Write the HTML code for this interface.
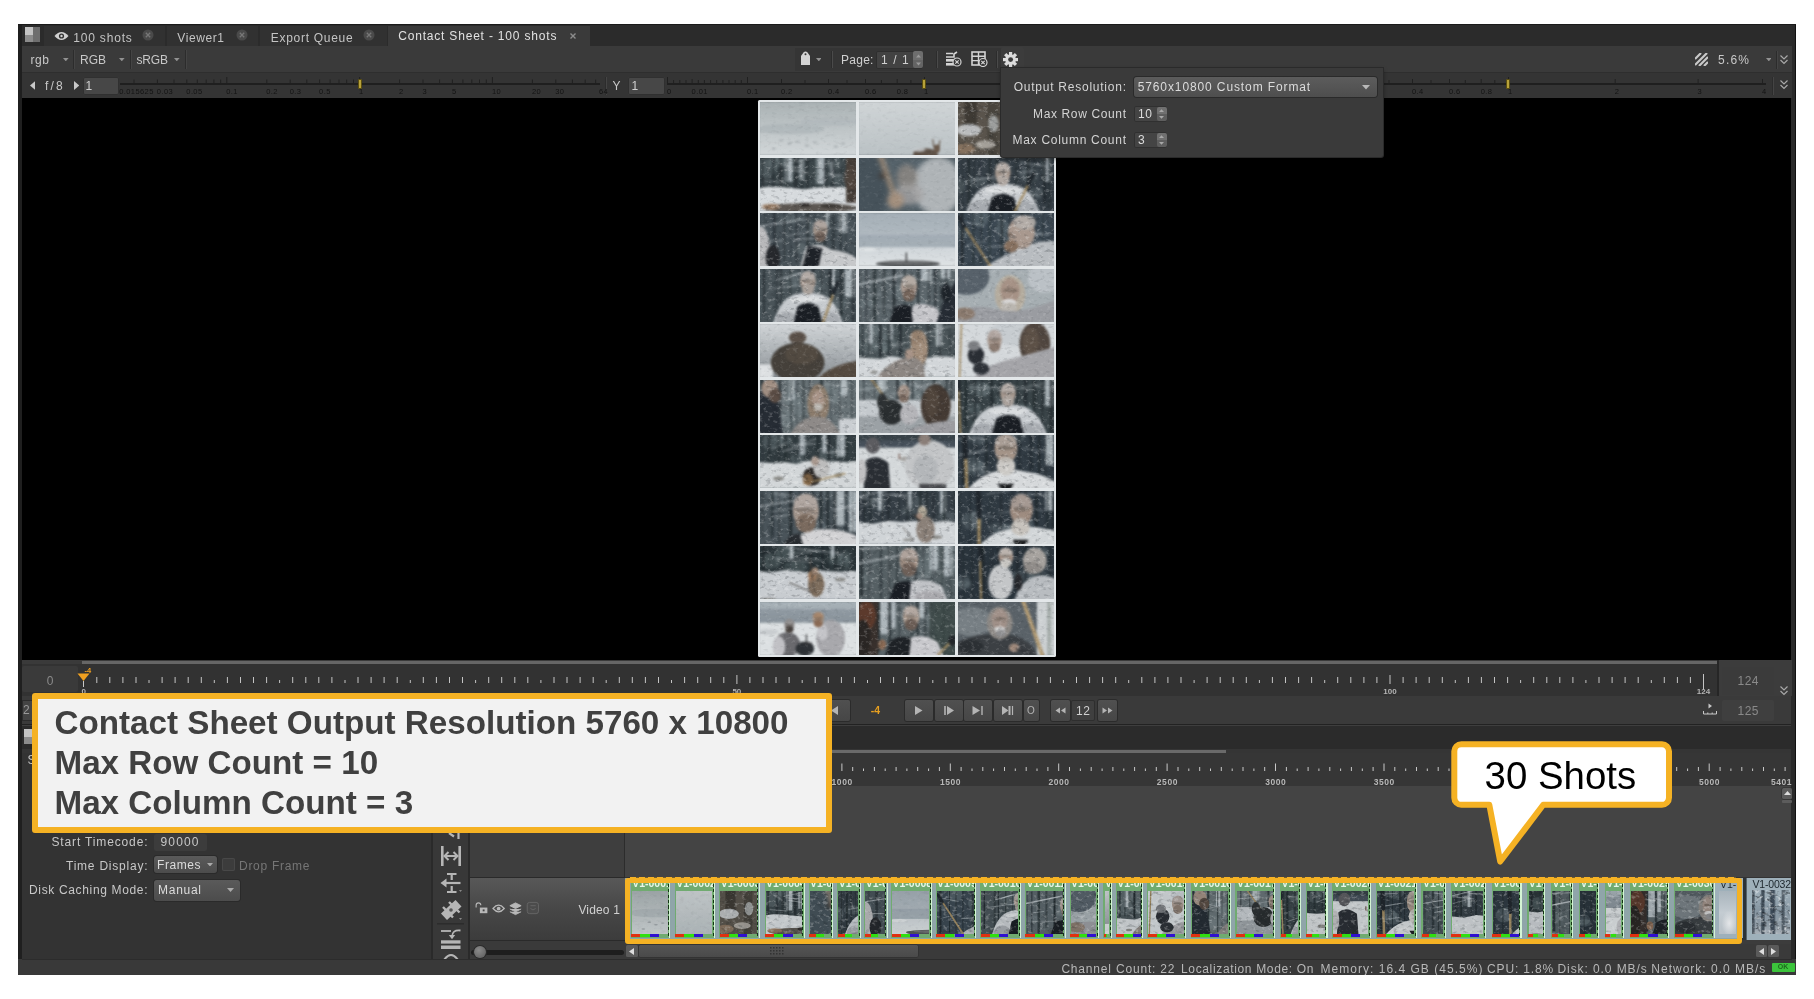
<!DOCTYPE html>
<html><head><meta charset="utf-8"><title>Contact Sheet</title>
<style>
html,body{margin:0;padding:0;background:#fff;}
body{width:1814px;height:999px;position:relative;overflow:hidden;font-family:"Liberation Sans",sans-serif;will-change:transform;-webkit-font-smoothing:antialiased;}
div,svg{position:absolute;box-sizing:border-box;}
</style></head><body>
<div style="left:18px;top:24px;width:1778px;height:951px;background:#3a3a3a;"></div>
<div style="left:18px;top:24px;width:4px;height:951px;background:#1f1f1f;"></div>
<div style="left:1791px;top:24px;width:5px;height:951px;background:#2a2a2a;"></div>
<div style="left:1795px;top:24px;width:1px;height:951px;background:#111;"></div>
<div style="left:22px;top:24px;width:1770px;height:22px;background:#2b2b2b;"></div>
<div style="left:18px;top:24px;width:1778px;height:1px;background:#1a1a1a;"></div>
<div style="left:25px;top:27px;width:8px;height:8px;background:#c4c4c4;"></div>
<div style="left:25px;top:35px;width:8px;height:7px;background:#8c8c8c;"></div>
<div style="left:33px;top:27px;width:7px;height:15px;background:#6e6e6e;"></div>
<div style="left:44px;top:26px;width:121px;height:20px;background:#313131;"></div>
<div style="left:167px;top:26px;width:91px;height:20px;background:#313131;"></div>
<div style="left:260px;top:26px;width:127px;height:20px;background:#313131;"></div>
<div style="left:388px;top:26px;width:201.5px;height:20px;background:#3a3a3a;"></div>
<svg style="left:54px;top:31px" width="15" height="10" viewBox="0 0 15 10"><path d="M0.5 5 Q7.5 -3 14.5 5 Q7.5 13 0.5 5Z" fill="#d0d0d0"/><circle cx="7.5" cy="5" r="2.6" fill="#313131"/><circle cx="7.5" cy="5" r="1.2" fill="#d0d0d0"/></svg>
<div style="left:73.20px;top:30.50px;font-size:12px;line-height:14px;color:#c4c4c4;white-space:pre;letter-spacing:0.820px;">100 shots</div>
<div style="left:177.30px;top:30.50px;font-size:12px;line-height:14px;color:#c4c4c4;white-space:pre;letter-spacing:0.593px;">Viewer1</div>
<div style="left:270.70px;top:30.50px;font-size:12px;line-height:14px;color:#c4c4c4;white-space:pre;letter-spacing:0.723px;">Export Queue</div>
<div style="left:398.20px;top:29.00px;font-size:12px;line-height:14px;color:#e2e2e2;white-space:pre;letter-spacing:0.810px;">Contact Sheet - 100 shots</div>
<svg style="left:141.6px;top:29px" width="12" height="12" viewBox="0 0 12 12"><circle cx="6" cy="6" r="5.5" fill="#4a4a4a"/><path d="M3.8 3.8 L8.2 8.2 M8.2 3.8 L3.8 8.2" stroke="#777" stroke-width="1.3"/></svg>
<svg style="left:236px;top:29px" width="12" height="12" viewBox="0 0 12 12"><circle cx="6" cy="6" r="5.5" fill="#4a4a4a"/><path d="M3.8 3.8 L8.2 8.2 M8.2 3.8 L3.8 8.2" stroke="#777" stroke-width="1.3"/></svg>
<svg style="left:363px;top:29px" width="12" height="12" viewBox="0 0 12 12"><circle cx="6" cy="6" r="5.5" fill="#4a4a4a"/><path d="M3.8 3.8 L8.2 8.2 M8.2 3.8 L3.8 8.2" stroke="#777" stroke-width="1.3"/></svg>
<svg style="left:568px;top:31px" width="10" height="10" viewBox="0 0 10 10"><path d="M2.5 2.5 L7.5 7.5 M7.5 2.5 L2.5 7.5" stroke="#8c8c8c" stroke-width="1.4"/></svg>
<div style="left:22px;top:46px;width:1770px;height:27px;background:#3a3a3a;"></div>
<div style="left:22px;top:72px;width:1770px;height:1px;background:#2e2e2e;"></div>
<div style="left:30.50px;top:52.50px;font-size:12px;line-height:14px;color:#c8c8c8;white-space:pre;letter-spacing:0.578px;">rgb</div>
<div style="left:80.00px;top:52.50px;font-size:12px;line-height:14px;color:#c8c8c8;white-space:pre;letter-spacing:-0.002px;">RGB</div>
<div style="left:136.50px;top:52.50px;font-size:12px;line-height:14px;color:#c8c8c8;white-space:pre;letter-spacing:-0.168px;">sRGB</div>
<svg style="left:63.2px;top:58px" width="5.6" height="3.4" viewBox="0 0 7 4"><path d="M0 0 H7 L3.5 4Z" fill="#929292"/></svg>
<svg style="left:119.2px;top:58px" width="5.6" height="3.4" viewBox="0 0 7 4"><path d="M0 0 H7 L3.5 4Z" fill="#929292"/></svg>
<svg style="left:174.2px;top:58px" width="5.6" height="3.4" viewBox="0 0 7 4"><path d="M0 0 H7 L3.5 4Z" fill="#929292"/></svg>
<svg style="left:1765.9px;top:58px" width="5.6" height="3.4" viewBox="0 0 7 4"><path d="M0 0 H7 L3.5 4Z" fill="#929292"/></svg>
<div style="left:73px;top:50px;width:1px;height:19px;background:#2c2c2c;"></div>
<div style="left:74px;top:50px;width:1px;height:19px;background:#444;"></div>
<div style="left:129.5px;top:50px;width:1px;height:19px;background:#2c2c2c;"></div>
<div style="left:130.5px;top:50px;width:1px;height:19px;background:#444;"></div>
<div style="left:184.5px;top:50px;width:1px;height:19px;background:#2c2c2c;"></div>
<div style="left:185.5px;top:50px;width:1px;height:19px;background:#444;"></div>
<div style="left:795px;top:48px;width:229px;height:23px;background:#353535;"></div>
<svg style="left:800px;top:51px" width="11" height="15" viewBox="0 0 11 15"><path d="M1 5 L3.5 1.5 Q5.5 -0.3 7.5 1.5 L10 5 V14 H1Z" fill="#d4d4d4"/><circle cx="5.5" cy="3.2" r="1" fill="#353535"/></svg>
<svg style="left:815.9px;top:58px" width="5.6" height="3.4" viewBox="0 0 7 4"><path d="M0 0 H7 L3.5 4Z" fill="#929292"/></svg>
<div style="left:830.5px;top:51px;width:1px;height:17px;background:#2c2c2c;"></div>
<div style="left:831.5px;top:51px;width:1px;height:17px;background:#4a4a4a;"></div>
<div style="left:935.5px;top:51px;width:1px;height:17px;background:#2c2c2c;"></div>
<div style="left:936.5px;top:51px;width:1px;height:17px;background:#4a4a4a;"></div>
<div style="left:995.5px;top:51px;width:1px;height:17px;background:#2c2c2c;"></div>
<div style="left:996.5px;top:51px;width:1px;height:17px;background:#4a4a4a;"></div>
<div style="left:841.00px;top:52.50px;font-size:12px;line-height:14px;color:#d0d0d0;white-space:pre;letter-spacing:0.260px;">Page:</div>
<div style="left:876px;top:50.5px;width:47px;height:18px;background:#424242;border-radius:2px;box-shadow:inset 0 0 0 1px #2e2e2e;"></div>
<div style="left:881.00px;top:52.50px;font-size:12px;line-height:14px;color:#d0d0d0;white-space:pre;letter-spacing:1.063px;">1 / 1</div>
<div style="left:912.5px;top:51px;width:10.5px;height:8.5px;background:#6e6e6e;border-radius:2px 2px 0 0;"></div>
<div style="left:912.5px;top:59.5px;width:10.5px;height:8.5px;background:#646464;border-radius:0 0 2px 2px;"></div>
<svg style="left:915.5px;top:54px" width="5" height="12" viewBox="0 0 5 12"><path d="M0 3.5 L2.5 0.5 L5 3.5Z M0 8.5 L2.5 11.5 L5 8.5Z" fill="#999"/></svg>
<svg style="left:945px;top:51px" width="17" height="16" viewBox="0 0 17 16"><path d="M1 2.5 H8 M1 6 H9 V3 L12 1" stroke="#d4d4d4" stroke-width="1.6" fill="none"/><rect x="1" y="8" width="8" height="2.6" fill="#d4d4d4"/><rect x="1" y="12" width="8" height="2.6" fill="#d4d4d4"/><circle cx="12" cy="11" r="4" fill="#353535" stroke="#d4d4d4" stroke-width="1.2"/><path d="M10.3 9.3 L13.7 12.7 M13.7 9.3 L10.3 12.7" stroke="#d4d4d4" stroke-width="1.2"/></svg>
<svg style="left:970.5px;top:51px" width="17" height="16" viewBox="0 0 17 16"><rect x="1" y="1" width="13" height="13" fill="none" stroke="#d4d4d4" stroke-width="1.6"/><path d="M1 5.3 H14 M1 9.6 H14 M7.5 1 V14" stroke="#d4d4d4" stroke-width="1.4"/><circle cx="12" cy="11.5" r="4" fill="#353535" stroke="#d4d4d4" stroke-width="1.2"/><path d="M10.3 9.8 L13.7 13.2 M13.7 9.8 L10.3 13.2" stroke="#d4d4d4" stroke-width="1.2"/></svg>
<div style="left:1001px;top:47px;width:23px;height:24px;background:#3c3c3c;border-radius:2px;"></div>
<svg style="left:1003.2px;top:51.8px" width="15.2" height="15.2" viewBox="-8 -8 16 16"><g fill="#dcdcdc"><rect x="-1.7" y="-8" width="3.4" height="4" transform="rotate(0)"/><rect x="-1.7" y="-8" width="3.4" height="4" transform="rotate(45)"/><rect x="-1.7" y="-8" width="3.4" height="4" transform="rotate(90)"/><rect x="-1.7" y="-8" width="3.4" height="4" transform="rotate(135)"/><rect x="-1.7" y="-8" width="3.4" height="4" transform="rotate(180)"/><rect x="-1.7" y="-8" width="3.4" height="4" transform="rotate(225)"/><rect x="-1.7" y="-8" width="3.4" height="4" transform="rotate(270)"/><rect x="-1.7" y="-8" width="3.4" height="4" transform="rotate(315)"/></g><circle r="5.6" fill="#dcdcdc"/><circle r="2.6" fill="#3c3c3c"/></svg>
<svg style="left:1695px;top:53px" width="13" height="13" viewBox="0 0 13 13"><path d="M0 6 L6 0 M0 12 L12 0 M4 13 L13 4 M9 13 L13 9" stroke="#c8c8c8" stroke-width="2.2"/></svg>
<div style="left:1718.00px;top:53.00px;font-size:12px;line-height:14px;color:#c8c8c8;white-space:pre;letter-spacing:1.216px;">5.6%</div>
<div style="left:1775.5px;top:51px;width:1px;height:18px;background:#2c2c2c;"></div>
<div style="left:1776.5px;top:51px;width:1px;height:18px;background:#444;"></div>
<svg style="left:1780px;top:55px" width="8" height="10" viewBox="0 0 8 10"><path d="M0.5 0.5 L4 4 L7.5 0.5 M0.5 5 L4 8.5 L7.5 5" stroke="#a8a8a8" stroke-width="1.2" fill="none"/></svg>
<div style="left:22px;top:73px;width:1770px;height:25px;background:#343434;"></div>
<svg style="left:29.5px;top:80.5px" width="5.4" height="9" viewBox="0 0 6 10"><path d="M6 0 V10 L0 5Z" fill="#c8c8c8"/></svg>
<svg style="left:74px;top:80.5px" width="5.4" height="9" viewBox="0 0 6 10"><path d="M0 0 V10 L6 5Z" fill="#c8c8c8"/></svg>
<div style="left:45.00px;top:78.50px;font-size:12px;line-height:14px;color:#c8c8c8;white-space:pre;letter-spacing:2.129px;">f/8</div>
<div style="left:83px;top:77px;width:35.5px;height:17.5px;background:#474747;border-radius:2px;box-shadow:inset 0 0 0 1px #303030;"></div>
<div style="left:85.50px;top:79.00px;font-size:12px;line-height:14px;color:#d0d0d0;white-space:pre;">1</div>
<div style="left:604.5px;top:77px;width:1px;height:18px;background:#2c2c2c;"></div>
<div style="left:605.5px;top:77px;width:1px;height:18px;background:#444;"></div>
<div style="left:612.50px;top:79.00px;font-size:12px;line-height:14px;color:#c8c8c8;white-space:pre;">Y</div>
<div style="left:628px;top:77px;width:36.5px;height:17.5px;background:#474747;border-radius:2px;box-shadow:inset 0 0 0 1px #303030;"></div>
<div style="left:631.50px;top:79.00px;font-size:12px;line-height:14px;color:#d0d0d0;white-space:pre;">1</div>
<div style="left:1771.5px;top:77px;width:1px;height:18px;background:#2c2c2c;"></div>
<div style="left:1772.5px;top:77px;width:1px;height:18px;background:#444;"></div>
<svg style="left:1780px;top:79.5px" width="8" height="10" viewBox="0 0 8 10"><path d="M0.5 0.5 L4 4 L7.5 0.5 M0.5 5 L4 8.5 L7.5 5" stroke="#a8a8a8" stroke-width="1.2" fill="none"/></svg>
<div style="left:120px;top:82.5px;width:480px;height:2px;background:#1f1f1f;"></div>
<svg style="left:120px;top:76.5px" width="482" height="8" viewBox="0 0 482 8"><path d="M14.0 2.5v3.5M37.4 2.5v3.5M54.0 2.5v3.5M66.8 2.5v3.5M77.3 2.5v3.5M86.2 2.5v3.5M93.9 2.5v3.5M100.7 2.5v3.5M106.8 0.0v6.0M146.8 2.5v3.5M170.2 2.5v3.5M186.8 2.5v3.5M199.6 2.5v3.5M210.1 2.5v3.5M219.0 2.5v3.5M226.7 2.5v3.5M233.5 2.5v3.5M239.6 0.0v6.0M279.6 2.5v3.5M303.0 2.5v3.5M319.6 2.5v3.5M332.4 2.5v3.5M342.9 2.5v3.5M351.8 2.5v3.5M359.5 2.5v3.5M366.3 2.5v3.5M372.4 0.0v6.0M412.4 2.5v3.5M435.8 2.5v3.5M452.4 2.5v3.5M465.2 2.5v3.5M475.7 2.5v3.5" stroke="#202020" stroke-width="1" fill="none"/></svg>
<div style="left:119.24px;top:87.00px;font-size:7.5px;line-height:9px;color:#131313;white-space:pre;letter-spacing:0.4px;">0.015625</div>
<div style="left:156.86px;top:87.00px;font-size:7.5px;line-height:9px;color:#131313;white-space:pre;letter-spacing:0.4px;">0.03</div>
<div style="left:186.32px;top:87.00px;font-size:7.5px;line-height:9px;color:#131313;white-space:pre;letter-spacing:0.4px;">0.05</div>
<div style="left:226.30px;top:87.00px;font-size:7.5px;line-height:9px;color:#131313;white-space:pre;letter-spacing:0.4px;">0.1</div>
<div style="left:266.28px;top:87.00px;font-size:7.5px;line-height:9px;color:#131313;white-space:pre;letter-spacing:0.4px;">0.2</div>
<div style="left:289.66px;top:87.00px;font-size:7.5px;line-height:9px;color:#131313;white-space:pre;letter-spacing:0.4px;">0.3</div>
<div style="left:319.12px;top:87.00px;font-size:7.5px;line-height:9px;color:#131313;white-space:pre;letter-spacing:0.4px;">0.5</div>
<div style="left:359.10px;top:87.00px;font-size:7.5px;line-height:9px;color:#131313;white-space:pre;letter-spacing:0.4px;">1</div>
<div style="left:399.08px;top:87.00px;font-size:7.5px;line-height:9px;color:#131313;white-space:pre;letter-spacing:0.4px;">2</div>
<div style="left:422.46px;top:87.00px;font-size:7.5px;line-height:9px;color:#131313;white-space:pre;letter-spacing:0.4px;">3</div>
<div style="left:451.92px;top:87.00px;font-size:7.5px;line-height:9px;color:#131313;white-space:pre;letter-spacing:0.4px;">5</div>
<div style="left:491.90px;top:87.00px;font-size:7.5px;line-height:9px;color:#131313;white-space:pre;letter-spacing:0.4px;">10</div>
<div style="left:531.88px;top:87.00px;font-size:7.5px;line-height:9px;color:#131313;white-space:pre;letter-spacing:0.4px;">20</div>
<div style="left:555.26px;top:87.00px;font-size:7.5px;line-height:9px;color:#131313;white-space:pre;letter-spacing:0.4px;">30</div>
<div style="left:598.96px;top:87.00px;font-size:7.5px;line-height:9px;color:#131313;white-space:pre;letter-spacing:0.4px;">64</div>
<div style="left:357.8px;top:79px;width:4px;height:9.5px;background:#b8a23a;border:0.7px solid #5a4e10;box-sizing:border-box;border-radius:1px;"></div>
<div style="left:667px;top:82.5px;width:334px;height:2px;background:#1f1f1f;"></div>
<svg style="left:667px;top:76.5px" width="334" height="8" viewBox="0 0 334 8"><path d="M0.5 0.0v6.0M6.6 3.0v3.0M12.8 3.0v3.0M19.0 3.0v3.0M25.1 2.0v4.0M31.3 3.0v3.0M37.4 3.0v3.0M43.6 3.0v3.0M49.7 3.0v3.0M55.9 3.0v3.0M62.0 3.0v3.0M68.2 3.0v3.0M74.3 3.0v3.0M80.5 0.0v6.0M114.5 2.0v4.0M138.0 3.0v3.0M161.5 2.0v4.0M180.0 3.0v3.0M198.5 2.0v4.0M214.4 3.0v3.0M230.2 2.0v4.0M243.9 3.0v3.0M257.5 0.0v6.0" stroke="#202020" stroke-width="1" fill="none"/></svg>
<div style="left:667.00px;top:87.00px;font-size:7.5px;line-height:9px;color:#131313;white-space:pre;letter-spacing:0.4px;">0</div>
<div style="left:691.60px;top:87.00px;font-size:7.5px;line-height:9px;color:#131313;white-space:pre;letter-spacing:0.4px;">0.01</div>
<div style="left:747.00px;top:87.00px;font-size:7.5px;line-height:9px;color:#131313;white-space:pre;letter-spacing:0.4px;">0.1</div>
<div style="left:781.00px;top:87.00px;font-size:7.5px;line-height:9px;color:#131313;white-space:pre;letter-spacing:0.4px;">0.2</div>
<div style="left:828.00px;top:87.00px;font-size:7.5px;line-height:9px;color:#131313;white-space:pre;letter-spacing:0.4px;">0.4</div>
<div style="left:865.00px;top:87.00px;font-size:7.5px;line-height:9px;color:#131313;white-space:pre;letter-spacing:0.4px;">0.6</div>
<div style="left:896.70px;top:87.00px;font-size:7.5px;line-height:9px;color:#131313;white-space:pre;letter-spacing:0.4px;">0.8</div>
<div style="left:924.00px;top:87.00px;font-size:7.5px;line-height:9px;color:#131313;white-space:pre;letter-spacing:0.4px;">1</div>
<div style="left:922px;top:79px;width:4px;height:9.5px;background:#b8a23a;border:0.7px solid #5a4e10;box-sizing:border-box;border-radius:1px;"></div>
<div style="left:1383px;top:82.5px;width:383px;height:2px;background:#1f1f1f;"></div>
<svg style="left:1383px;top:76.5px" width="383" height="8" viewBox="0 0 383 8"><path d="M6.0 3.0v3.0M29.5 2.0v4.0M48.0 3.0v3.0M66.5 2.0v4.0M82.3 3.0v3.0M98.2 2.0v4.0M111.8 3.0v3.0M125.5 0.0v6.0M232.2 2.0v4.0M315.1 2.0v4.0M379.5 2.0v4.0" stroke="#202020" stroke-width="1" fill="none"/></svg>
<div style="left:1412.00px;top:87.00px;font-size:7.5px;line-height:9px;color:#131313;white-space:pre;letter-spacing:0.4px;">0.4</div>
<div style="left:1449.00px;top:87.00px;font-size:7.5px;line-height:9px;color:#131313;white-space:pre;letter-spacing:0.4px;">0.6</div>
<div style="left:1480.70px;top:87.00px;font-size:7.5px;line-height:9px;color:#131313;white-space:pre;letter-spacing:0.4px;">0.8</div>
<div style="left:1508.00px;top:87.00px;font-size:7.5px;line-height:9px;color:#131313;white-space:pre;letter-spacing:0.4px;">1</div>
<div style="left:1614.70px;top:87.00px;font-size:7.5px;line-height:9px;color:#131313;white-space:pre;letter-spacing:0.4px;">2</div>
<div style="left:1697.60px;top:87.00px;font-size:7.5px;line-height:9px;color:#131313;white-space:pre;letter-spacing:0.4px;">3</div>
<div style="left:1762.00px;top:87.00px;font-size:7.5px;line-height:9px;color:#131313;white-space:pre;letter-spacing:0.4px;">4</div>
<div style="left:1506px;top:79px;width:4px;height:9.5px;background:#b8a23a;border:0.7px solid #5a4e10;box-sizing:border-box;border-radius:1px;"></div>
<div style="left:22px;top:98px;width:1769px;height:562px;background:#000;"></div>
<svg width="0" height="0" style="left:0;top:0"><defs><filter id="nz" x="0" y="0" width="100%" height="100%" color-interpolation-filters="sRGB"><feTurbulence type="fractalNoise" baseFrequency="0.22 0.3" numOctaves="3" seed="7"/><feColorMatrix values="0 0 0 0 1  0 0 0 0 1  0 0 0 0 1  4.5 0 0 0 -2.45"/></filter><filter id="nd" x="0" y="0" width="100%" height="100%" color-interpolation-filters="sRGB"><feTurbulence type="fractalNoise" baseFrequency="0.18 0.28" numOctaves="3" seed="23"/><feColorMatrix values="0 0 0 0 0.08  0 0 0 0 0.1  0 0 0 0 0.12  0 4.5 0 0 -2.5"/></filter><filter id="bl" x="-5%" y="-5%" width="110%" height="110%" color-interpolation-filters="sRGB"><feGaussianBlur stdDeviation="0.9"/></filter><filter id="bl3" x="-5%" y="-5%" width="110%" height="110%" color-interpolation-filters="sRGB"><feGaussianBlur stdDeviation="2.6"/></filter></defs></svg>
<svg width="0" height="0" style="left:0;top:0"><defs><g id="t0"><defs><linearGradient id="g1" x1="0" y1="0" x2="0" y2="1"><stop offset="0" stop-color="#a9b1b3"/><stop offset="1" stop-color="#d2d7d9"/></linearGradient></defs><rect x="0" y="0" width="96.4" height="52.8" fill="url(#g1)"/><ellipse cx="30" cy="27" rx="34" ry="5" fill="#a6aeb2" opacity="0.55"/><ellipse cx="70" cy="20" rx="30" ry="4" fill="#aab2b6" opacity="0.4"/><ellipse cx="22" cy="38" rx="2.2" ry="0.8" fill="#8e969a" opacity="0.7"/><ellipse cx="30" cy="41" rx="2.2" ry="0.8" fill="#8e969a" opacity="0.7"/><ellipse cx="38" cy="39" rx="2.2" ry="0.8" fill="#8e969a" opacity="0.7"/><ellipse cx="47" cy="43" rx="2.2" ry="0.8" fill="#8e969a" opacity="0.7"/><ellipse cx="55" cy="40" rx="2.2" ry="0.8" fill="#8e969a" opacity="0.7"/><ellipse cx="75" cy="44" rx="2.2" ry="0.8" fill="#8e969a" opacity="0.7"/><ellipse cx="82" cy="41" rx="2.2" ry="0.8" fill="#8e969a" opacity="0.7"/><ellipse cx="15" cy="46" rx="2.2" ry="0.8" fill="#8e969a" opacity="0.7"/></g><g id="t1"><defs><linearGradient id="g2" x1="0" y1="0" x2="0" y2="1"><stop offset="0" stop-color="#d0d5d7"/><stop offset="1" stop-color="#bac1c4"/></linearGradient></defs><rect x="0" y="0" width="96.4" height="52.8" fill="url(#g2)"/><ellipse cx="66" cy="51" rx="12" ry="5.5" fill="#5e5248"/><ellipse cx="77" cy="46" rx="3" ry="4" fill="#6a5a4c"/><path d="M74 44L73 37" stroke="#5a4a3c" stroke-width="1" stroke-linecap="round"/><path d="M79 44L80 38" stroke="#5a4a3c" stroke-width="1" stroke-linecap="round"/><ellipse cx="60" cy="47" rx="6" ry="2" fill="#c8ccce" opacity="0.8"/></g><g id="t2"><rect x="0" y="0" width="96.4" height="52.8" fill="#5a544c"/><rect x="8" y="0" width="12" height="30" fill="#3e3a34"/><rect x="30" y="0" width="10" height="52.8" fill="#46423c" opacity="0.9"/><ellipse cx="12" cy="28" rx="12" ry="6" fill="#c6cacc" opacity="0.9"/><ellipse cx="28" cy="42" rx="10" ry="4" fill="#b8b4ae" opacity="0.8"/><ellipse cx="8" cy="46" rx="10" ry="5" fill="#8a7460" opacity="0.9"/><ellipse cx="36" cy="22" rx="5" ry="8" fill="#c0c4c6" opacity="0.7"/></g><g id="t3"><rect x="0" y="0" width="96.4" height="34" fill="#3c464a"/><ellipse cx="22.8" cy="2.8" rx="7.8" ry="4.9" fill="#8a969c" opacity="0.28"/><ellipse cx="6.4" cy="10.9" rx="11.4" ry="8.8" fill="#8a969c" opacity="0.28"/><ellipse cx="73.8" cy="6.0" rx="8.8" ry="5.7" fill="#8a969c" opacity="0.28"/><ellipse cx="16.6" cy="2.9" rx="6.5" ry="9.6" fill="#8a969c" opacity="0.28"/><ellipse cx="79.9" cy="21.9" rx="10.6" ry="5.2" fill="#8a969c" opacity="0.28"/><rect x="26" y="0" width="7" height="24" fill="#c2cacf" opacity="0.8"/><rect x="40" y="2" width="4" height="20" fill="#c2cacf" opacity="0.8"/><rect x="56" y="0" width="8" height="26" fill="#c2cacf" opacity="0.8"/><rect x="70" y="4" width="3" height="16" fill="#c2cacf" opacity="0.8"/><rect x="3.2" y="0" width="1.6" height="29.3" fill="#1e262a" opacity="0.72"/><rect x="12.9" y="0" width="3" height="30.2" fill="#1e262a" opacity="0.56"/><rect x="19.9" y="0" width="3" height="33.2" fill="#1e262a" opacity="0.45"/><rect x="26.9" y="0" width="1.6" height="33.2" fill="#1e262a" opacity="0.68"/><rect x="34.8" y="0" width="3" height="30.4" fill="#1e262a" opacity="0.65"/><rect x="41.5" y="0" width="1.6" height="33.0" fill="#1e262a" opacity="0.47"/><rect x="46.8" y="0" width="1.6" height="31.5" fill="#1e262a" opacity="0.74"/><rect x="56.7" y="0" width="1.2" height="34.0" fill="#1e262a" opacity="0.54"/><rect x="64.6" y="0" width="1.2" height="32.1" fill="#1e262a" opacity="0.65"/><rect x="70.9" y="0" width="2.4" height="32.7" fill="#1e262a" opacity="0.59"/><rect x="79.8" y="0" width="1.6" height="29.4" fill="#1e262a" opacity="0.48"/><rect x="86.4" y="0" width="3" height="32.0" fill="#1e262a" opacity="0.56"/><rect x="93.7" y="0" width="1.2" height="30.4" fill="#1e262a" opacity="0.46"/><path d="M6.4 23.0L24.9 24.5" stroke="#d4dade" stroke-width="0.8" stroke-linecap="round" opacity="0.55"/><path d="M24.9 9.0L40.4 10.1" stroke="#d4dade" stroke-width="1.1" stroke-linecap="round" opacity="0.55"/><path d="M67.1 16.8L80.8 17.5" stroke="#d4dade" stroke-width="1.1" stroke-linecap="round" opacity="0.55"/><path d="M22.5 7.5L48.3 1.7" stroke="#d4dade" stroke-width="0.9" stroke-linecap="round" opacity="0.55"/><path d="M28.0 11.9L48.4 15.2" stroke="#d4dade" stroke-width="1.2" stroke-linecap="round" opacity="0.55"/><path d="M0 30L9.9 28.6L21.1 28.8L29.6 29.6L44.9 31.1L59.1 29.0L71.3 29.2L80.7 28.6L90.4 31.5L96.4 31.1L96.4 52.8L0 52.8Z" fill="#d6dadd"/><rect x="85" y="0" width="12" height="44" fill="#463e38"/><ellipse cx="90" cy="20" rx="7" ry="12" fill="#50463f" opacity="0.8"/><ellipse cx="50" cy="49" rx="46" ry="4.5" fill="#55504a" opacity="0.95"/><ellipse cx="12" cy="48" rx="9" ry="3" fill="#9a7a60" opacity="0.8"/><ellipse cx="45" cy="46" rx="6" ry="2" fill="#2e2a28" opacity="0.9"/><ellipse cx="70" cy="47" rx="10" ry="2.5" fill="#3a3632" opacity="0.9"/></g><g id="t4"><rect x="0" y="0" width="96.4" height="52.8" fill="#55626a"/><ellipse cx="8" cy="30" rx="22" ry="34" fill="#46525a"/><ellipse cx="78" cy="28" rx="24" ry="28" fill="#b4b8bc" opacity="0.95"/><ellipse cx="48" cy="20" rx="10" ry="13" fill="#8a8682" opacity="0.9"/><ellipse cx="50" cy="36" rx="14" ry="10" fill="#a4a2a2" opacity="0.8"/><path d="M22 -2L38 44" stroke="#a08c78" stroke-width="4.5" stroke-linecap="round"/><ellipse cx="24" cy="18" rx="3" ry="3" fill="#3a3430"/><ellipse cx="37" cy="42" rx="8" ry="8" fill="#a4907e"/></g><g id="t5"><rect x="0" y="0" width="96.4" height="52.8" fill="#363f46"/><ellipse cx="76.5" cy="34.7" rx="8.4" ry="5.6" fill="#8a969c" opacity="0.28"/><ellipse cx="0.0" cy="28.0" rx="8.3" ry="8.6" fill="#8a969c" opacity="0.28"/><ellipse cx="36.0" cy="32.5" rx="6.9" ry="8.8" fill="#8a969c" opacity="0.28"/><ellipse cx="70.4" cy="17.5" rx="8.8" ry="8.1" fill="#8a969c" opacity="0.28"/><ellipse cx="18.6" cy="23.4" rx="10.6" ry="5.6" fill="#8a969c" opacity="0.28"/><rect x="84" y="0" width="7" height="24" fill="#c2cacf" opacity="0.8"/><rect x="5.2" y="0" width="0.8" height="51.6" fill="#1e262a" opacity="0.6"/><rect x="10.9" y="0" width="2.4" height="51.3" fill="#1e262a" opacity="0.65"/><rect x="16.5" y="0" width="1.2" height="50.4" fill="#1e262a" opacity="0.81"/><rect x="22.2" y="0" width="0.8" height="49.5" fill="#1e262a" opacity="0.54"/><rect x="31.8" y="0" width="1.6" height="48.7" fill="#1e262a" opacity="0.82"/><rect x="38.1" y="0" width="3" height="50.0" fill="#1e262a" opacity="0.76"/><rect x="48.8" y="0" width="0.8" height="49.9" fill="#1e262a" opacity="0.56"/><rect x="56.8" y="0" width="1.6" height="49.5" fill="#1e262a" opacity="0.49"/><rect x="68.0" y="0" width="3" height="46.5" fill="#1e262a" opacity="0.72"/><rect x="74.8" y="0" width="1.2" height="47.9" fill="#1e262a" opacity="0.55"/><rect x="84.0" y="0" width="3" height="45.0" fill="#1e262a" opacity="0.8"/><rect x="89.1" y="0" width="1.6" height="49.3" fill="#1e262a" opacity="0.75"/><path d="M28.9 20.4L47.5 21.9" stroke="#d4dade" stroke-width="0.9" stroke-linecap="round" opacity="0.55"/><path d="M14.3 22.8L49.3 16.1" stroke="#d4dade" stroke-width="0.9" stroke-linecap="round" opacity="0.55"/><path d="M62.1 5.1L88.0 9.3" stroke="#d4dade" stroke-width="0.9" stroke-linecap="round" opacity="0.55"/><path d="M60.5 15.3L74.2 13.3" stroke="#d4dade" stroke-width="0.8" stroke-linecap="round" opacity="0.55"/><path d="M63.0 34.9L79.4 36.4" stroke="#d4dade" stroke-width="0.9" stroke-linecap="round" opacity="0.55"/><path d="M9 54.8Q16.2 31 32.4 27Q45 24 57.6 27Q73.8 31 81 54.8Z" fill="#c6cace"/><ellipse cx="22.68" cy="50.8" rx="10.799999999999999" ry="9" fill="#8c9096" opacity="0.55"/><ellipse cx="67.32" cy="50.8" rx="10.799999999999999" ry="9" fill="#8c9096" opacity="0.55"/><ellipse cx="45" cy="32" rx="18.0" ry="3" fill="#e2e5e7" opacity="0.7"/><path d="M29.880000000000003 54.8L34.2 39Q45 32 55.8 39L60.12 54.8Z" fill="#1a1e24"/><ellipse cx="45" cy="15" rx="7.5" ry="10" fill="#a89a90"/><ellipse cx="45" cy="10.5" rx="7.125" ry="5.5" fill="#b8b2ae" opacity="0.8"/><ellipse cx="45" cy="14.5" rx="5.625" ry="1.4000000000000001" fill="#4a4038" opacity="0.45"/><ellipse cx="45" cy="22.2" rx="6.0" ry="5.5" fill="#b0a8a2"/><path d="M70 26L56 54" stroke="#a08a62" stroke-width="2.2" stroke-linecap="round"/><path d="M70 26L74.9 16.2" stroke="#22282e" stroke-width="3.74" stroke-linecap="round"/></g><g id="t6"><rect x="0" y="0" width="96.4" height="52.8" fill="#485258"/><ellipse cx="31.2" cy="6.4" rx="9.6" ry="4.4" fill="#8a969c" opacity="0.28"/><ellipse cx="51.7" cy="15.4" rx="5.4" ry="7.0" fill="#8a969c" opacity="0.28"/><ellipse cx="3.6" cy="18.3" rx="5.5" ry="4.5" fill="#8a969c" opacity="0.28"/><ellipse cx="40.9" cy="34.9" rx="5.9" ry="5.3" fill="#8a969c" opacity="0.28"/><ellipse cx="60.5" cy="40.0" rx="9.0" ry="6.4" fill="#8a969c" opacity="0.28"/><rect x="78" y="0" width="8" height="20" fill="#c2cacf" opacity="0.8"/><rect x="64" y="0" width="4" height="14" fill="#c2cacf" opacity="0.8"/><rect x="5.9" y="0" width="0.8" height="49.3" fill="#1e262a" opacity="0.51"/><rect x="13.8" y="0" width="3" height="45.8" fill="#1e262a" opacity="0.59"/><rect x="24.6" y="0" width="1.2" height="45.7" fill="#1e262a" opacity="0.71"/><rect x="30.9" y="0" width="0.8" height="49.2" fill="#1e262a" opacity="0.48"/><rect x="36.3" y="0" width="1.2" height="48.8" fill="#1e262a" opacity="0.69"/><rect x="46.7" y="0" width="2.4" height="49.5" fill="#1e262a" opacity="0.65"/><rect x="53.8" y="0" width="1.2" height="50.4" fill="#1e262a" opacity="0.56"/><rect x="62.8" y="0" width="3" height="48.8" fill="#1e262a" opacity="0.6"/><rect x="71.0" y="0" width="3" height="52.6" fill="#1e262a" opacity="0.5"/><rect x="78.9" y="0" width="1.6" height="46.1" fill="#1e262a" opacity="0.67"/><rect x="84.2" y="0" width="0.8" height="50.9" fill="#1e262a" opacity="0.71"/><rect x="95.3" y="0" width="1.6" height="47.6" fill="#1e262a" opacity="0.61"/><path d="M61.5 4.4L75.6 0.2" stroke="#d4dade" stroke-width="1.0" stroke-linecap="round" opacity="0.55"/><path d="M5.0 27.6L24.1 27.7" stroke="#d4dade" stroke-width="1.0" stroke-linecap="round" opacity="0.55"/><path d="M34.4 27.1L66.8 23.9" stroke="#d4dade" stroke-width="1.2" stroke-linecap="round" opacity="0.55"/><path d="M27.4 23.4L50.8 18.4" stroke="#d4dade" stroke-width="0.8" stroke-linecap="round" opacity="0.55"/><path d="M56.9 15.9L90.0 14.9" stroke="#d4dade" stroke-width="0.7" stroke-linecap="round" opacity="0.55"/><ellipse cx="2" cy="36" rx="9" ry="22" fill="#b8b8ba"/><ellipse cx="14" cy="44" rx="7" ry="12" fill="#26282c"/><path d="M40 54.8L46 34Q60 28 70 36Q90 38 98.4 48L98.4 54.8Z" fill="#c6c8ca"/><path d="M42 54.8L48 33L62 35L58 54.8Z" fill="#1e2228"/><ellipse cx="60" cy="17" rx="7" ry="9.5" fill="#a89a90"/><ellipse cx="60" cy="12.725" rx="6.6499999999999995" ry="5.2250000000000005" fill="#b0a8a2" opacity="0.8"/><ellipse cx="60" cy="16.525" rx="5.25" ry="1.33" fill="#4a4038" opacity="0.45"/><ellipse cx="60" cy="23.84" rx="5.6000000000000005" ry="5.2250000000000005" fill="#6e6058"/><path d="M0 14L50 6" stroke="#d0d6da" stroke-width="1.2" stroke-linecap="round" opacity="0.6"/></g><g id="t7"><defs><linearGradient id="g8" x1="0" y1="0" x2="0" y2="1"><stop offset="0" stop-color="#a4aeb6"/><stop offset="1" stop-color="#b6bfc5"/></linearGradient></defs><rect x="0" y="0" width="96.4" height="36" fill="url(#g8)"/><rect x="0" y="22" width="96.4" height="12" fill="#98a3ab" opacity="0.55"/><defs><linearGradient id="g8b" x1="0" y1="0" x2="0" y2="1"><stop offset="0" stop-color="#cfd5d9"/><stop offset="1" stop-color="#dfe3e5"/></linearGradient></defs><rect x="0" y="34" width="96.4" height="18.799999999999997" fill="url(#g8b)"/><ellipse cx="49" cy="50" rx="31" ry="3.2" fill="#55585a"/><ellipse cx="49" cy="49" rx="22" ry="1.6" fill="#7a7c7e" opacity="0.7"/><rect x="46.8" y="39" width="1.3" height="9" fill="#3a3a3c"/><ellipse cx="10" cy="36" rx="9" ry="2" fill="#e4e7e9" opacity="0.8"/></g><g id="t8"><rect x="0" y="0" width="96.4" height="52.8" fill="#3c4852"/><ellipse cx="44.6" cy="15.8" rx="6.0" ry="9.2" fill="#8a969c" opacity="0.28"/><ellipse cx="0.6" cy="21.2" rx="11.3" ry="4.5" fill="#8a969c" opacity="0.28"/><ellipse cx="53.4" cy="26.0" rx="5.3" ry="6.3" fill="#8a969c" opacity="0.28"/><ellipse cx="67.8" cy="19.1" rx="10.1" ry="4.9" fill="#8a969c" opacity="0.28"/><ellipse cx="22.9" cy="4.7" rx="8.5" ry="9.5" fill="#8a969c" opacity="0.28"/><rect x="4.4" y="0" width="2.4" height="51.1" fill="#1e262a" opacity="0.85"/><rect x="15.8" y="0" width="1.2" height="50.2" fill="#1e262a" opacity="0.78"/><rect x="23.7" y="0" width="0.8" height="51.0" fill="#1e262a" opacity="0.86"/><rect x="31.5" y="0" width="1.6" height="51.3" fill="#1e262a" opacity="0.54"/><rect x="42.7" y="0" width="2.4" height="45.3" fill="#1e262a" opacity="0.62"/><rect x="51.2" y="0" width="0.8" height="46.8" fill="#1e262a" opacity="0.78"/><rect x="62.1" y="0" width="3" height="44.9" fill="#1e262a" opacity="0.79"/><rect x="68.5" y="0" width="1.2" height="47.5" fill="#1e262a" opacity="0.85"/><rect x="74.4" y="0" width="0.8" height="48.8" fill="#1e262a" opacity="0.71"/><rect x="83.2" y="0" width="1.2" height="48.2" fill="#1e262a" opacity="0.63"/><rect x="92.7" y="0" width="0.8" height="50.4" fill="#1e262a" opacity="0.52"/><path d="M55.5 3.4L73.7 5.0" stroke="#d4dade" stroke-width="1.1" stroke-linecap="round" opacity="0.55"/><path d="M57.5 27.8L82.7 20.2" stroke="#d4dade" stroke-width="1.1" stroke-linecap="round" opacity="0.55"/><path d="M31.0 33.7L46.8 32.7" stroke="#d4dade" stroke-width="1.0" stroke-linecap="round" opacity="0.55"/><path d="M65.2 20.3L90.2 21.9" stroke="#d4dade" stroke-width="1.1" stroke-linecap="round" opacity="0.55"/><path d="M8.5 32.8L28.9 27.8" stroke="#d4dade" stroke-width="0.7" stroke-linecap="round" opacity="0.55"/><path d="M73.0 28.1L93.7 28.6" stroke="#d4dade" stroke-width="0.6" stroke-linecap="round" opacity="0.55"/><path d="M8.6 9.8L26.8 13.2" stroke="#d4dade" stroke-width="0.8" stroke-linecap="round" opacity="0.55"/><path d="M26 54.8Q40 44 56 38Q70 28 98.4 28L98.4 54.8Z" fill="#b8bcc0"/><ellipse cx="63" cy="20" rx="13" ry="15.5" fill="#a8988e"/><ellipse cx="66" cy="10" rx="11" ry="7" fill="#b4aeaa" opacity="0.9"/><ellipse cx="53" cy="33" rx="7" ry="6" fill="#86705f"/><ellipse cx="52" cy="22" rx="2.5" ry="1.5" fill="#3a3028" opacity="0.6"/><path d="M8 14L34 54" stroke="#a08a62" stroke-width="2" stroke-linecap="round"/><path d="M8 14L2.0 4.8" stroke="#22282e" stroke-width="3.4" stroke-linecap="round"/></g><g id="t9"><rect x="0" y="0" width="96.4" height="52.8" fill="#4a5459"/><ellipse cx="55.1" cy="18.1" rx="9.0" ry="5.2" fill="#8a969c" opacity="0.28"/><ellipse cx="78.4" cy="34.8" rx="9.6" ry="5.0" fill="#8a969c" opacity="0.28"/><ellipse cx="50.2" cy="13.8" rx="6.7" ry="9.7" fill="#8a969c" opacity="0.28"/><ellipse cx="96.1" cy="1.9" rx="11.0" ry="7.6" fill="#8a969c" opacity="0.28"/><ellipse cx="36.8" cy="12.0" rx="9.7" ry="6.7" fill="#8a969c" opacity="0.28"/><rect x="84" y="0" width="10" height="28" fill="#c2cacf" opacity="0.8"/><rect x="70" y="0" width="4" height="18" fill="#c2cacf" opacity="0.8"/><rect x="4.7" y="0" width="1.6" height="45.9" fill="#1e262a" opacity="0.8"/><rect x="16.6" y="0" width="2.4" height="49.7" fill="#1e262a" opacity="0.47"/><rect x="21.6" y="0" width="1.2" height="46.4" fill="#1e262a" opacity="0.86"/><rect x="30.4" y="0" width="1.2" height="47.4" fill="#1e262a" opacity="0.7"/><rect x="38.5" y="0" width="0.8" height="50.1" fill="#1e262a" opacity="0.6"/><rect x="47.0" y="0" width="1.2" height="52.6" fill="#1e262a" opacity="0.56"/><rect x="52.2" y="0" width="1.6" height="51.4" fill="#1e262a" opacity="0.75"/><rect x="60.9" y="0" width="0.8" height="46.1" fill="#1e262a" opacity="0.71"/><rect x="68.5" y="0" width="3" height="46.1" fill="#1e262a" opacity="0.88"/><rect x="79.0" y="0" width="2.4" height="46.2" fill="#1e262a" opacity="0.81"/><rect x="90.6" y="0" width="2.4" height="52.6" fill="#1e262a" opacity="0.65"/><path d="M11.1 20.2L43.0 16.0" stroke="#d4dade" stroke-width="0.8" stroke-linecap="round" opacity="0.55"/><path d="M50.9 35.0L66.9 29.4" stroke="#d4dade" stroke-width="1.1" stroke-linecap="round" opacity="0.55"/><path d="M25.3 9.8L49.8 2.4" stroke="#d4dade" stroke-width="1.1" stroke-linecap="round" opacity="0.55"/><path d="M18.7 11.2L40.0 5.4" stroke="#d4dade" stroke-width="1.2" stroke-linecap="round" opacity="0.55"/><path d="M38.2 33.2L67.2 39.1" stroke="#d4dade" stroke-width="0.8" stroke-linecap="round" opacity="0.55"/><path d="M14 54.8Q20.799999999999997 29 36.1 25Q48 22 59.9 25Q75.2 29 82 54.8Z" fill="#c6cace"/><ellipse cx="26.92" cy="50.8" rx="10.2" ry="9" fill="#8c9096" opacity="0.55"/><ellipse cx="69.08" cy="50.8" rx="10.2" ry="9" fill="#8c9096" opacity="0.55"/><ellipse cx="48" cy="30" rx="17.0" ry="3" fill="#e2e5e7" opacity="0.7"/><path d="M33.72 54.8L37.8 37Q48 30 58.2 37L62.28 54.8Z" fill="#1a1e24"/><ellipse cx="48" cy="13" rx="7.5" ry="10" fill="#a89a90"/><ellipse cx="48" cy="8.5" rx="7.125" ry="5.5" fill="#b4aeaa" opacity="0.8"/><ellipse cx="48" cy="12.5" rx="5.625" ry="1.4000000000000001" fill="#4a4038" opacity="0.45"/><ellipse cx="48" cy="20.2" rx="6.0" ry="5.5" fill="#a8a09a"/><path d="M73 24L62 54" stroke="#a08a62" stroke-width="2.2" stroke-linecap="round"/><path d="M73 24L76.8 13.7" stroke="#22282e" stroke-width="3.74" stroke-linecap="round"/></g><g id="t10"><rect x="0" y="0" width="96.4" height="52.8" fill="#5c666b"/><ellipse cx="43.6" cy="23.6" rx="11.5" ry="6.8" fill="#8a969c" opacity="0.28"/><ellipse cx="49.0" cy="24.8" rx="6.3" ry="7.1" fill="#8a969c" opacity="0.28"/><ellipse cx="60.7" cy="33.5" rx="5.7" ry="5.8" fill="#8a969c" opacity="0.28"/><ellipse cx="8.7" cy="34.2" rx="9.9" ry="4.3" fill="#8a969c" opacity="0.28"/><ellipse cx="94.7" cy="40.8" rx="9.6" ry="7.7" fill="#8a969c" opacity="0.28"/><rect x="62" y="0" width="10" height="12" fill="#c2cacf" opacity="0.8"/><rect x="80" y="0" width="10" height="10" fill="#c2cacf" opacity="0.8"/><rect x="2.6" y="0" width="0.8" height="51.5" fill="#1e262a" opacity="0.48"/><rect x="7.9" y="0" width="1.2" height="49.6" fill="#1e262a" opacity="0.8"/><rect x="15.2" y="0" width="3" height="51.6" fill="#1e262a" opacity="0.68"/><rect x="24.6" y="0" width="2.4" height="44.9" fill="#1e262a" opacity="0.49"/><rect x="34.2" y="0" width="2.4" height="52.8" fill="#1e262a" opacity="0.9"/><rect x="45.1" y="0" width="1.6" height="47.4" fill="#1e262a" opacity="0.55"/><rect x="52.1" y="0" width="0.8" height="49.3" fill="#1e262a" opacity="0.5"/><rect x="57.9" y="0" width="1.6" height="47.9" fill="#1e262a" opacity="0.88"/><rect x="68.8" y="0" width="0.8" height="46.6" fill="#1e262a" opacity="0.87"/><rect x="74.2" y="0" width="2.4" height="52.6" fill="#1e262a" opacity="0.63"/><rect x="79.7" y="0" width="1.2" height="51.0" fill="#1e262a" opacity="0.57"/><rect x="85.3" y="0" width="1.6" height="45.0" fill="#1e262a" opacity="0.63"/><path d="M10.4 26.7L22.6 25.2" stroke="#d4dade" stroke-width="0.9" stroke-linecap="round" opacity="0.55"/><path d="M52.6 8.6L76.3 14.4" stroke="#d4dade" stroke-width="1.1" stroke-linecap="round" opacity="0.55"/><path d="M32.3 15.4L53.4 21.3" stroke="#d4dade" stroke-width="0.6" stroke-linecap="round" opacity="0.55"/><path d="M66.7 36.1L92.3 42.1" stroke="#d4dade" stroke-width="0.6" stroke-linecap="round" opacity="0.55"/><path d="M14.4 36.8L40.3 36.9" stroke="#d4dade" stroke-width="0.6" stroke-linecap="round" opacity="0.55"/><path d="M0 16L44 7" stroke="#d6dce0" stroke-width="1.6" stroke-linecap="round" opacity="0.7"/><path d="M50 54.8L54 36Q66 32 78 40L82 54.8Z" fill="#c4c4c8"/><path d="M30 54.8L36 38Q44 34 52 37L54 54.8Z" fill="#1a1e24"/><ellipse cx="50" cy="18" rx="8" ry="11" fill="#ae9e94"/><ellipse cx="50" cy="13.05" rx="7.6" ry="6.050000000000001" fill="#b4aca6" opacity="0.8"/><ellipse cx="50" cy="17.45" rx="6.0" ry="1.54" fill="#4a4038" opacity="0.45"/><ellipse cx="50" cy="25.92" rx="6.4" ry="6.050000000000001" fill="#74645a"/><path d="M76 54.8L84 30L98.4 8L98.4 54.8Z" fill="#262c34"/><ellipse cx="86" cy="24" rx="5" ry="9" fill="#1e242a"/></g><g id="t11"><rect x="0" y="0" width="96.4" height="52.8" fill="#a6aeb2"/><ellipse cx="10" cy="8" rx="22" ry="18" fill="#57616a"/><ellipse cx="85" cy="10" rx="16" ry="14" fill="#c0c6ca" opacity="0.8"/><ellipse cx="52" cy="25.75" rx="14.725" ry="18.75" fill="#b4ac9e"/><ellipse cx="52" cy="22" rx="9.5" ry="12.5" fill="#a69286"/><ellipse cx="52" cy="21.375" rx="7.125" ry="1.7500000000000002" fill="#4a4038" opacity="0.45"/><ellipse cx="51" cy="33" rx="7" ry="3.2" fill="#dcdcdc"/><ellipse cx="51" cy="38" rx="8" ry="5" fill="#bab6b0"/><path d="M0 54.8L0 42Q20 34 40 40Q60 46 98.4 30L98.4 54.8Z" fill="#9a9ca1"/><ellipse cx="8" cy="44" rx="10" ry="6" fill="#8a7a6e"/></g><g id="t12"><defs><linearGradient id="g13" x1="0" y1="0" x2="0" y2="1"><stop offset="0" stop-color="#d2d6d9"/><stop offset="1" stop-color="#8a9094"/></linearGradient></defs><rect x="0" y="0" width="96.4" height="52.8" fill="url(#g13)"/><rect x="0" y="40" width="14" height="14" fill="#dde0e2"/><ellipse cx="38" cy="14" rx="8.5" ry="6" fill="#5a5048"/><ellipse cx="38" cy="38" rx="26" ry="19" fill="#45403a"/><ellipse cx="42" cy="30" rx="16" ry="10" fill="#554c44" opacity="0.8"/><path d="M56 54.8Q70 40 98.4 36L98.4 54.8Z" fill="#544a40"/></g><g id="t13"><rect x="0" y="0" width="96.4" height="36" fill="#4a5458"/><ellipse cx="10.3" cy="20.2" rx="9.6" ry="9.6" fill="#8a969c" opacity="0.28"/><ellipse cx="26.1" cy="7.4" rx="10.1" ry="8.0" fill="#8a969c" opacity="0.28"/><ellipse cx="29.2" cy="19.7" rx="7.8" ry="8.7" fill="#8a969c" opacity="0.28"/><ellipse cx="11.4" cy="6.4" rx="11.3" ry="6.1" fill="#8a969c" opacity="0.28"/><ellipse cx="25.1" cy="23.2" rx="9.4" ry="4.9" fill="#8a969c" opacity="0.28"/><rect x="10" y="0" width="5" height="20" fill="#c2cacf" opacity="0.8"/><rect x="30" y="0" width="4" height="16" fill="#c2cacf" opacity="0.8"/><rect x="76" y="0" width="6" height="22" fill="#c2cacf" opacity="0.8"/><rect x="4.2" y="0" width="1.6" height="31.5" fill="#1e262a" opacity="0.74"/><rect x="10.1" y="0" width="1.6" height="30.8" fill="#1e262a" opacity="0.57"/><rect x="21.0" y="0" width="2.4" height="32.8" fill="#1e262a" opacity="0.9"/><rect x="29.1" y="0" width="3" height="31.1" fill="#1e262a" opacity="0.74"/><rect x="40.3" y="0" width="3" height="33.8" fill="#1e262a" opacity="0.74"/><rect x="46.6" y="0" width="0.8" height="34.6" fill="#1e262a" opacity="0.67"/><rect x="56.3" y="0" width="1.6" height="33.0" fill="#1e262a" opacity="0.55"/><rect x="66.9" y="0" width="3" height="32.0" fill="#1e262a" opacity="0.5"/><rect x="78.9" y="0" width="1.6" height="32.1" fill="#1e262a" opacity="0.46"/><rect x="89.1" y="0" width="0.8" height="34.3" fill="#1e262a" opacity="0.71"/><path d="M75.1 5.9L96.0 2.2" stroke="#d4dade" stroke-width="0.9" stroke-linecap="round" opacity="0.55"/><path d="M32.2 21.2L50.1 18.7" stroke="#d4dade" stroke-width="0.9" stroke-linecap="round" opacity="0.55"/><path d="M47.5 13.3L72.5 12.2" stroke="#d4dade" stroke-width="0.8" stroke-linecap="round" opacity="0.55"/><path d="M34.0 21.1L55.4 27.0" stroke="#d4dade" stroke-width="0.6" stroke-linecap="round" opacity="0.55"/><path d="M54.7 10.5L77.6 7.5" stroke="#d4dade" stroke-width="0.9" stroke-linecap="round" opacity="0.55"/><path d="M0 33L8.9 33.7L22.1 34.6L32.2 32.1L46.1 33.6L56.5 33.7L67.7 34.0L76.7 32.0L91.9 32.5L96.4 34.1L96.4 52.8L0 52.8Z" fill="#d2d6d9"/><ellipse cx="60.9" cy="39.4" rx="6.3" ry="2.0" fill="#5a5650" opacity="0.6"/><ellipse cx="15.9" cy="47.3" rx="3.7" ry="1.5" fill="#5a5650" opacity="0.6"/><ellipse cx="60" cy="24" rx="8.5" ry="17" fill="#a08c7a"/><ellipse cx="57" cy="14" rx="6" ry="7" fill="#94806e"/><path d="M18 54.8Q26 40 44 34Q58 30 64 40L66 54.8Z" fill="#8c8682"/><ellipse cx="50" cy="30" rx="4" ry="5" fill="#a89488"/></g><g id="t14"><rect x="0" y="0" width="96.4" height="52.8" fill="#d4d8db"/><ellipse cx="60" cy="10" rx="30" ry="12" fill="#c2c8cc" opacity="0.7"/><path d="M5 -2L3 54.8" stroke="#a08a62" stroke-width="1.6" stroke-linecap="round"/><ellipse cx="19" cy="31" rx="8" ry="9" fill="#2a2e34"/><ellipse cx="17" cy="22" rx="6" ry="5" fill="#7c7e82"/><ellipse cx="37" cy="16" rx="7" ry="9.5" fill="#a8988e"/><ellipse cx="37" cy="11.725" rx="6.6499999999999995" ry="5.2250000000000005" fill="#b0a8a4" opacity="0.8"/><ellipse cx="37" cy="15.525" rx="5.25" ry="1.33" fill="#4a4038" opacity="0.45"/><ellipse cx="37" cy="22.84" rx="5.6000000000000005" ry="5.2250000000000005" fill="#8a7a70"/><ellipse cx="76" cy="20" rx="15" ry="21" fill="#50463f"/><ellipse cx="72" cy="18" rx="8" ry="14" fill="#62564c" opacity="0.7"/><path d="M14 54.8Q30 40 48 36Q70 30 98.4 22L98.4 54.8Z" fill="#a4a4a8"/><ellipse cx="24" cy="44" rx="8" ry="6" fill="#2e3238"/></g><g id="t15"><rect x="0" y="0" width="96.4" height="52.8" fill="#687276"/><ellipse cx="34.9" cy="20.3" rx="7.9" ry="6.7" fill="#8a969c" opacity="0.28"/><ellipse cx="39.5" cy="27.8" rx="6.8" ry="7.8" fill="#8a969c" opacity="0.28"/><ellipse cx="1.0" cy="12.8" rx="7.3" ry="4.9" fill="#8a969c" opacity="0.28"/><ellipse cx="71.7" cy="13.1" rx="10.5" ry="9.7" fill="#8a969c" opacity="0.28"/><ellipse cx="24.4" cy="37.7" rx="10.7" ry="8.0" fill="#8a969c" opacity="0.28"/><rect x="30" y="0" width="5" height="20" fill="#c2cacf" opacity="0.8"/><rect x="80" y="0" width="6" height="16" fill="#c2cacf" opacity="0.8"/><rect x="2.1" y="0" width="2.4" height="49.6" fill="#1e262a" opacity="0.77"/><rect x="14.0" y="0" width="1.6" height="47.7" fill="#1e262a" opacity="0.64"/><rect x="19.6" y="0" width="2.4" height="48.2" fill="#1e262a" opacity="0.74"/><rect x="31.2" y="0" width="1.6" height="49.5" fill="#1e262a" opacity="0.58"/><rect x="36.8" y="0" width="0.8" height="49.0" fill="#1e262a" opacity="0.56"/><rect x="42.9" y="0" width="1.6" height="47.4" fill="#1e262a" opacity="0.65"/><rect x="49.1" y="0" width="2.4" height="50.6" fill="#1e262a" opacity="0.46"/><rect x="60.0" y="0" width="2.4" height="45.0" fill="#1e262a" opacity="0.83"/><rect x="69.9" y="0" width="0.8" height="48.5" fill="#1e262a" opacity="0.73"/><rect x="78.3" y="0" width="0.8" height="52.5" fill="#1e262a" opacity="0.77"/><rect x="89.8" y="0" width="1.6" height="45.1" fill="#1e262a" opacity="0.47"/><path d="M46.6 18.7L73.9 22.1" stroke="#d4dade" stroke-width="1.0" stroke-linecap="round" opacity="0.55"/><path d="M64.0 4.5L83.4 6.4" stroke="#d4dade" stroke-width="0.9" stroke-linecap="round" opacity="0.55"/><path d="M18.8 15.8L31.8 19.6" stroke="#d4dade" stroke-width="1.0" stroke-linecap="round" opacity="0.55"/><path d="M3.7 31.6L24.8 36.2" stroke="#d4dade" stroke-width="1.0" stroke-linecap="round" opacity="0.55"/><path d="M18.5 22.4L36.0 17.8" stroke="#d4dade" stroke-width="0.7" stroke-linecap="round" opacity="0.55"/><rect x="78" y="38" width="20" height="16" fill="#caced2"/><ellipse cx="58" cy="24" rx="10.5" ry="19" fill="#8c7c6c"/><ellipse cx="58" cy="19" rx="6" ry="8" fill="#a89488"/><ellipse cx="58" cy="27" rx="4.5" ry="4" fill="#b8b4ae"/><path d="M30 54.8Q40 36 56 36Q72 36 80 54.8Z" fill="#8e8a88"/><path d="M0 54.8L0 12Q10 8 18 16L24 54.8Z" fill="#262c34"/><ellipse cx="11" cy="9" rx="8" ry="9" fill="#a08e82"/><ellipse cx="16" cy="16" rx="6" ry="7" fill="#5a4c44"/></g><g id="t16"><rect x="0" y="0" width="96.4" height="24" fill="#687276"/><ellipse cx="50.3" cy="15.5" rx="11.7" ry="5.7" fill="#8a969c" opacity="0.28"/><ellipse cx="73.9" cy="13.5" rx="9.6" ry="4.7" fill="#8a969c" opacity="0.28"/><ellipse cx="2.6" cy="7.4" rx="10.2" ry="5.5" fill="#8a969c" opacity="0.28"/><ellipse cx="48.4" cy="6.1" rx="10.9" ry="9.7" fill="#8a969c" opacity="0.28"/><ellipse cx="38.7" cy="19.2" rx="5.4" ry="8.9" fill="#8a969c" opacity="0.28"/><rect x="20" y="0" width="8" height="12" fill="#c2cacf" opacity="0.8"/><rect x="5.5" y="0" width="1.2" height="23.6" fill="#1e262a" opacity="0.69"/><rect x="16.1" y="0" width="1.2" height="21.6" fill="#1e262a" opacity="0.51"/><rect x="26.1" y="0" width="0.8" height="21.5" fill="#1e262a" opacity="0.49"/><rect x="37.7" y="0" width="2.4" height="22.7" fill="#1e262a" opacity="0.72"/><rect x="47.5" y="0" width="2.4" height="23.3" fill="#1e262a" opacity="0.86"/><rect x="52.6" y="0" width="1.6" height="22.5" fill="#1e262a" opacity="0.85"/><rect x="62.8" y="0" width="0.8" height="23.9" fill="#1e262a" opacity="0.62"/><rect x="73.2" y="0" width="2.4" height="21.3" fill="#1e262a" opacity="0.7"/><rect x="84.9" y="0" width="3" height="23.8" fill="#1e262a" opacity="0.48"/><rect x="90.3" y="0" width="1.6" height="21.1" fill="#1e262a" opacity="0.72"/><path d="M42.7 3.9L69.8 8.7" stroke="#d4dade" stroke-width="0.8" stroke-linecap="round" opacity="0.55"/><path d="M25.6 15.5L50.9 11.3" stroke="#d4dade" stroke-width="0.6" stroke-linecap="round" opacity="0.55"/><path d="M58.1 7.2L80.8 3.0" stroke="#d4dade" stroke-width="1.0" stroke-linecap="round" opacity="0.55"/><path d="M56.2 6.6L69.9 12.4" stroke="#d4dade" stroke-width="1.1" stroke-linecap="round" opacity="0.55"/><path d="M1.6 10.3L29.4 8.0" stroke="#d4dade" stroke-width="1.0" stroke-linecap="round" opacity="0.55"/><rect x="0" y="20" width="96.4" height="34" fill="#c4c9cd"/><rect x="0" y="36" width="96.4" height="18" fill="#8a9094" opacity="0.7"/><path d="M12 -2L40 36" stroke="#a08a62" stroke-width="1.8" stroke-linecap="round"/><ellipse cx="33" cy="32" rx="12" ry="12" fill="#2a2e30"/><ellipse cx="24" cy="22" rx="5" ry="8" fill="#2e3234"/><ellipse cx="45" cy="13" rx="6" ry="7.5" fill="#a8988e"/><ellipse cx="45" cy="12.625" rx="4.5" ry="1.05" fill="#4a4038" opacity="0.45"/><ellipse cx="45" cy="18.4" rx="4.800000000000001" ry="4.125" fill="#7a6a60"/><ellipse cx="50" cy="34" rx="9" ry="10" fill="#b4b4b8"/><ellipse cx="76" cy="26" rx="14.5" ry="21" fill="#443a33"/><ellipse cx="72" cy="22" rx="7" ry="14" fill="#564a40" opacity="0.7"/><path d="M44 54.8Q60 40 98.4 40L98.4 54.8Z" fill="#9c9ca0"/></g><g id="t17"><rect x="0" y="0" width="96.4" height="52.8" fill="#3a4448"/><ellipse cx="17.5" cy="27.9" rx="7.3" ry="5.2" fill="#8a969c" opacity="0.28"/><ellipse cx="47.2" cy="20.9" rx="8.4" ry="6.7" fill="#8a969c" opacity="0.28"/><ellipse cx="25.5" cy="10.7" rx="9.8" ry="5.9" fill="#8a969c" opacity="0.28"/><ellipse cx="65.1" cy="33.3" rx="11.1" ry="9.7" fill="#8a969c" opacity="0.28"/><ellipse cx="22.6" cy="10.0" rx="10.1" ry="7.5" fill="#8a969c" opacity="0.28"/><rect x="86" y="0" width="8" height="26" fill="#c2cacf" opacity="0.8"/><rect x="2.8" y="0" width="2.4" height="46.6" fill="#1e262a" opacity="0.58"/><rect x="7.9" y="0" width="2.4" height="46.6" fill="#1e262a" opacity="0.78"/><rect x="16.6" y="0" width="3" height="49.4" fill="#1e262a" opacity="0.57"/><rect x="23.5" y="0" width="1.6" height="49.3" fill="#1e262a" opacity="0.58"/><rect x="32.5" y="0" width="3" height="46.0" fill="#1e262a" opacity="0.76"/><rect x="41.9" y="0" width="1.2" height="46.4" fill="#1e262a" opacity="0.74"/><rect x="52.5" y="0" width="1.2" height="48.1" fill="#1e262a" opacity="0.67"/><rect x="58.3" y="0" width="1.2" height="49.5" fill="#1e262a" opacity="0.69"/><rect x="65.6" y="0" width="3" height="48.6" fill="#1e262a" opacity="0.67"/><rect x="74.0" y="0" width="2.4" height="45.5" fill="#1e262a" opacity="0.74"/><rect x="82.8" y="0" width="1.2" height="52.3" fill="#1e262a" opacity="0.8"/><rect x="90.5" y="0" width="3" height="51.4" fill="#1e262a" opacity="0.76"/><path d="M75.9 6.6L103.8 11.0" stroke="#d4dade" stroke-width="0.9" stroke-linecap="round" opacity="0.55"/><path d="M63.0 8.3L84.6 4.1" stroke="#d4dade" stroke-width="0.8" stroke-linecap="round" opacity="0.55"/><path d="M54.1 7.0L73.9 10.9" stroke="#d4dade" stroke-width="0.8" stroke-linecap="round" opacity="0.55"/><path d="M9.7 36.8L34.2 29.0" stroke="#d4dade" stroke-width="0.9" stroke-linecap="round" opacity="0.55"/><path d="M11.3 7.7L40.3 8.8" stroke="#d4dade" stroke-width="0.9" stroke-linecap="round" opacity="0.55"/><path d="M12 54.8Q19.599999999999998 30 36.7 26Q50 23 63.3 26Q80.4 30 88 54.8Z" fill="#c6cace"/><ellipse cx="26.44" cy="50.8" rx="11.4" ry="9" fill="#8c9096" opacity="0.55"/><ellipse cx="73.56" cy="50.8" rx="11.4" ry="9" fill="#8c9096" opacity="0.55"/><ellipse cx="50" cy="31" rx="19.0" ry="3" fill="#e2e5e7" opacity="0.7"/><path d="M34.04 54.8L38.6 38Q50 31 61.4 38L65.96 54.8Z" fill="#1a1e24"/><ellipse cx="50" cy="14" rx="7.5" ry="10" fill="#a89a90"/><ellipse cx="50" cy="9.5" rx="7.125" ry="5.5" fill="#b6b0ac" opacity="0.8"/><ellipse cx="50" cy="13.5" rx="5.625" ry="1.4000000000000001" fill="#4a4038" opacity="0.45"/><ellipse cx="50" cy="21.2" rx="6.0" ry="5.5" fill="#aaa29c"/><path d="M2 10L4 54" stroke="#a08a62" stroke-width="1.8" stroke-linecap="round"/><path d="M2 10L1.5 -1.0" stroke="#22282e" stroke-width="3.06" stroke-linecap="round"/></g><g id="t18"><rect x="0" y="0" width="96.4" height="30" fill="#343e42"/><ellipse cx="65.3" cy="18.8" rx="8.6" ry="7.1" fill="#8a969c" opacity="0.28"/><ellipse cx="37.9" cy="23.9" rx="7.0" ry="4.9" fill="#8a969c" opacity="0.28"/><ellipse cx="25.2" cy="6.3" rx="7.3" ry="5.6" fill="#8a969c" opacity="0.28"/><ellipse cx="10.4" cy="7.8" rx="7.2" ry="7.4" fill="#8a969c" opacity="0.28"/><ellipse cx="19.4" cy="1.7" rx="6.4" ry="7.3" fill="#8a969c" opacity="0.28"/><rect x="40" y="0" width="6" height="20" fill="#c2cacf" opacity="0.8"/><rect x="62" y="0" width="4" height="18" fill="#c2cacf" opacity="0.8"/><rect x="76" y="0" width="8" height="22" fill="#c2cacf" opacity="0.8"/><rect x="3.6" y="0" width="0.8" height="29.1" fill="#1e262a" opacity="0.64"/><rect x="9.2" y="0" width="2.4" height="28.9" fill="#1e262a" opacity="0.63"/><rect x="18.9" y="0" width="1.6" height="28.1" fill="#1e262a" opacity="0.68"/><rect x="25.0" y="0" width="2.4" height="26.5" fill="#1e262a" opacity="0.7"/><rect x="35.1" y="0" width="1.2" height="27.3" fill="#1e262a" opacity="0.51"/><rect x="44.5" y="0" width="0.8" height="28.0" fill="#1e262a" opacity="0.66"/><rect x="56.2" y="0" width="2.4" height="28.2" fill="#1e262a" opacity="0.68"/><rect x="66.9" y="0" width="2.4" height="27.2" fill="#1e262a" opacity="0.85"/><rect x="78.0" y="0" width="0.8" height="26.6" fill="#1e262a" opacity="0.46"/><rect x="85.6" y="0" width="0.8" height="28.5" fill="#1e262a" opacity="0.74"/><path d="M36.7 10.5L55.4 4.9" stroke="#d4dade" stroke-width="0.9" stroke-linecap="round" opacity="0.55"/><path d="M23.8 16.5L37.6 12.9" stroke="#d4dade" stroke-width="1.2" stroke-linecap="round" opacity="0.55"/><path d="M32.4 10.8L55.2 9.1" stroke="#d4dade" stroke-width="1.2" stroke-linecap="round" opacity="0.55"/><path d="M13.5 14.3L27.2 8.1" stroke="#d4dade" stroke-width="0.9" stroke-linecap="round" opacity="0.55"/><path d="M68.1 17.8L84.8 16.4" stroke="#d4dade" stroke-width="1.2" stroke-linecap="round" opacity="0.55"/><path d="M0 27L13.4 28.0L25.6 27.0L36.7 28.8L47.0 25.7L57.1 26.1L67.8 26.2L76.6 26.4L87.1 27.2L96.4 25.5L96.4 52.8L0 52.8Z" fill="#d2d6d8"/><ellipse cx="19.5" cy="42.8" rx="5.3" ry="2.1" fill="#5a5650" opacity="0.6"/><ellipse cx="77.4" cy="40.0" rx="3.6" ry="2.1" fill="#5a5650" opacity="0.6"/><ellipse cx="52" cy="41" rx="9" ry="9" fill="#2c2826"/><ellipse cx="61" cy="33" rx="8" ry="9.5" fill="#bcbcbc"/><ellipse cx="55" cy="26" rx="4" ry="4.5" fill="#a8988e"/><path d="M44 48L84 38" stroke="#a08a62" stroke-width="1.4" stroke-linecap="round"/><ellipse cx="48" cy="44" rx="5" ry="6" fill="#8a6a4a" opacity="0.8"/></g><g id="t19"><rect x="0" y="0" width="96.4" height="14" fill="#46505a"/><rect x="0" y="0" width="96.4" height="6" fill="#384248"/><rect x="0" y="13" width="96.4" height="40" fill="#d4d8da"/><ellipse cx="55" cy="24" rx="14" ry="3" fill="#8e8a84" opacity="0.7"/><rect x="40" y="19" width="1.2" height="5" fill="#5a3a30"/><ellipse cx="15" cy="11" rx="7" ry="8" fill="#5c5c60"/><path d="M6 54.8L8 26Q18 18 30 28L32 54.8Z" fill="#2a2e34"/><ellipse cx="4" cy="36" rx="5" ry="12" fill="#c0c0c2"/><ellipse cx="70" cy="30" rx="24" ry="24" fill="#c2c4c6"/><ellipse cx="66" cy="34" rx="12" ry="14" fill="#adb0b3" opacity="0.7"/><ellipse cx="65" cy="5" rx="6" ry="6" fill="#8a7e78"/><rect x="60" y="48" width="26" height="6" fill="#2a2c30" opacity="0.8"/></g><g id="t20"><rect x="0" y="0" width="96.4" height="52.8" fill="#323c44"/><ellipse cx="15.9" cy="29.1" rx="9.4" ry="6.9" fill="#8a969c" opacity="0.28"/><ellipse cx="20.8" cy="33.5" rx="10.7" ry="7.1" fill="#8a969c" opacity="0.28"/><ellipse cx="48.7" cy="10.0" rx="5.0" ry="6.2" fill="#8a969c" opacity="0.28"/><ellipse cx="56.4" cy="2.9" rx="10.6" ry="5.4" fill="#8a969c" opacity="0.28"/><ellipse cx="22.4" cy="1.8" rx="12.0" ry="8.4" fill="#8a969c" opacity="0.28"/><rect x="86" y="0" width="8" height="30" fill="#c2cacf" opacity="0.8"/><rect x="5.5" y="0" width="3" height="48.4" fill="#1e262a" opacity="0.88"/><rect x="14.3" y="0" width="0.8" height="50.0" fill="#1e262a" opacity="0.87"/><rect x="19.4" y="0" width="0.8" height="45.9" fill="#1e262a" opacity="0.87"/><rect x="27.6" y="0" width="3" height="50.6" fill="#1e262a" opacity="0.63"/><rect x="33.7" y="0" width="0.8" height="48.6" fill="#1e262a" opacity="0.82"/><rect x="39.2" y="0" width="1.2" height="46.5" fill="#1e262a" opacity="0.89"/><rect x="50.5" y="0" width="3" height="52.7" fill="#1e262a" opacity="0.48"/><rect x="59.4" y="0" width="3" height="51.4" fill="#1e262a" opacity="0.54"/><rect x="70.8" y="0" width="3" height="48.1" fill="#1e262a" opacity="0.61"/><rect x="79.0" y="0" width="2.4" height="47.4" fill="#1e262a" opacity="0.67"/><rect x="85.9" y="0" width="0.8" height="46.1" fill="#1e262a" opacity="0.77"/><path d="M0.2 4.5L26.0 3.8" stroke="#d4dade" stroke-width="0.9" stroke-linecap="round" opacity="0.55"/><path d="M24.6 36.3L39.2 37.6" stroke="#d4dade" stroke-width="1.0" stroke-linecap="round" opacity="0.55"/><path d="M64.3 13.6L93.8 18.6" stroke="#d4dade" stroke-width="0.7" stroke-linecap="round" opacity="0.55"/><path d="M13.0 34.3L29.0 32.3" stroke="#d4dade" stroke-width="0.7" stroke-linecap="round" opacity="0.55"/><path d="M2.8 20.2L30.0 15.5" stroke="#d4dade" stroke-width="1.2" stroke-linecap="round" opacity="0.55"/><path d="M10 54.8Q20 42 32 38Q48 32 66 36Q86 38 98.4 48L98.4 54.8Z" fill="#d6d9db"/><ellipse cx="48" cy="14" rx="11" ry="14" fill="#a49488"/><ellipse cx="48" cy="7.7" rx="10.45" ry="7.700000000000001" fill="#aaa09a" opacity="0.8"/><ellipse cx="48" cy="13.3" rx="8.25" ry="1.9600000000000002" fill="#4a4038" opacity="0.45"/><ellipse cx="48" cy="31" rx="9" ry="9" fill="#cbc9c5"/><ellipse cx="48" cy="25" rx="6" ry="2" fill="#b8b4ae"/><path d="M40 48L56 48L52 54L44 54Z" fill="#1c1e20"/><path d="M9 22L10 54" stroke="#a08a62" stroke-width="3" stroke-linecap="round"/><path d="M8 -2L9 22" stroke="#20262c" stroke-width="4.5" stroke-linecap="round"/></g><g id="t21"><rect x="0" y="0" width="96.4" height="52.8" fill="#4a545a"/><ellipse cx="92.4" cy="5.9" rx="5.2" ry="10.0" fill="#8a969c" opacity="0.28"/><ellipse cx="17.8" cy="5.1" rx="9.6" ry="6.1" fill="#8a969c" opacity="0.28"/><ellipse cx="85.8" cy="9.8" rx="11.7" ry="5.9" fill="#8a969c" opacity="0.28"/><ellipse cx="58.0" cy="39.4" rx="9.8" ry="9.5" fill="#8a969c" opacity="0.28"/><ellipse cx="68.3" cy="2.0" rx="11.2" ry="7.5" fill="#8a969c" opacity="0.28"/><rect x="74" y="0" width="10" height="34" fill="#c2cacf" opacity="0.8"/><rect x="88" y="0" width="8" height="40" fill="#c2cacf" opacity="0.8"/><rect x="3.2" y="0" width="1.2" height="46.3" fill="#1e262a" opacity="0.5"/><rect x="12.0" y="0" width="3" height="45.4" fill="#1e262a" opacity="0.6"/><rect x="19.3" y="0" width="1.2" height="52.5" fill="#1e262a" opacity="0.59"/><rect x="29.8" y="0" width="3" height="46.0" fill="#1e262a" opacity="0.82"/><rect x="39.4" y="0" width="1.2" height="48.3" fill="#1e262a" opacity="0.6"/><rect x="50.8" y="0" width="2.4" height="52.2" fill="#1e262a" opacity="0.68"/><rect x="59.4" y="0" width="2.4" height="48.0" fill="#1e262a" opacity="0.87"/><rect x="65.7" y="0" width="3" height="47.8" fill="#1e262a" opacity="0.71"/><rect x="72.7" y="0" width="3" height="49.3" fill="#1e262a" opacity="0.69"/><rect x="83.1" y="0" width="3" height="48.3" fill="#1e262a" opacity="0.49"/><rect x="91.2" y="0" width="0.8" height="48.3" fill="#1e262a" opacity="0.63"/><path d="M73.4 19.9L94.6 13.3" stroke="#d4dade" stroke-width="1.1" stroke-linecap="round" opacity="0.55"/><path d="M13.2 21.1L33.2 17.7" stroke="#d4dade" stroke-width="0.8" stroke-linecap="round" opacity="0.55"/><path d="M14.7 3.3L39.1 6.4" stroke="#d4dade" stroke-width="1.0" stroke-linecap="round" opacity="0.55"/><path d="M15.5 26.3L28.7 24.0" stroke="#d4dade" stroke-width="1.1" stroke-linecap="round" opacity="0.55"/><path d="M71.0 18.1L102.5 17.1" stroke="#d4dade" stroke-width="0.9" stroke-linecap="round" opacity="0.55"/><path d="M0 16L36 10" stroke="#d0d6da" stroke-width="1.4" stroke-linecap="round" opacity="0.6"/><path d="M30 54.8Q40 40 56 38Q80 36 98.4 46L98.4 54.8Z" fill="#d2d2d4"/><path d="M22 54.8Q30 42 40 42L44 54.8Z" fill="#2a2e32"/><ellipse cx="46" cy="20" rx="12.5" ry="16.5" fill="#a89a90"/><ellipse cx="46" cy="12.575" rx="11.875" ry="9.075000000000001" fill="#b0a8a2" opacity="0.8"/><ellipse cx="46" cy="19.175" rx="9.375" ry="2.31" fill="#4a4038" opacity="0.45"/><ellipse cx="46" cy="31.88" rx="10.0" ry="9.075000000000001" fill="#7a6a5e"/></g><g id="t22"><rect x="0" y="0" width="96.4" height="34" fill="#363f46"/><ellipse cx="89.2" cy="25.8" rx="11.2" ry="4.5" fill="#8a969c" opacity="0.28"/><ellipse cx="57.1" cy="11.5" rx="8.7" ry="4.8" fill="#8a969c" opacity="0.28"/><ellipse cx="18.5" cy="12.1" rx="6.5" ry="6.7" fill="#8a969c" opacity="0.28"/><ellipse cx="2.4" cy="2.3" rx="10.0" ry="6.5" fill="#8a969c" opacity="0.28"/><ellipse cx="49.4" cy="20.0" rx="7.5" ry="4.3" fill="#8a969c" opacity="0.28"/><rect x="20" y="0" width="5" height="20" fill="#c2cacf" opacity="0.8"/><rect x="48" y="0" width="5" height="18" fill="#c2cacf" opacity="0.8"/><rect x="80" y="0" width="6" height="22" fill="#c2cacf" opacity="0.8"/><rect x="5.1" y="0" width="3" height="30.8" fill="#1e262a" opacity="0.53"/><rect x="11.6" y="0" width="1.6" height="31.8" fill="#1e262a" opacity="0.84"/><rect x="23.4" y="0" width="1.6" height="32.3" fill="#1e262a" opacity="0.59"/><rect x="29.0" y="0" width="2.4" height="29.8" fill="#1e262a" opacity="0.67"/><rect x="39.6" y="0" width="1.2" height="29.8" fill="#1e262a" opacity="0.53"/><rect x="46.8" y="0" width="3" height="29.9" fill="#1e262a" opacity="0.5"/><rect x="52.5" y="0" width="0.8" height="31.8" fill="#1e262a" opacity="0.87"/><rect x="59.5" y="0" width="3" height="30.6" fill="#1e262a" opacity="0.62"/><rect x="66.5" y="0" width="1.6" height="33.5" fill="#1e262a" opacity="0.65"/><rect x="73.0" y="0" width="1.2" height="29.4" fill="#1e262a" opacity="0.8"/><rect x="83.0" y="0" width="2.4" height="30.1" fill="#1e262a" opacity="0.7"/><rect x="94.4" y="0" width="3" height="29.4" fill="#1e262a" opacity="0.62"/><path d="M2.6 15.8L23.7 10.0" stroke="#d4dade" stroke-width="0.7" stroke-linecap="round" opacity="0.55"/><path d="M1.0 6.8L30.0 -0.4" stroke="#d4dade" stroke-width="1.2" stroke-linecap="round" opacity="0.55"/><path d="M34.3 4.0L46.7 7.1" stroke="#d4dade" stroke-width="0.9" stroke-linecap="round" opacity="0.55"/><path d="M2.9 7.8L27.5 10.3" stroke="#d4dade" stroke-width="0.9" stroke-linecap="round" opacity="0.55"/><path d="M22.8 4.0L47.6 5.1" stroke="#d4dade" stroke-width="1.0" stroke-linecap="round" opacity="0.55"/><path d="M0 31L15.4 32.6L30.5 29.5L43.3 30.7L55.5 29.7L65.1 30.8L74.8 30.8L83.0 29.5L96.4 30.7L96.4 52.8L0 52.8Z" fill="#d0d4d7"/><ellipse cx="49.4" cy="48.1" rx="5.2" ry="1.1" fill="#5a5650" opacity="0.6"/><ellipse cx="75.5" cy="45.5" rx="6.9" ry="1.9" fill="#5a5650" opacity="0.6"/><ellipse cx="66" cy="38" rx="9" ry="13" fill="#8a8078"/><ellipse cx="63" cy="21" rx="4.5" ry="6" fill="#b0a898"/><ellipse cx="60" cy="25" rx="3" ry="3" fill="#a08a7c"/><path d="M55 24L60 30" stroke="#3a342e" stroke-width="1.2" stroke-linecap="round"/><path d="M44 36Q50 46 62 50" fill="#2e2a26" opacity="0"/><path d="M44 36L54 48" stroke="#3a3632" stroke-width="0.8" stroke-linecap="round"/></g><g id="t23"><rect x="0" y="0" width="96.4" height="52.8" fill="#303a42"/><ellipse cx="68.7" cy="35.5" rx="6.3" ry="10.0" fill="#8a969c" opacity="0.28"/><ellipse cx="18.7" cy="28.3" rx="5.6" ry="8.5" fill="#8a969c" opacity="0.28"/><ellipse cx="14.6" cy="29.8" rx="10.1" ry="8.6" fill="#8a969c" opacity="0.28"/><ellipse cx="42.5" cy="36.6" rx="11.9" ry="4.7" fill="#8a969c" opacity="0.28"/><ellipse cx="49.8" cy="40.5" rx="10.2" ry="6.7" fill="#8a969c" opacity="0.28"/><rect x="86" y="0" width="8" height="20" fill="#c2cacf" opacity="0.8"/><rect x="3.2" y="0" width="0.8" height="50.3" fill="#1e262a" opacity="0.56"/><rect x="12.5" y="0" width="1.6" height="52.5" fill="#1e262a" opacity="0.48"/><rect x="22.0" y="0" width="0.8" height="52.2" fill="#1e262a" opacity="0.59"/><rect x="33.3" y="0" width="0.8" height="47.3" fill="#1e262a" opacity="0.56"/><rect x="42.5" y="0" width="1.2" height="51.4" fill="#1e262a" opacity="0.9"/><rect x="53.5" y="0" width="1.6" height="49.3" fill="#1e262a" opacity="0.57"/><rect x="59.9" y="0" width="3" height="48.8" fill="#1e262a" opacity="0.52"/><rect x="65.9" y="0" width="2.4" height="46.4" fill="#1e262a" opacity="0.72"/><rect x="76.4" y="0" width="2.4" height="48.9" fill="#1e262a" opacity="0.9"/><rect x="86.7" y="0" width="3" height="51.2" fill="#1e262a" opacity="0.49"/><rect x="92.7" y="0" width="1.6" height="50.0" fill="#1e262a" opacity="0.74"/><path d="M61.3 16.1L84.1 19.8" stroke="#d4dade" stroke-width="0.8" stroke-linecap="round" opacity="0.55"/><path d="M14.3 22.1L36.3 26.3" stroke="#d4dade" stroke-width="0.7" stroke-linecap="round" opacity="0.55"/><path d="M28.6 4.0L51.0 0.4" stroke="#d4dade" stroke-width="0.9" stroke-linecap="round" opacity="0.55"/><path d="M58.9 3.3L93.7 5.3" stroke="#d4dade" stroke-width="1.1" stroke-linecap="round" opacity="0.55"/><path d="M41.6 22.1L63.0 19.7" stroke="#d4dade" stroke-width="0.7" stroke-linecap="round" opacity="0.55"/><path d="M22 54.8Q30 44 42 40Q60 34 80 36L98.4 40L98.4 54.8Z" fill="#d2d6d8"/><ellipse cx="63" cy="19" rx="11" ry="15" fill="#9e8c80"/><ellipse cx="63" cy="12.25" rx="10.45" ry="8.25" fill="#a69c96" opacity="0.8"/><ellipse cx="63" cy="18.25" rx="8.25" ry="2.1" fill="#4a4038" opacity="0.45"/><ellipse cx="62" cy="36" rx="9" ry="8" fill="#c6c2bc"/><ellipse cx="62" cy="29" rx="6" ry="2" fill="#b4aea8"/><path d="M54 48L70 48L66 54L58 54Z" fill="#1c1e20"/><path d="M22 26L22 54" stroke="#a08a62" stroke-width="3" stroke-linecap="round"/><path d="M21 -2L22 26" stroke="#20262c" stroke-width="4.5" stroke-linecap="round"/></g><g id="t24"><rect x="0" y="0" width="96.4" height="28" fill="#2c363a"/><ellipse cx="36.3" cy="20.8" rx="10.9" ry="5.3" fill="#8a969c" opacity="0.28"/><ellipse cx="84.0" cy="14.3" rx="5.3" ry="9.7" fill="#8a969c" opacity="0.28"/><ellipse cx="24.6" cy="6.9" rx="8.0" ry="7.5" fill="#8a969c" opacity="0.28"/><ellipse cx="12.0" cy="15.4" rx="10.8" ry="7.1" fill="#8a969c" opacity="0.28"/><ellipse cx="76.6" cy="14.0" rx="10.8" ry="5.1" fill="#8a969c" opacity="0.28"/><rect x="30" y="0" width="4" height="14" fill="#c2cacf" opacity="0.8"/><rect x="70" y="0" width="4" height="12" fill="#c2cacf" opacity="0.8"/><rect x="3.4" y="0" width="2.4" height="26.0" fill="#1e262a" opacity="0.85"/><rect x="14.3" y="0" width="0.8" height="26.3" fill="#1e262a" opacity="0.61"/><rect x="21.7" y="0" width="1.2" height="26.4" fill="#1e262a" opacity="0.48"/><rect x="29.6" y="0" width="0.8" height="26.0" fill="#1e262a" opacity="0.51"/><rect x="40.7" y="0" width="0.8" height="26.1" fill="#1e262a" opacity="0.48"/><rect x="49.8" y="0" width="2.4" height="27.4" fill="#1e262a" opacity="0.65"/><rect x="60.4" y="0" width="3" height="25.9" fill="#1e262a" opacity="0.67"/><rect x="65.8" y="0" width="2.4" height="25.0" fill="#1e262a" opacity="0.47"/><rect x="73.7" y="0" width="2.4" height="26.4" fill="#1e262a" opacity="0.66"/><rect x="82.0" y="0" width="1.2" height="25.6" fill="#1e262a" opacity="0.71"/><rect x="93.6" y="0" width="1.2" height="24.3" fill="#1e262a" opacity="0.56"/><path d="M49.0 4.4L82.3 8.8" stroke="#d4dade" stroke-width="1.1" stroke-linecap="round" opacity="0.55"/><path d="M16.3 13.1L48.9 16.2" stroke="#d4dade" stroke-width="0.9" stroke-linecap="round" opacity="0.55"/><path d="M28.5 8.4L51.9 6.9" stroke="#d4dade" stroke-width="0.9" stroke-linecap="round" opacity="0.55"/><path d="M29.0 10.8L62.3 15.0" stroke="#d4dade" stroke-width="0.8" stroke-linecap="round" opacity="0.55"/><path d="M24.5 2.5L58.8 5.8" stroke="#d4dade" stroke-width="1.1" stroke-linecap="round" opacity="0.55"/><path d="M0 25L11.0 26.5L25.8 24.0L40.7 25.5L49.1 26.6L59.1 24.3L70.5 25.3L79.5 25.7L94.2 25.0L96.4 25.4L96.4 52.8L0 52.8Z" fill="#c8ccd0"/><ellipse cx="79.5" cy="33.3" rx="5.2" ry="1.7" fill="#5a5650" opacity="0.6"/><ellipse cx="10.0" cy="52.2" rx="6.8" ry="1.1" fill="#5a5650" opacity="0.6"/><ellipse cx="56.2" cy="38.9" rx="4.1" ry="1.2" fill="#5a5650" opacity="0.6"/><ellipse cx="56" cy="38" rx="8" ry="12" fill="#7c6c5c"/><ellipse cx="52" cy="30" rx="4" ry="6" fill="#9a7a60"/><ellipse cx="55" cy="25" rx="3" ry="3.5" fill="#a08a7a"/><path d="M30 36L52 46" stroke="#3a3632" stroke-width="0.9" stroke-linecap="round"/><path d="M50 14L54 44" stroke="#45403a" stroke-width="0.9" stroke-linecap="round"/></g><g id="t25"><rect x="0" y="0" width="96.4" height="52.8" fill="#566064"/><ellipse cx="72.0" cy="8.6" rx="6.4" ry="7.6" fill="#8a969c" opacity="0.28"/><ellipse cx="5.5" cy="32.8" rx="10.4" ry="4.3" fill="#8a969c" opacity="0.28"/><ellipse cx="65.9" cy="21.2" rx="9.4" ry="9.7" fill="#8a969c" opacity="0.28"/><ellipse cx="95.1" cy="17.3" rx="10.9" ry="8.7" fill="#8a969c" opacity="0.28"/><ellipse cx="93.7" cy="1.2" rx="11.6" ry="5.3" fill="#8a969c" opacity="0.28"/><rect x="70" y="0" width="8" height="24" fill="#c2cacf" opacity="0.8"/><rect x="84" y="0" width="8" height="30" fill="#c2cacf" opacity="0.8"/><rect x="2.5" y="0" width="3" height="48.7" fill="#1e262a" opacity="0.79"/><rect x="10.2" y="0" width="1.2" height="51.4" fill="#1e262a" opacity="0.46"/><rect x="22.0" y="0" width="1.6" height="51.6" fill="#1e262a" opacity="0.69"/><rect x="30.6" y="0" width="0.8" height="48.6" fill="#1e262a" opacity="0.75"/><rect x="37.8" y="0" width="1.6" height="51.6" fill="#1e262a" opacity="0.64"/><rect x="48.7" y="0" width="1.2" height="45.3" fill="#1e262a" opacity="0.88"/><rect x="55.1" y="0" width="3" height="47.9" fill="#1e262a" opacity="0.64"/><rect x="63.7" y="0" width="0.8" height="45.7" fill="#1e262a" opacity="0.51"/><rect x="72.6" y="0" width="0.8" height="45.3" fill="#1e262a" opacity="0.55"/><rect x="81.7" y="0" width="0.8" height="51.6" fill="#1e262a" opacity="0.6"/><rect x="89.6" y="0" width="0.8" height="52.3" fill="#1e262a" opacity="0.77"/><path d="M3.1 5.4L20.6 -1.5" stroke="#d4dade" stroke-width="0.7" stroke-linecap="round" opacity="0.55"/><path d="M74.0 14.2L106.8 16.8" stroke="#d4dade" stroke-width="1.1" stroke-linecap="round" opacity="0.55"/><path d="M70.4 26.4L90.4 25.0" stroke="#d4dade" stroke-width="0.8" stroke-linecap="round" opacity="0.55"/><path d="M2.5 3.5L27.5 2.9" stroke="#d4dade" stroke-width="1.2" stroke-linecap="round" opacity="0.55"/><path d="M47.9 30.6L70.8 30.8" stroke="#d4dade" stroke-width="1.1" stroke-linecap="round" opacity="0.55"/><path d="M0 18L40 10" stroke="#d4dade" stroke-width="1.6" stroke-linecap="round" opacity="0.7"/><path d="M46 54.8L50 36Q66 30 82 40L88 54.8Z" fill="#c0c2c6"/><path d="M30 54.8L36 38Q44 33 52 36L50 54.8Z" fill="#1a1e24"/><ellipse cx="70" cy="50" rx="14" ry="6" fill="#a8a8ac"/><ellipse cx="50" cy="15" rx="9" ry="12" fill="#a8968a"/><ellipse cx="50" cy="9.6" rx="8.549999999999999" ry="6.6000000000000005" fill="#b0a6a0" opacity="0.8"/><ellipse cx="50" cy="14.4" rx="6.75" ry="1.6800000000000002" fill="#4a4038" opacity="0.45"/><ellipse cx="50" cy="23.64" rx="7.2" ry="6.6000000000000005" fill="#6e6058"/></g><g id="t26"><rect x="0" y="0" width="96.4" height="52.8" fill="#2a343c"/><ellipse cx="62.5" cy="29.6" rx="11.7" ry="5.2" fill="#8a969c" opacity="0.28"/><ellipse cx="6.3" cy="34.8" rx="7.3" ry="6.2" fill="#8a969c" opacity="0.28"/><ellipse cx="78.6" cy="7.7" rx="11.4" ry="6.9" fill="#8a969c" opacity="0.28"/><ellipse cx="6.9" cy="38.8" rx="9.0" ry="4.5" fill="#8a969c" opacity="0.28"/><ellipse cx="80.8" cy="32.7" rx="10.2" ry="7.9" fill="#8a969c" opacity="0.28"/><rect x="6.0" y="0" width="0.8" height="51.6" fill="#1e262a" opacity="0.82"/><rect x="14.3" y="0" width="1.2" height="49.7" fill="#1e262a" opacity="0.6"/><rect x="23.9" y="0" width="3" height="46.0" fill="#1e262a" opacity="0.89"/><rect x="34.1" y="0" width="0.8" height="51.0" fill="#1e262a" opacity="0.69"/><rect x="40.3" y="0" width="1.2" height="47.0" fill="#1e262a" opacity="0.9"/><rect x="46.5" y="0" width="0.8" height="48.5" fill="#1e262a" opacity="0.52"/><rect x="57.8" y="0" width="3" height="48.2" fill="#1e262a" opacity="0.59"/><rect x="65.8" y="0" width="2.4" height="47.7" fill="#1e262a" opacity="0.61"/><rect x="76.3" y="0" width="1.2" height="48.7" fill="#1e262a" opacity="0.85"/><rect x="81.7" y="0" width="1.2" height="46.2" fill="#1e262a" opacity="0.79"/><rect x="90.2" y="0" width="0.8" height="47.5" fill="#1e262a" opacity="0.79"/><path d="M49.0 12.6L79.4 14.3" stroke="#d4dade" stroke-width="0.6" stroke-linecap="round" opacity="0.55"/><path d="M35.2 12.0L49.9 4.3" stroke="#d4dade" stroke-width="0.8" stroke-linecap="round" opacity="0.55"/><path d="M68.2 18.7L92.7 24.3" stroke="#d4dade" stroke-width="0.7" stroke-linecap="round" opacity="0.55"/><ellipse cx="43" cy="36" rx="12" ry="17" fill="#c4c6c8"/><ellipse cx="48" cy="11" rx="7" ry="8.5" fill="#a89488"/><ellipse cx="48" cy="7.175" rx="6.6499999999999995" ry="4.675000000000001" fill="#c0bcb8" opacity="0.8"/><ellipse cx="48" cy="10.575" rx="5.25" ry="1.1900000000000002" fill="#4a4038" opacity="0.45"/><ellipse cx="48" cy="17.12" rx="5.6000000000000005" ry="4.675000000000001" fill="#c8c6c2"/><path d="M56 54.8Q60 36 76 30Q90 28 98.4 34L98.4 54.8Z" fill="#b8bcc0"/><ellipse cx="76" cy="15" rx="11.5" ry="12.5" fill="#a6a29e"/><ellipse cx="74" cy="22" rx="9" ry="6" fill="#8a8682" opacity="0.8"/><ellipse cx="60" cy="36" rx="4" ry="8" fill="#26282c"/><path d="M23 14L24 54" stroke="#a08a62" stroke-width="1.8" stroke-linecap="round"/><path d="M22 -2L23 14" stroke="#20262c" stroke-width="3" stroke-linecap="round"/></g><g id="t27"><defs><linearGradient id="g28" x1="0" y1="0" x2="0" y2="1"><stop offset="0" stop-color="#aab4ba"/><stop offset="1" stop-color="#909aa2"/></linearGradient></defs><rect x="0" y="0" width="96.4" height="22" fill="url(#g28)"/><rect x="0" y="8" width="96.4" height="13" fill="#848e96" opacity="0.6"/><rect x="0" y="21" width="96.4" height="32" fill="#dce0e2"/><ellipse cx="10" cy="30" rx="10" ry="3" fill="#c4c8cc" opacity="0.8"/><ellipse cx="28" cy="42" rx="12.5" ry="12" fill="#6a6a6e"/><ellipse cx="20" cy="44" rx="6" ry="10" fill="#c0c0c4"/><ellipse cx="30" cy="23" rx="5" ry="6" fill="#8e8c8c"/><ellipse cx="30" cy="22.7" rx="3.75" ry="0.8400000000000001" fill="#4a4038" opacity="0.45"/><ellipse cx="30" cy="27.32" rx="4.0" ry="3.3000000000000003" fill="#4a4440"/><ellipse cx="45" cy="46" rx="9" ry="7" fill="#2e3236"/><ellipse cx="70" cy="36" rx="14" ry="18" fill="#a8a8ac"/><ellipse cx="62" cy="30" rx="5" ry="8" fill="#c4c4c8"/><ellipse cx="58" cy="17" rx="5.5" ry="6.5" fill="#a08c7c"/><ellipse cx="58" cy="14.075" rx="5.225" ry="3.575" fill="#a8866a" opacity="0.8"/><ellipse cx="58" cy="16.675" rx="4.125" ry="0.9100000000000001" fill="#4a4038" opacity="0.45"/><ellipse cx="58" cy="21.68" rx="4.4" ry="3.575" fill="#8a6a54"/><rect x="46" y="32" width="1.2" height="10" fill="#3a3a3c"/><rect x="42" y="40" width="10" height="1.2" fill="#3a3a3c"/></g><g id="t28"><rect x="0" y="0" width="96.4" height="52.8" fill="#5a6468"/><ellipse cx="52.8" cy="14.6" rx="10.9" ry="5.7" fill="#8a969c" opacity="0.28"/><ellipse cx="49.2" cy="14.5" rx="7.9" ry="9.8" fill="#8a969c" opacity="0.28"/><ellipse cx="10.0" cy="18.8" rx="6.6" ry="6.1" fill="#8a969c" opacity="0.28"/><ellipse cx="96.3" cy="13.9" rx="9.3" ry="6.5" fill="#8a969c" opacity="0.28"/><ellipse cx="70.4" cy="18.9" rx="6.2" ry="6.6" fill="#8a969c" opacity="0.28"/><rect x="22" y="0" width="8" height="32" fill="#c2cacf" opacity="0.8"/><rect x="32" y="0" width="5" height="26" fill="#c2cacf" opacity="0.8"/><rect x="60" y="0" width="6" height="16" fill="#c2cacf" opacity="0.8"/><rect x="3.6" y="0" width="3" height="49.0" fill="#1e262a" opacity="0.69"/><rect x="11.6" y="0" width="1.6" height="48.9" fill="#1e262a" opacity="0.55"/><rect x="19.5" y="0" width="2.4" height="49.0" fill="#1e262a" opacity="0.79"/><rect x="29.8" y="0" width="3" height="50.5" fill="#1e262a" opacity="0.66"/><rect x="40.5" y="0" width="0.8" height="50.7" fill="#1e262a" opacity="0.85"/><rect x="51.5" y="0" width="1.6" height="46.1" fill="#1e262a" opacity="0.6"/><rect x="57.0" y="0" width="2.4" height="46.2" fill="#1e262a" opacity="0.73"/><rect x="65.0" y="0" width="1.6" height="52.3" fill="#1e262a" opacity="0.75"/><rect x="72.2" y="0" width="1.2" height="50.2" fill="#1e262a" opacity="0.46"/><rect x="82.5" y="0" width="2.4" height="52.2" fill="#1e262a" opacity="0.86"/><rect x="88.5" y="0" width="1.2" height="47.2" fill="#1e262a" opacity="0.45"/><path d="M3.7 3.4L30.6 -2.9" stroke="#d4dade" stroke-width="1.2" stroke-linecap="round" opacity="0.55"/><path d="M40.0 4.0L52.9 6.8" stroke="#d4dade" stroke-width="0.7" stroke-linecap="round" opacity="0.55"/><path d="M55.2 14.9L68.7 17.2" stroke="#d4dade" stroke-width="0.8" stroke-linecap="round" opacity="0.55"/><path d="M1.7 8.8L30.8 12.6" stroke="#d4dade" stroke-width="1.0" stroke-linecap="round" opacity="0.55"/><path d="M29.2 9.8L45.9 14.0" stroke="#d4dade" stroke-width="0.9" stroke-linecap="round" opacity="0.55"/><rect x="70" y="0" width="28" height="52.8" fill="#3c4846" opacity="0.85"/><rect x="0" y="0" width="20" height="52.8" fill="#38302c"/><ellipse cx="9" cy="14" rx="9" ry="14" fill="#5c3a2c"/><ellipse cx="5" cy="36" rx="8" ry="18" fill="#2a2624"/><path d="M46 54.8L50 36Q64 30 78 40L84 54.8Z" fill="#c8c8cc"/><path d="M26 54.8L32 38Q42 32 52 36L50 54.8Z" fill="#1e2226"/><ellipse cx="52" cy="15" rx="8" ry="10.5" fill="#b0a094"/><ellipse cx="52" cy="10.274999999999999" rx="7.6" ry="5.775" fill="#b4aaa4" opacity="0.8"/><ellipse cx="52" cy="14.475" rx="6.0" ry="1.4700000000000002" fill="#4a4038" opacity="0.45"/><ellipse cx="52" cy="22.56" rx="6.4" ry="5.775" fill="#6a5c54"/><ellipse cx="24" cy="42" rx="4" ry="5" fill="#8a6a54"/><path d="M78 52L90 40" stroke="#a08a62" stroke-width="2.2" stroke-linecap="round"/><ellipse cx="92" cy="38" rx="4" ry="5" fill="#22262a"/></g><g id="t29"><rect x="0" y="0" width="96.4" height="52.8" fill="#5a6268"/><ellipse cx="15" cy="20" rx="20" ry="14" fill="#8a9298" opacity="0.6"/><rect x="78" y="0" width="20" height="52.8" fill="#ccd0d2"/><rect x="88" y="0" width="4" height="52.8" fill="#8a9490" opacity="0.6"/><path d="M0 54.8L0 40Q20 30 40 32Q60 30 74 44L80 54.8Z" fill="#3c4044"/><ellipse cx="14" cy="44" rx="12" ry="7" fill="#2c3034"/><ellipse cx="42" cy="21.15" rx="12.4" ry="15.75" fill="#8c8884"/><ellipse cx="42" cy="18" rx="8" ry="10.5" fill="#a09088"/><ellipse cx="42" cy="17.475" rx="6.0" ry="1.4700000000000002" fill="#4a4038" opacity="0.45"/><ellipse cx="42" cy="27" rx="5.5" ry="2.5" fill="#d4d4d4"/><ellipse cx="43" cy="31" rx="5" ry="3.5" fill="#8e8e90"/><path d="M66 -2Q76 26 86 54L82 54Q72 26 62 -2Z" fill="#b09a74"/><ellipse cx="56" cy="45" rx="5" ry="4" fill="#a08a7c"/><path d="M58 46L72 50" stroke="#2a2c30" stroke-width="1.4" stroke-linecap="round"/></g></defs></svg>
<div style="left:757.9px;top:99.9px;width:298.3px;height:557.6px;background:#e3e7e9;border-radius:1.5px;"></div>
<div style="left:760.1px;top:102.1px;width:96.2px;height:52.9px;background:#4a5458;overflow:hidden;"><svg style="left:0;top:0" width="96.2" height="52.9" viewBox="0 0 96.4 52.8" preserveAspectRatio="none"><use href="#t0" filter="url(#bl)" transform="translate(-1.6 -0.9) scale(1.034)"/></svg><div style="left:0px;top:0px;width:300px;height:170px;filter:url(#nz);opacity:0.04"></div><div style="left:0px;top:0px;width:300px;height:170px;filter:url(#nd);opacity:0.04"></div></div>
<div style="left:858.95px;top:102.1px;width:96.2px;height:52.9px;background:#4a5458;overflow:hidden;"><svg style="left:0;top:0" width="96.2" height="52.9" viewBox="0 0 96.4 52.8" preserveAspectRatio="none"><use href="#t1" filter="url(#bl)" transform="translate(-1.6 -0.9) scale(1.034)"/></svg><div style="left:-37px;top:-23px;width:300px;height:170px;filter:url(#nz);opacity:0.04"></div><div style="left:-37px;top:-23px;width:300px;height:170px;filter:url(#nd);opacity:0.03"></div></div>
<div style="left:957.8px;top:102.1px;width:96.2px;height:52.9px;background:#4a5458;overflow:hidden;"><svg style="left:0;top:0" width="96.2" height="52.9" viewBox="0 0 96.4 52.8" preserveAspectRatio="none"><use href="#t2" filter="url(#bl)" transform="translate(-1.6 -0.9) scale(1.034)"/></svg><div style="left:-74px;top:-46px;width:300px;height:170px;filter:url(#nz);opacity:0.25"></div><div style="left:-74px;top:-46px;width:300px;height:170px;filter:url(#nd);opacity:0.21"></div></div>
<div style="left:760.1px;top:157.64px;width:96.2px;height:52.9px;background:#4a5458;overflow:hidden;"><svg style="left:0;top:0" width="96.2" height="52.9" viewBox="0 0 96.4 52.8" preserveAspectRatio="none"><use href="#t3" filter="url(#bl)" transform="translate(-1.6 -0.9) scale(1.034)"/></svg><div style="left:-111px;top:-69px;width:300px;height:170px;filter:url(#nz);opacity:0.22"></div><div style="left:-111px;top:-69px;width:300px;height:170px;filter:url(#nd);opacity:0.18"></div></div>
<div style="left:858.95px;top:157.64px;width:96.2px;height:52.9px;background:#4a5458;overflow:hidden;"><svg style="left:0;top:0" width="96.2" height="52.9" viewBox="0 0 96.4 52.8" preserveAspectRatio="none"><use href="#t4" filter="url(#bl3)" transform="translate(-1.6 -0.9) scale(1.034)"/></svg><div style="left:-148px;top:-92px;width:300px;height:170px;filter:url(#nz);opacity:0.06"></div><div style="left:-148px;top:-92px;width:300px;height:170px;filter:url(#nd);opacity:0.05"></div></div>
<div style="left:957.8px;top:157.64px;width:96.2px;height:52.9px;background:#4a5458;overflow:hidden;"><svg style="left:0;top:0" width="96.2" height="52.9" viewBox="0 0 96.4 52.8" preserveAspectRatio="none"><use href="#t5" filter="url(#bl)" transform="translate(-1.6 -0.9) scale(1.034)"/></svg><div style="left:-185px;top:-5px;width:300px;height:170px;filter:url(#nz);opacity:0.25"></div><div style="left:-185px;top:-5px;width:300px;height:170px;filter:url(#nd);opacity:0.21"></div></div>
<div style="left:760.1px;top:213.18px;width:96.2px;height:52.9px;background:#4a5458;overflow:hidden;"><svg style="left:0;top:0" width="96.2" height="52.9" viewBox="0 0 96.4 52.8" preserveAspectRatio="none"><use href="#t6" filter="url(#bl)" transform="translate(-1.6 -0.9) scale(1.034)"/></svg><div style="left:-22px;top:-28px;width:300px;height:170px;filter:url(#nz);opacity:0.23"></div><div style="left:-22px;top:-28px;width:300px;height:170px;filter:url(#nd);opacity:0.20"></div></div>
<div style="left:858.95px;top:213.18px;width:96.2px;height:52.9px;background:#4a5458;overflow:hidden;"><svg style="left:0;top:0" width="96.2" height="52.9" viewBox="0 0 96.4 52.8" preserveAspectRatio="none"><use href="#t7" filter="url(#bl)" transform="translate(-1.6 -0.9) scale(1.034)"/></svg><div style="left:-59px;top:-51px;width:300px;height:170px;filter:url(#nz);opacity:0.04"></div><div style="left:-59px;top:-51px;width:300px;height:170px;filter:url(#nd);opacity:0.04"></div></div>
<div style="left:957.8px;top:213.18px;width:96.2px;height:52.9px;background:#4a5458;overflow:hidden;"><svg style="left:0;top:0" width="96.2" height="52.9" viewBox="0 0 96.4 52.8" preserveAspectRatio="none"><use href="#t8" filter="url(#bl)" transform="translate(-1.6 -0.9) scale(1.034)"/></svg><div style="left:-96px;top:-74px;width:300px;height:170px;filter:url(#nz);opacity:0.23"></div><div style="left:-96px;top:-74px;width:300px;height:170px;filter:url(#nd);opacity:0.20"></div></div>
<div style="left:760.1px;top:268.72px;width:96.2px;height:52.9px;background:#4a5458;overflow:hidden;"><svg style="left:0;top:0" width="96.2" height="52.9" viewBox="0 0 96.4 52.8" preserveAspectRatio="none"><use href="#t9" filter="url(#bl)" transform="translate(-1.6 -0.9) scale(1.034)"/></svg><div style="left:-133px;top:-97px;width:300px;height:170px;filter:url(#nz);opacity:0.23"></div><div style="left:-133px;top:-97px;width:300px;height:170px;filter:url(#nd);opacity:0.20"></div></div>
<div style="left:858.95px;top:268.72px;width:96.2px;height:52.9px;background:#4a5458;overflow:hidden;"><svg style="left:0;top:0" width="96.2" height="52.9" viewBox="0 0 96.4 52.8" preserveAspectRatio="none"><use href="#t10" filter="url(#bl)" transform="translate(-1.6 -0.9) scale(1.034)"/></svg><div style="left:-170px;top:-10px;width:300px;height:170px;filter:url(#nz);opacity:0.22"></div><div style="left:-170px;top:-10px;width:300px;height:170px;filter:url(#nd);opacity:0.18"></div></div>
<div style="left:957.8px;top:268.72px;width:96.2px;height:52.9px;background:#4a5458;overflow:hidden;"><svg style="left:0;top:0" width="96.2" height="52.9" viewBox="0 0 96.4 52.8" preserveAspectRatio="none"><use href="#t11" filter="url(#bl)" transform="translate(-1.6 -0.9) scale(1.034)"/></svg><div style="left:-7px;top:-33px;width:300px;height:170px;filter:url(#nz);opacity:0.11"></div><div style="left:-7px;top:-33px;width:300px;height:170px;filter:url(#nd);opacity:0.09"></div></div>
<div style="left:760.1px;top:324.26px;width:96.2px;height:52.9px;background:#4a5458;overflow:hidden;"><svg style="left:0;top:0" width="96.2" height="52.9" viewBox="0 0 96.4 52.8" preserveAspectRatio="none"><use href="#t12" filter="url(#bl)" transform="translate(-1.6 -0.9) scale(1.034)"/></svg><div style="left:-44px;top:-56px;width:300px;height:170px;filter:url(#nz);opacity:0.11"></div><div style="left:-44px;top:-56px;width:300px;height:170px;filter:url(#nd);opacity:0.09"></div></div>
<div style="left:858.95px;top:324.26px;width:96.2px;height:52.9px;background:#4a5458;overflow:hidden;"><svg style="left:0;top:0" width="96.2" height="52.9" viewBox="0 0 96.4 52.8" preserveAspectRatio="none"><use href="#t13" filter="url(#bl)" transform="translate(-1.6 -0.9) scale(1.034)"/></svg><div style="left:-81px;top:-79px;width:300px;height:170px;filter:url(#nz);opacity:0.22"></div><div style="left:-81px;top:-79px;width:300px;height:170px;filter:url(#nd);opacity:0.18"></div></div>
<div style="left:957.8px;top:324.26px;width:96.2px;height:52.9px;background:#4a5458;overflow:hidden;"><svg style="left:0;top:0" width="96.2" height="52.9" viewBox="0 0 96.4 52.8" preserveAspectRatio="none"><use href="#t14" filter="url(#bl)" transform="translate(-1.6 -0.9) scale(1.034)"/></svg><div style="left:-118px;top:-102px;width:300px;height:170px;filter:url(#nz);opacity:0.11"></div><div style="left:-118px;top:-102px;width:300px;height:170px;filter:url(#nd);opacity:0.09"></div></div>
<div style="left:760.1px;top:379.8px;width:96.2px;height:52.9px;background:#4a5458;overflow:hidden;"><svg style="left:0;top:0" width="96.2" height="52.9" viewBox="0 0 96.4 52.8" preserveAspectRatio="none"><use href="#t15" filter="url(#bl)" transform="translate(-1.6 -0.9) scale(1.034)"/></svg><div style="left:-155px;top:-15px;width:300px;height:170px;filter:url(#nz);opacity:0.20"></div><div style="left:-155px;top:-15px;width:300px;height:170px;filter:url(#nd);opacity:0.17"></div></div>
<div style="left:858.95px;top:379.8px;width:96.2px;height:52.9px;background:#4a5458;overflow:hidden;"><svg style="left:0;top:0" width="96.2" height="52.9" viewBox="0 0 96.4 52.8" preserveAspectRatio="none"><use href="#t16" filter="url(#bl)" transform="translate(-1.6 -0.9) scale(1.034)"/></svg><div style="left:-192px;top:-38px;width:300px;height:170px;filter:url(#nz);opacity:0.16"></div><div style="left:-192px;top:-38px;width:300px;height:170px;filter:url(#nd);opacity:0.14"></div></div>
<div style="left:957.8px;top:379.8px;width:96.2px;height:52.9px;background:#4a5458;overflow:hidden;"><svg style="left:0;top:0" width="96.2" height="52.9" viewBox="0 0 96.4 52.8" preserveAspectRatio="none"><use href="#t17" filter="url(#bl)" transform="translate(-1.6 -0.9) scale(1.034)"/></svg><div style="left:-29px;top:-61px;width:300px;height:170px;filter:url(#nz);opacity:0.23"></div><div style="left:-29px;top:-61px;width:300px;height:170px;filter:url(#nd);opacity:0.20"></div></div>
<div style="left:760.1px;top:435.34px;width:96.2px;height:52.9px;background:#4a5458;overflow:hidden;"><svg style="left:0;top:0" width="96.2" height="52.9" viewBox="0 0 96.4 52.8" preserveAspectRatio="none"><use href="#t18" filter="url(#bl)" transform="translate(-1.6 -0.9) scale(1.034)"/></svg><div style="left:-66px;top:-84px;width:300px;height:170px;filter:url(#nz);opacity:0.22"></div><div style="left:-66px;top:-84px;width:300px;height:170px;filter:url(#nd);opacity:0.18"></div></div>
<div style="left:858.95px;top:435.34px;width:96.2px;height:52.9px;background:#4a5458;overflow:hidden;"><svg style="left:0;top:0" width="96.2" height="52.9" viewBox="0 0 96.4 52.8" preserveAspectRatio="none"><use href="#t19" filter="url(#bl)" transform="translate(-1.6 -0.9) scale(1.034)"/></svg><div style="left:-103px;top:-107px;width:300px;height:170px;filter:url(#nz);opacity:0.13"></div><div style="left:-103px;top:-107px;width:300px;height:170px;filter:url(#nd);opacity:0.10"></div></div>
<div style="left:957.8px;top:435.34px;width:96.2px;height:52.9px;background:#4a5458;overflow:hidden;"><svg style="left:0;top:0" width="96.2" height="52.9" viewBox="0 0 96.4 52.8" preserveAspectRatio="none"><use href="#t20" filter="url(#bl)" transform="translate(-1.6 -0.9) scale(1.034)"/></svg><div style="left:-140px;top:-20px;width:300px;height:170px;filter:url(#nz);opacity:0.22"></div><div style="left:-140px;top:-20px;width:300px;height:170px;filter:url(#nd);opacity:0.18"></div></div>
<div style="left:760.1px;top:490.88px;width:96.2px;height:52.9px;background:#4a5458;overflow:hidden;"><svg style="left:0;top:0" width="96.2" height="52.9" viewBox="0 0 96.4 52.8" preserveAspectRatio="none"><use href="#t21" filter="url(#bl)" transform="translate(-1.6 -0.9) scale(1.034)"/></svg><div style="left:-177px;top:-43px;width:300px;height:170px;filter:url(#nz);opacity:0.20"></div><div style="left:-177px;top:-43px;width:300px;height:170px;filter:url(#nd);opacity:0.17"></div></div>
<div style="left:858.95px;top:490.88px;width:96.2px;height:52.9px;background:#4a5458;overflow:hidden;"><svg style="left:0;top:0" width="96.2" height="52.9" viewBox="0 0 96.4 52.8" preserveAspectRatio="none"><use href="#t22" filter="url(#bl)" transform="translate(-1.6 -0.9) scale(1.034)"/></svg><div style="left:-14px;top:-66px;width:300px;height:170px;filter:url(#nz);opacity:0.22"></div><div style="left:-14px;top:-66px;width:300px;height:170px;filter:url(#nd);opacity:0.18"></div></div>
<div style="left:957.8px;top:490.88px;width:96.2px;height:52.9px;background:#4a5458;overflow:hidden;"><svg style="left:0;top:0" width="96.2" height="52.9" viewBox="0 0 96.4 52.8" preserveAspectRatio="none"><use href="#t23" filter="url(#bl)" transform="translate(-1.6 -0.9) scale(1.034)"/></svg><div style="left:-51px;top:-89px;width:300px;height:170px;filter:url(#nz);opacity:0.22"></div><div style="left:-51px;top:-89px;width:300px;height:170px;filter:url(#nd);opacity:0.18"></div></div>
<div style="left:760.1px;top:546.42px;width:96.2px;height:52.9px;background:#4a5458;overflow:hidden;"><svg style="left:0;top:0" width="96.2" height="52.9" viewBox="0 0 96.4 52.8" preserveAspectRatio="none"><use href="#t24" filter="url(#bl)" transform="translate(-1.6 -0.9) scale(1.034)"/></svg><div style="left:-88px;top:-2px;width:300px;height:170px;filter:url(#nz);opacity:0.23"></div><div style="left:-88px;top:-2px;width:300px;height:170px;filter:url(#nd);opacity:0.20"></div></div>
<div style="left:858.95px;top:546.42px;width:96.2px;height:52.9px;background:#4a5458;overflow:hidden;"><svg style="left:0;top:0" width="96.2" height="52.9" viewBox="0 0 96.4 52.8" preserveAspectRatio="none"><use href="#t25" filter="url(#bl)" transform="translate(-1.6 -0.9) scale(1.034)"/></svg><div style="left:-125px;top:-25px;width:300px;height:170px;filter:url(#nz);opacity:0.22"></div><div style="left:-125px;top:-25px;width:300px;height:170px;filter:url(#nd);opacity:0.18"></div></div>
<div style="left:957.8px;top:546.42px;width:96.2px;height:52.9px;background:#4a5458;overflow:hidden;"><svg style="left:0;top:0" width="96.2" height="52.9" viewBox="0 0 96.4 52.8" preserveAspectRatio="none"><use href="#t26" filter="url(#bl)" transform="translate(-1.6 -0.9) scale(1.034)"/></svg><div style="left:-162px;top:-48px;width:300px;height:170px;filter:url(#nz);opacity:0.20"></div><div style="left:-162px;top:-48px;width:300px;height:170px;filter:url(#nd);opacity:0.17"></div></div>
<div style="left:760.1px;top:601.96px;width:96.2px;height:52.9px;background:#4a5458;overflow:hidden;"><svg style="left:0;top:0" width="96.2" height="52.9" viewBox="0 0 96.4 52.8" preserveAspectRatio="none"><use href="#t27" filter="url(#bl)" transform="translate(-1.6 -0.9) scale(1.034)"/></svg><div style="left:-199px;top:-71px;width:300px;height:170px;filter:url(#nz);opacity:0.09"></div><div style="left:-199px;top:-71px;width:300px;height:170px;filter:url(#nd);opacity:0.07"></div></div>
<div style="left:858.95px;top:601.96px;width:96.2px;height:52.9px;background:#4a5458;overflow:hidden;"><svg style="left:0;top:0" width="96.2" height="52.9" viewBox="0 0 96.4 52.8" preserveAspectRatio="none"><use href="#t28" filter="url(#bl)" transform="translate(-1.6 -0.9) scale(1.034)"/></svg><div style="left:-36px;top:-94px;width:300px;height:170px;filter:url(#nz);opacity:0.18"></div><div style="left:-36px;top:-94px;width:300px;height:170px;filter:url(#nd);opacity:0.15"></div></div>
<div style="left:957.8px;top:601.96px;width:96.2px;height:52.9px;background:#4a5458;overflow:hidden;"><svg style="left:0;top:0" width="96.2" height="52.9" viewBox="0 0 96.4 52.8" preserveAspectRatio="none"><use href="#t29" filter="url(#bl)" transform="translate(-1.6 -0.9) scale(1.034)"/></svg><div style="left:-73px;top:-7px;width:300px;height:170px;filter:url(#nz);opacity:0.13"></div><div style="left:-73px;top:-7px;width:300px;height:170px;filter:url(#nd);opacity:0.10"></div></div>
<div style="left:1001px;top:68px;width:382px;height:89px;background:#3a3a3a;box-shadow:0 0 0 1px #2a2a2a, 0 2px 4px rgba(0,0,0,.5);border-radius:0 0 2px 2px;"></div>
<div style="left:1013.70px;top:80.00px;font-size:12px;line-height:14px;color:#d4d4d4;white-space:pre;letter-spacing:0.759px;">Output Resolution:</div>
<div style="left:1133.5px;top:76.5px;width:243px;height:20.5px;background:linear-gradient(#5c5c5c,#4e4e4e);border-radius:3px;box-shadow:0 0 0 1px #2a2a2a;"></div>
<div style="left:1137.70px;top:80.00px;font-size:12px;line-height:14px;color:#dcdcdc;white-space:pre;letter-spacing:0.888px;">5760x10800 Custom Format</div>
<svg style="left:1362px;top:85px" width="8" height="4.5" viewBox="0 0 8 4.5"><path d="M0 0 H8 L4 4.5Z" fill="#b8b8b8"/></svg>
<div style="left:1033.00px;top:106.50px;font-size:12px;line-height:14px;color:#d4d4d4;white-space:pre;letter-spacing:0.636px;">Max Row Count</div>
<div style="left:1012.50px;top:132.50px;font-size:12px;line-height:14px;color:#d4d4d4;white-space:pre;letter-spacing:0.719px;">Max Column Count</div>
<div style="left:1134px;top:105.5px;width:33px;height:16px;background:#444;border-radius:2px;box-shadow:inset 0 0 0 1px #303030;"></div>
<div style="left:1138.00px;top:106.80px;font-size:12px;line-height:14px;color:#dcdcdc;white-space:pre;letter-spacing:0.652px;">10</div>
<div style="left:1156.5px;top:106.5px;width:10px;height:7px;background:#707070;border-radius:2px 2px 0 0;"></div>
<div style="left:1156.5px;top:113.5px;width:10px;height:7px;background:#5e5e5e;border-radius:0 0 2px 2px;"></div>
<svg style="left:1159px;top:108.5px" width="5" height="10" viewBox="0 0 5 10"><path d="M0 3 L2.5 0.3 L5 3Z M0 7 L2.5 9.7 L5 7Z" fill="#a8a8a8"/></svg>
<div style="left:1134px;top:131.5px;width:33px;height:16px;background:#444;border-radius:2px;box-shadow:inset 0 0 0 1px #303030;"></div>
<div style="left:1138.00px;top:132.80px;font-size:12px;line-height:14px;color:#dcdcdc;white-space:pre;">3</div>
<div style="left:1156.5px;top:132.5px;width:10px;height:7px;background:#707070;border-radius:2px 2px 0 0;"></div>
<div style="left:1156.5px;top:139.5px;width:10px;height:7px;background:#5e5e5e;border-radius:0 0 2px 2px;"></div>
<svg style="left:1159px;top:134.5px" width="5" height="10" viewBox="0 0 5 10"><path d="M0 3 L2.5 0.3 L5 3Z M0 7 L2.5 9.7 L5 7Z" fill="#a8a8a8"/></svg>
<div style="left:22px;top:660px;width:1769px;height:4px;background:#3a3a3a;"></div>
<div style="left:82px;top:661.2px;width:1635.4px;height:3.2px;background:#666;"></div>
<div style="left:22px;top:664.4px;width:1695px;height:31.6px;background:#323232;"></div>
<div style="left:1717px;top:660px;width:1.5px;height:36px;background:#262626;"></div>
<div style="left:1718.5px;top:660px;width:73px;height:36px;background:#3c3c3c;"></div>
<div style="left:22px;top:665.5px;width:56px;height:26px;background:#3a3a3a;border-radius:2px;"></div>
<div style="left:46.66px;top:674.00px;font-size:12px;line-height:14px;color:#8a8a8a;white-space:pre;">0</div>
<div style="left:1722px;top:667px;width:52px;height:28px;background:#3b3b3b;border-radius:2px;"></div>
<div style="left:1737.50px;top:674.00px;font-size:12px;line-height:14px;color:#8a8a8a;white-space:pre;letter-spacing:0.489px;">124</div>
<svg style="left:80px;top:664px" width="1640" height="30" viewBox="0 0 1640 30"><path d="M16.8 13v6M29.8 13v6M42.9 13v6M56.0 13v6M69.0 16v3M82.1 13v6M95.1 13v6M108.2 13v6M121.3 13v6M134.3 16v3M147.4 13v6M160.5 13v6M173.5 13v6M186.6 13v6M199.6 16v3M212.7 13v6M225.8 13v6M238.8 13v6M251.9 13v6M265.0 16v3M278.0 13v6M291.1 13v6M304.1 13v6M317.2 13v6M330.3 16v3M343.3 13v6M356.4 13v6M369.5 13v6M382.5 13v6M395.6 16v3M408.7 13v6M421.7 13v6M434.8 13v6M447.8 13v6M460.9 16v3M474.0 13v6M487.0 13v6M500.1 13v6M513.2 13v6M526.2 16v3M539.3 13v6M552.3 13v6M565.4 13v6M578.5 13v6M591.5 16v3M604.6 13v6M617.7 13v6M630.7 13v6M643.8 13v6M656.9 11v9M669.9 13v6M683.0 13v6M696.0 13v6M709.1 13v6M722.2 16v3M735.2 13v6M748.3 13v6M761.4 13v6M774.4 13v6M787.5 16v3M800.5 13v6M813.6 13v6M826.7 13v6M839.7 13v6M852.8 16v3M865.9 13v6M878.9 13v6M892.0 13v6M905.0 13v6M918.1 16v3M931.2 13v6M944.2 13v6M957.3 13v6M970.4 13v6M983.4 16v3M996.5 13v6M1009.6 13v6M1022.6 13v6M1035.7 13v6M1048.7 16v3M1061.8 13v6M1074.9 13v6M1087.9 13v6M1101.0 13v6M1114.1 16v3M1127.1 13v6M1140.2 13v6M1153.2 13v6M1166.3 13v6M1179.4 16v3M1192.4 13v6M1205.5 13v6M1218.6 13v6M1231.6 13v6M1244.7 16v3M1257.7 13v6M1270.8 13v6M1283.9 13v6M1296.9 13v6M1310.0 11v9M1323.1 13v6M1336.1 13v6M1349.2 13v6M1362.3 13v6M1375.3 16v3M1388.4 13v6M1401.4 13v6M1414.5 13v6M1427.6 13v6M1440.6 16v3M1453.7 13v6M1466.8 13v6M1479.8 13v6M1492.9 13v6M1505.9 16v3M1519.0 13v6M1532.1 13v6M1545.1 13v6M1558.2 13v6M1571.3 16v3M1584.3 13v6M1597.4 13v6M1610.4 13v6M1623.5 10v16" stroke="#c4c4c4" stroke-width="1" fill="none"/></svg>
<div style="left:81.48px;top:686.80px;font-size:8px;line-height:10px;color:#b4b4b4;white-space:pre;font-weight:700;">0</div>
<div style="left:732.40px;top:686.80px;font-size:8px;line-height:10px;color:#b4b4b4;white-space:pre;font-weight:700;">50</div>
<div style="left:1383.33px;top:686.80px;font-size:8px;line-height:10px;color:#b4b4b4;white-space:pre;font-weight:700;">100</div>
<div style="left:1696.84px;top:686.80px;font-size:8px;line-height:10px;color:#b4b4b4;white-space:pre;font-weight:700;">124</div>
<svg style="left:76.7px;top:673.2px" width="13" height="14" viewBox="0 0 13 14"><path d="M0.5 0.5 H12.5 L6.5 8Z" fill="#f0a020"/><path d="M6.5 8 V14" stroke="#c8c8c8" stroke-width="1"/></svg>
<div style="left:84.50px;top:665.50px;font-size:7.5px;line-height:9px;color:#f0a020;white-space:pre;font-weight:700;">-4</div>
<svg style="left:1780px;top:686px" width="8" height="10" viewBox="0 0 8 10"><path d="M0.5 0.5 L4 4 L7.5 0.5 M0.5 5 L4 8.5 L7.5 5" stroke="#a8a8a8" stroke-width="1.2" fill="none"/></svg>
<div style="left:22px;top:696px;width:1769px;height:28px;background:#3a3a3a;"></div>
<div style="left:22px;top:700px;width:12px;height:21px;background:#444;box-shadow:inset 0 0 0 1px #2c2c2c;"></div>
<div style="left:23.00px;top:703.00px;font-size:12px;line-height:14px;color:#999;white-space:pre;">2</div>
<div style="left:1722px;top:699.5px;width:52px;height:21px;background:#3f3f3f;border-radius:2px;"></div>
<div style="left:1737.50px;top:703.50px;font-size:12px;line-height:14px;color:#8a8a8a;white-space:pre;letter-spacing:0.489px;">125</div>
<svg style="left:1703px;top:703px" width="14" height="12" viewBox="0 0 14 12"><path d="M5.5 0.5 V5.5 L9 3Z" fill="#c8c8c8"/><path d="M0.5 8 V11 H13.5 V8 M4.8 9.5V11 M9.2 9.5V11" stroke="#c8c8c8" stroke-width="1" fill="none"/></svg>
<div style="left:822px;top:700px;width:28px;height:20.5px;background:linear-gradient(#505050,#464646);border-radius:2px;box-shadow:0 0 0 1px #2b2b2b;"></div>
<svg style="left:822px;top:700px" width="28" height="20.5" viewBox="0 0 28 20.5"><path d="M16 6 V15 L9 10.5Z" fill="#b4b4b4"/></svg>
<div style="left:870.70px;top:704.00px;font-size:10.5px;line-height:13px;color:#e8a020;white-space:pre;font-weight:700;">-4</div>
<div style="left:905px;top:700px;width:28px;height:20.5px;background:linear-gradient(#505050,#464646);border-radius:2px;box-shadow:0 0 0 1px #2b2b2b;"></div>
<svg style="left:905px;top:700px" width="28" height="20.5" viewBox="0 0 28 20.5"><path d="M10 6 V15 L17.5 10.5Z" fill="#b4b4b4"/></svg>
<div style="left:934.5px;top:700px;width:28px;height:20.5px;background:linear-gradient(#505050,#464646);border-radius:2px;box-shadow:0 0 0 1px #2b2b2b;"></div>
<svg style="left:934.5px;top:700px" width="28" height="20.5" viewBox="0 0 28 20.5"><path d="M10 6 V15" stroke="#b4b4b4" stroke-width="1.6"/><path d="M12 6 V15 L19 10.5Z" fill="#b4b4b4"/></svg>
<div style="left:964px;top:700px;width:28px;height:20.5px;background:linear-gradient(#505050,#464646);border-radius:2px;box-shadow:0 0 0 1px #2b2b2b;"></div>
<svg style="left:964px;top:700px" width="28" height="20.5" viewBox="0 0 28 20.5"><path d="M8.5 6 V15 L16 10.5Z" fill="#b4b4b4"/><path d="M18 6 V15" stroke="#b4b4b4" stroke-width="1.4"/></svg>
<div style="left:993.5px;top:700px;width:28px;height:20.5px;background:linear-gradient(#505050,#464646);border-radius:2px;box-shadow:0 0 0 1px #2b2b2b;"></div>
<svg style="left:993.5px;top:700px" width="28" height="20.5" viewBox="0 0 28 20.5"><path d="M8 6 V15 L14.5 10.5Z" fill="#b4b4b4"/><path d="M15.5 6 V15" stroke="#b4b4b4" stroke-width="2"/><path d="M18.5 6 V15" stroke="#b4b4b4" stroke-width="1.2"/></svg>
<div style="left:1023.5px;top:700px;width:15px;height:20.5px;background:linear-gradient(#505050,#464646);border-radius:2px;box-shadow:0 0 0 1px #2b2b2b;"></div>
<div style="left:1027.11px;top:704.50px;font-size:10px;line-height:12px;color:#b4b4b4;white-space:pre;">O</div>
<div style="left:1051px;top:700px;width:19px;height:20.5px;background:linear-gradient(#505050,#464646);border-radius:2px;box-shadow:0 0 0 1px #2b2b2b;"></div>
<svg style="left:1051px;top:700px" width="19" height="20.5" viewBox="0 0 19 20.5"><path d="M9 7.5 V13.5 L4.5 10.5Z M14.5 7.5 V13.5 L10 10.5Z" fill="#b4b4b4"/></svg>
<div style="left:1071px;top:699.5px;width:24px;height:21.5px;background:#3f3f3f;border-radius:2px;box-shadow:inset 0 0 0 1px #2e2e2e;"></div>
<div style="left:1076.00px;top:703.50px;font-size:12px;line-height:14px;color:#d0d0d0;white-space:pre;letter-spacing:0.652px;">12</div>
<div style="left:1097.5px;top:700px;width:19px;height:20.5px;background:linear-gradient(#505050,#464646);border-radius:2px;box-shadow:0 0 0 1px #2b2b2b;"></div>
<svg style="left:1097.5px;top:700px" width="19" height="20.5" viewBox="0 0 19 20.5"><path d="M4.5 7.5 V13.5 L9 10.5Z M10 7.5 V13.5 L14.5 10.5Z" fill="#b4b4b4"/></svg>
<div style="left:22px;top:724px;width:1769px;height:25px;background:#2b2b2b;"></div>
<div style="left:22px;top:723.5px;width:1769px;height:1.2px;background:#222;"></div>
<div style="left:22px;top:724.7px;width:1769px;height:1px;background:#3e3e3e;"></div>
<div style="left:24px;top:729px;width:8px;height:8px;background:#c4c4c4;"></div>
<div style="left:24px;top:737px;width:8px;height:7px;background:#8c8c8c;"></div>
<div style="left:32px;top:729px;width:6px;height:15px;background:#6e6e6e;"></div>
<div style="left:22px;top:749px;width:1769px;height:4px;background:#353535;"></div>
<div style="left:625px;top:750px;width:601px;height:2.5px;background:#6a6a6a;"></div>
<div style="left:22px;top:753px;width:410px;height:206px;background:#333333;"></div>
<div style="left:431px;top:753px;width:2px;height:206px;background:#2a2a2a;"></div>
<div style="left:27.50px;top:753.00px;font-size:12px;line-height:14px;color:#c8c8c8;white-space:pre;">S</div>
<div style="left:51.50px;top:835.00px;font-size:12px;line-height:14px;color:#c8c8c8;white-space:pre;letter-spacing:0.854px;">Start Timecode:</div>
<div style="left:153.5px;top:833.5px;width:53px;height:17.5px;background:#3c3c3c;border-radius:2px;"></div>
<div style="left:160.50px;top:835.00px;font-size:12px;line-height:14px;color:#c8c8c8;white-space:pre;letter-spacing:1.157px;">90000</div>
<div style="left:66.00px;top:859.00px;font-size:12px;line-height:14px;color:#c8c8c8;white-space:pre;letter-spacing:0.772px;">Time Display:</div>
<div style="left:153.5px;top:856px;width:63.5px;height:17px;background:linear-gradient(#5a5a5a,#4c4c4c);border-radius:3px;box-shadow:0 0 0 1px #2a2a2a;"></div>
<div style="left:157.00px;top:857.50px;font-size:12px;line-height:14px;color:#dcdcdc;white-space:pre;letter-spacing:0.566px;">Frames</div>
<svg style="left:206.5px;top:862.5px" width="6" height="3.5" viewBox="0 0 6 3.5"><path d="M0 0 H6 L3 3.5Z" fill="#aaa"/></svg>
<div style="left:222px;top:858px;width:12.5px;height:12.5px;background:#3c3c3c;border-radius:2px;box-shadow:inset 0 0 0 1px #484848;"></div>
<div style="left:239.00px;top:859.00px;font-size:12px;line-height:14px;color:#767676;white-space:pre;letter-spacing:0.720px;">Drop Frame</div>
<div style="left:29.00px;top:882.50px;font-size:12px;line-height:14px;color:#c8c8c8;white-space:pre;letter-spacing:0.654px;">Disk Caching Mode:</div>
<div style="left:153.5px;top:879.5px;width:86.5px;height:21px;background:linear-gradient(#5a5a5a,#4c4c4c);border-radius:3px;box-shadow:0 0 0 1px #2a2a2a;"></div>
<div style="left:158.00px;top:883.00px;font-size:12px;line-height:14px;color:#dcdcdc;white-space:pre;letter-spacing:0.728px;">Manual</div>
<svg style="left:227px;top:887.5px" width="7" height="4" viewBox="0 0 7 4"><path d="M0 0 H7 L3.5 4Z" fill="#aaa"/></svg>
<div style="left:433px;top:753px;width:36px;height:206px;background:#383838;"></div>
<div style="left:468px;top:753px;width:1.5px;height:206px;background:#2a2a2a;"></div>
<svg style="left:433px;top:833px" width="36" height="126" viewBox="433 833 36 126"><path d="M458.5 826 V839 M449 833 L454 836.5" stroke="#b6b6b6" stroke-width="2.2" fill="none"/><path d="M442.3 846 V866 M459.7 846 V866" stroke="#b6b6b6" stroke-width="2.6" fill="none"/><path d="M445 856 H457 M448.500 852 L444.500 856 L448.500 860 M453.500 852 L457.500 856 L453.500 860" stroke="#b6b6b6" stroke-width="2" fill="none"/><path d="M447 874 H456.500 M451.700 874 V880 M447 892 H456.500 M451.700 886 V892" stroke="#b6b6b6" stroke-width="2.2" fill="none"/><path d="M443 883 H460.500" stroke="#b6b6b6" stroke-width="2.2"/><path d="M440.500 883 L446.500 878.500 V887.500Z" fill="#b6b6b6"/><path d="M459 890 h3 l-1.500 2z" fill="#888"/><path d="M441 913.500 L455.500 900 L461.500 906.500 L447 920Z" fill="#b6b6b6"/><path d="M443 907 L453 917.500 M449 902 L459.500 912.500" stroke="#b6b6b6" stroke-width="2.4"/><circle cx="451" cy="910" r="1.800" fill="#555"/><path d="M459 918 h3 l-1.500 2z" fill="#888"/><path d="M437 923.800 H464" stroke="#2a2a2a" stroke-width="1.200"/><path d="M441 931 H451" stroke="#b6b6b6" stroke-width="1.800"/><path d="M460.500 930.500 Q452 929.500 452 937" stroke="#b6b6b6" stroke-width="1.800" fill="none"/><path d="M448.800 935 H455.200 L452 939.200Z" fill="#b6b6b6"/><rect x="441" y="940.300" width="19.500" height="3.300" fill="#b6b6b6"/><rect x="441" y="945.500" width="19.500" height="3.500" fill="#b6b6b6"/><path d="M444 960 Q451 950 458 960" stroke="#b6b6b6" stroke-width="2" fill="none"/></svg>
<div style="left:469.5px;top:753px;width:155px;height:125px;background:#3e3e3e;"></div>
<div style="left:624px;top:753px;width:1px;height:206px;background:#2c2c2c;"></div>
<div style="left:469.5px;top:877px;width:155px;height:1px;background:#2a2a2a;"></div>
<div style="left:469.5px;top:878px;width:155px;height:62px;background:linear-gradient(#585858,#474747 50%,#3c3c3c);"></div>
<div style="left:469.5px;top:940px;width:155px;height:1px;background:#2a2a2a;"></div>
<div style="left:469.5px;top:941px;width:155px;height:18px;background:#3a3a3a;"></div>
<div style="left:578.40px;top:903.00px;font-size:12px;line-height:14px;color:#d0d0d0;white-space:pre;letter-spacing:0.169px;">Video 1</div>
<svg style="left:473.5px;top:900.8px" width="68" height="15" viewBox="0 0 72 16"><path d="M2 7 V4.500 Q2 2 4.500 2 Q7 2 7 4.500" stroke="#b8b8b8" stroke-width="1.2" fill="none"/><rect x="6" y="7" width="8" height="6" fill="#b8b8b8"/><rect x="9" y="9" width="2" height="2" fill="#444"/><path d="M20 8 Q26 1 32 8 Q26 15 20 8Z" fill="none" stroke="#b8b8b8" stroke-width="1.3"/><circle cx="26" cy="8" r="2" fill="#b8b8b8"/><path d="M38 5 L44 2 L50 5 L44 8Z M38 8.500 L44 11.500 L50 8.500 M38 11.500 L44 14.500 L50 11.500" fill="#b8b8b8" stroke="#b8b8b8" stroke-width="1"/><rect x="56.500" y="1.500" width="12" height="12" rx="2.500" fill="#4c4c4c" stroke="#666" stroke-width="1"/><path d="M60 5 H65.500 M60 8 Q62.500 11 65.500 8" stroke="#666" stroke-width="1" fill="none"/></svg>
<div style="left:471px;top:949.5px;width:153px;height:5px;background:#1e1e1e;border-radius:2.500px;"></div>
<div style="left:474px;top:945.5px;width:12px;height:12px;background:radial-gradient(circle at 40% 35%,#8a8a8a,#5a5a5a);border-radius:6px;box-shadow:0 0 0 1px #2a2a2a;"></div>
<div style="left:625px;top:753px;width:1166px;height:33px;background:#363636;"></div>
<div style="left:625px;top:785.5px;width:1166px;height:1px;background:#2c2c2c;"></div>
<svg style="left:620px;top:753px" width="1172" height="20" viewBox="0 0 1172 20"><path d="M15.8 14v4M26.7 15.5v2.5M37.5 14v4M48.4 15.5v2.5M59.2 14v4M70.1 15.5v2.5M80.9 14v4M91.7 15.5v2.5M102.6 14v4M113.4 10.5v7.5M124.3 14v4M135.1 15.5v2.5M146.0 14v4M156.8 15.5v2.5M167.6 14v4M178.5 15.5v2.5M189.3 14v4M200.2 15.5v2.5M211.0 14v4M221.9 10.5v7.5M232.7 14v4M243.5 15.5v2.5M254.4 14v4M265.2 15.5v2.5M276.1 14v4M286.9 15.5v2.5M297.7 14v4M308.6 15.5v2.5M319.4 14v4M330.3 10.5v7.5M341.1 14v4M352.0 15.5v2.5M362.8 14v4M373.6 15.5v2.5M384.5 14v4M395.3 15.5v2.5M406.2 14v4M417.0 15.5v2.5M427.9 14v4M438.7 10.5v7.5M449.5 14v4M460.4 15.5v2.5M471.2 14v4M482.1 15.5v2.5M492.9 14v4M503.8 15.5v2.5M514.6 14v4M525.4 15.5v2.5M536.3 14v4M547.1 10.5v7.5M558.0 14v4M568.8 15.5v2.5M579.7 14v4M590.5 15.5v2.5M601.3 14v4M612.2 15.5v2.5M623.0 14v4M633.9 15.5v2.5M644.7 14v4M655.5 10.5v7.5M666.4 14v4M677.2 15.5v2.5M688.1 14v4M698.9 15.5v2.5M709.8 14v4M720.6 15.5v2.5M731.4 14v4M742.3 15.5v2.5M753.1 14v4M764.0 10.5v7.5M774.8 14v4M785.7 15.5v2.5M796.5 14v4M807.3 15.5v2.5M818.2 14v4M829.0 15.5v2.5M839.9 14v4M850.7 15.5v2.5M861.6 14v4M872.4 10.5v7.5M883.2 14v4M894.1 15.5v2.5M904.9 14v4M915.8 15.5v2.5M926.6 14v4M937.5 15.5v2.5M948.3 14v4M959.1 15.5v2.5M970.0 14v4M980.8 10.5v7.5M991.7 14v4M1002.5 15.5v2.5M1013.4 14v4M1024.2 15.5v2.5M1035.0 14v4M1045.9 15.5v2.5M1056.7 14v4M1067.6 15.5v2.5M1078.4 14v4M1089.2 10.5v7.5M1100.1 14v4M1110.9 15.5v2.5M1121.8 14v4M1132.6 15.5v2.5M1143.5 14v4M1154.3 15.5v2.5M1165.1 14v4M1176.0 15.5v2.5" stroke="#c8c8c8" stroke-width="1" fill="none"/></svg>
<div style="left:723.12px;top:776.50px;font-size:8.5px;line-height:10px;color:#b8b8b8;white-space:pre;letter-spacing:3.209px;font-weight:700;">500</div>
<div style="left:831.55px;top:776.50px;font-size:8.5px;line-height:10px;color:#b8b8b8;white-space:pre;letter-spacing:0.563px;font-weight:700;">1000</div>
<div style="left:939.98px;top:776.50px;font-size:8.5px;line-height:10px;color:#b8b8b8;white-space:pre;letter-spacing:0.563px;font-weight:700;">1500</div>
<div style="left:1048.40px;top:776.50px;font-size:8.5px;line-height:10px;color:#b8b8b8;white-space:pre;letter-spacing:0.563px;font-weight:700;">2000</div>
<div style="left:1156.83px;top:776.50px;font-size:8.5px;line-height:10px;color:#b8b8b8;white-space:pre;letter-spacing:0.563px;font-weight:700;">2500</div>
<div style="left:1265.25px;top:776.50px;font-size:8.5px;line-height:10px;color:#b8b8b8;white-space:pre;letter-spacing:0.563px;font-weight:700;">3000</div>
<div style="left:1373.67px;top:776.50px;font-size:8.5px;line-height:10px;color:#b8b8b8;white-space:pre;letter-spacing:0.563px;font-weight:700;">3500</div>
<div style="left:1482.10px;top:776.50px;font-size:8.5px;line-height:10px;color:#b8b8b8;white-space:pre;letter-spacing:0.563px;font-weight:700;">4000</div>
<div style="left:1590.52px;top:776.50px;font-size:8.5px;line-height:10px;color:#b8b8b8;white-space:pre;letter-spacing:0.563px;font-weight:700;">4500</div>
<div style="left:1698.95px;top:776.50px;font-size:8.5px;line-height:10px;color:#b8b8b8;white-space:pre;letter-spacing:0.563px;font-weight:700;">5000</div>
<div style="left:1770.90px;top:776.50px;font-size:8.5px;line-height:10px;color:#b8b8b8;white-space:pre;letter-spacing:0.563px;font-weight:700;">5401</div>
<div style="left:625px;top:786px;width:1166px;height:92px;background:#444444;"></div>
<div style="left:625px;top:877px;width:1166px;height:1px;background:#333;"></div>
<div style="left:1781.5px;top:788px;width:10.5px;height:10.5px;background:#5c5c5c;border-radius:1.500px;box-shadow:0 0 0 0.5px #2a2a2a;"></div>
<svg style="left:1783.5px;top:791px" width="7" height="4" viewBox="0 0 7 4"><path d="M0 4 H7 L3.5 0Z" fill="#ddd"/></svg>
<div style="left:1781.5px;top:800px;width:10.5px;height:3px;background:#5c5c5c;border-radius:1px;"></div>
<div style="left:625px;top:944px;width:1166px;height:15px;background:#3a3a3a;"></div>
<div style="left:626px;top:945px;width:11.5px;height:12px;background:#5a5a5a;border-radius:1.500px;"></div>
<svg style="left:628.5px;top:947.5px" width="5" height="7" viewBox="0 0 5 7"><path d="M5 0 V7 L0 3.5Z" fill="#ddd"/></svg>
<div style="left:638.5px;top:945px;width:279px;height:12px;background:linear-gradient(#555,#4a4a4a);border-radius:1.500px;box-shadow:0 0 0 0.5px #2c2c2c;"></div>
<svg style="left:770px;top:947px" width="15" height="9" viewBox="0 0 15 9"><rect x="0" y="0" width="1.5" height="1.5" fill="#333"/><rect x="0" y="3" width="1.5" height="1.5" fill="#333"/><rect x="0" y="6" width="1.5" height="1.5" fill="#333"/><rect x="3" y="0" width="1.5" height="1.5" fill="#333"/><rect x="3" y="3" width="1.5" height="1.5" fill="#333"/><rect x="3" y="6" width="1.5" height="1.5" fill="#333"/><rect x="6" y="0" width="1.5" height="1.5" fill="#333"/><rect x="6" y="3" width="1.5" height="1.5" fill="#333"/><rect x="6" y="6" width="1.5" height="1.5" fill="#333"/><rect x="9" y="0" width="1.5" height="1.5" fill="#333"/><rect x="9" y="3" width="1.5" height="1.5" fill="#333"/><rect x="9" y="6" width="1.5" height="1.5" fill="#333"/><rect x="12" y="0" width="1.5" height="1.5" fill="#333"/><rect x="12" y="3" width="1.5" height="1.5" fill="#333"/><rect x="12" y="6" width="1.5" height="1.5" fill="#333"/></svg>
<div style="left:1756px;top:945px;width:11px;height:12px;background:#5a5a5a;border-radius:1.500px;"></div>
<svg style="left:1759px;top:947.5px" width="5" height="7" viewBox="0 0 5 7"><path d="M5 0 V7 L0 3.5Z" fill="#ddd"/></svg>
<div style="left:1768px;top:945px;width:11px;height:12px;background:#5a5a5a;border-radius:1.500px;"></div>
<svg style="left:1771px;top:947.5px" width="5" height="7" viewBox="0 0 5 7"><path d="M0 0 V7 L5 3.5Z" fill="#ddd"/></svg>
<div style="left:18px;top:959px;width:1778px;height:16px;background:#393939;"></div>
<div style="left:22px;top:959px;width:1770px;height:1px;background:#2c2c2c;"></div>
<div style="left:1040px;top:960px;width:756px;height:14.5px;overflow:hidden;">
<div style="left:21.40px;top:1.50px;font-size:12px;line-height:14px;color:#b8b8b8;white-space:pre;letter-spacing:0.814px;">Channel Count: 22</div>
<div style="left:141.00px;top:1.50px;font-size:12px;line-height:14px;color:#b8b8b8;white-space:pre;letter-spacing:0.650px;">Localization Mode: On</div>
<div style="left:280.50px;top:1.50px;font-size:12px;line-height:14px;color:#b8b8b8;white-space:pre;letter-spacing:1.023px;">Memory: 16.4 GB (45.5%)</div>
<div style="left:447.00px;top:1.50px;font-size:12px;line-height:14px;color:#b8b8b8;white-space:pre;letter-spacing:0.856px;">CPU: 1.8%</div>
<div style="left:517.50px;top:1.50px;font-size:12px;line-height:14px;color:#b8b8b8;white-space:pre;letter-spacing:0.912px;">Disk: 0.0 MB/s</div>
<div style="left:611.30px;top:1.50px;font-size:12px;line-height:14px;color:#b8b8b8;white-space:pre;letter-spacing:0.998px;">Network: 0.0 MB/s</div>
</div>
<div style="left:1771.5px;top:962.5px;width:23.5px;height:9px;background:#3cc43c;border-radius:1px;"></div>
<div style="left:1777.75px;top:963.30px;font-size:7px;line-height:8px;color:#1e6a1e;white-space:pre;font-weight:700;">OK</div>
<div style="left:625px;top:878px;width:1166px;height:61.5px;background:#8fa5a9;"></div>
<div style="left:625px;top:939.5px;width:1166px;height:4.5px;background:#3c3c3c;"></div>
<div style="left:1742px;top:878px;width:4.6px;height:61.5px;background:#2c3236;"></div>
<div style="left:630.7px;top:878px;width:38.6px;height:60px;background:#70ab70;"></div>
<div style="left:631.7px;top:878px;width:36.6px;height:12.5px;overflow:hidden;"><div style="left:0.5px;top:-1px;font-size:10.5px;line-height:12px;color:#e8f6e8;font-weight:700;white-space:pre;">V1-0001</div></div>
<div style="left:631.9px;top:890.7px;width:35.8px;height:43px;background:#4a5458;overflow:hidden;"><svg style="left:0;top:0" width="35.8" height="43" viewBox="0 0 43.96 52.8" preserveAspectRatio="none"><use href="#t0" filter="url(#bl)" transform="translate(-1.6 -0.9) scale(1.034)"/></svg><div style="left:0px;top:0px;width:300px;height:170px;filter:url(#nz);opacity:0.06"></div><div style="left:0px;top:0px;width:300px;height:170px;filter:url(#nd);opacity:0.04"></div><div style="left:0;top:0;width:100%;height:100%;background:rgba(10,20,24,.09)"></div></div>
<div style="left:631.2px;top:933.7px;width:9.2px;height:3.8px;background:#e03010;"></div>
<div style="left:640.4px;top:933.7px;width:9.2px;height:3.8px;background:#30e010;"></div>
<div style="left:649.6px;top:933.7px;width:9.2px;height:3.8px;background:#3010d0;"></div>
<div style="left:668.2px;top:878px;width:1.1px;height:60px;background:repeating-linear-gradient(180deg,#143414 0,#143414 3px,#70ab70 3px,#70ab70 5.5px);"></div>
<div style="left:669.3px;top:878px;width:1.2px;height:60px;background:#d4f4d4;"></div>
<div style="left:674.7px;top:878px;width:39.3px;height:60px;background:#70ab70;"></div>
<div style="left:675.7px;top:878px;width:37.3px;height:12.5px;overflow:hidden;"><div style="left:0.5px;top:-1px;font-size:10.5px;line-height:12px;color:#e8f6e8;font-weight:700;white-space:pre;">V1-0002</div></div>
<div style="left:675.9px;top:890.7px;width:36.5px;height:43px;background:#4a5458;overflow:hidden;"><svg style="left:0;top:0" width="36.5" height="43" viewBox="0 0 44.82 52.8" preserveAspectRatio="none"><use href="#t1" filter="url(#bl)" transform="translate(-1.6 -0.9) scale(1.034)"/></svg><div style="left:-41px;top:-29px;width:300px;height:170px;filter:url(#nz);opacity:0.06"></div><div style="left:-41px;top:-29px;width:300px;height:170px;filter:url(#nd);opacity:0.04"></div><div style="left:0;top:0;width:100%;height:100%;background:rgba(10,20,24,.09)"></div></div>
<div style="left:675.2px;top:933.7px;width:9.2px;height:3.8px;background:#e03010;"></div>
<div style="left:684.4px;top:933.7px;width:9.2px;height:3.8px;background:#30e010;"></div>
<div style="left:693.6px;top:933.7px;width:9.2px;height:3.8px;background:#3010d0;"></div>
<div style="left:712.9px;top:878px;width:1.1px;height:60px;background:repeating-linear-gradient(180deg,#143414 0,#143414 3px,#70ab70 3px,#70ab70 5.5px);"></div>
<div style="left:714px;top:878px;width:1.2px;height:60px;background:#d4f4d4;"></div>
<div style="left:719.2px;top:878px;width:39.3px;height:60px;background:#70ab70;"></div>
<div style="left:720.2px;top:878px;width:37.3px;height:12.5px;overflow:hidden;"><div style="left:0.5px;top:-1px;font-size:10.5px;line-height:12px;color:#e8f6e8;font-weight:700;white-space:pre;">V1-0003</div></div>
<div style="left:720.4px;top:890.7px;width:36.5px;height:43px;background:#4a5458;overflow:hidden;"><svg style="left:0;top:0" width="36.5" height="43" viewBox="0 0 44.82 52.8" preserveAspectRatio="none"><use href="#t2" filter="url(#bl)" transform="translate(-1.6 -0.9) scale(1.034)"/></svg><div style="left:-82px;top:-58px;width:300px;height:170px;filter:url(#nz);opacity:0.28"></div><div style="left:-82px;top:-58px;width:300px;height:170px;filter:url(#nd);opacity:0.20"></div><div style="left:0;top:0;width:100%;height:100%;background:rgba(10,20,24,.09)"></div></div>
<div style="left:719.7px;top:933.7px;width:9.2px;height:3.8px;background:#e03010;"></div>
<div style="left:728.9px;top:933.7px;width:9.2px;height:3.8px;background:#30e010;"></div>
<div style="left:738.1px;top:933.7px;width:9.2px;height:3.8px;background:#3010d0;"></div>
<div style="left:757.4px;top:878px;width:1.1px;height:60px;background:repeating-linear-gradient(180deg,#143414 0,#143414 3px,#70ab70 3px,#70ab70 5.5px);"></div>
<div style="left:758.5px;top:878px;width:1.2px;height:60px;background:#d4f4d4;"></div>
<div style="left:764.5px;top:878px;width:39px;height:60px;background:#70ab70;"></div>
<div style="left:765.5px;top:878px;width:37.0px;height:12.5px;overflow:hidden;"><div style="left:0.5px;top:-1px;font-size:10.5px;line-height:12px;color:#e8f6e8;font-weight:700;white-space:pre;">V1-0004</div></div>
<div style="left:765.7px;top:890.7px;width:36.2px;height:43px;background:#4a5458;overflow:hidden;"><svg style="left:0;top:0" width="36.2" height="43" viewBox="0 0 44.45 52.8" preserveAspectRatio="none"><use href="#t3" filter="url(#bl)" transform="translate(-1.6 -0.9) scale(1.034)"/></svg><div style="left:-123px;top:-87px;width:300px;height:170px;filter:url(#nz);opacity:0.28"></div><div style="left:-123px;top:-87px;width:300px;height:170px;filter:url(#nd);opacity:0.20"></div><div style="left:0;top:0;width:100%;height:100%;background:rgba(10,20,24,.09)"></div></div>
<div style="left:765px;top:933.7px;width:9.2px;height:3.8px;background:#e03010;"></div>
<div style="left:774.2px;top:933.7px;width:9.2px;height:3.8px;background:#30e010;"></div>
<div style="left:783.4px;top:933.7px;width:9.2px;height:3.8px;background:#3010d0;"></div>
<div style="left:802.4px;top:878px;width:1.1px;height:60px;background:repeating-linear-gradient(180deg,#143414 0,#143414 3px,#70ab70 3px,#70ab70 5.5px);"></div>
<div style="left:803.5px;top:878px;width:1.2px;height:60px;background:#d4f4d4;"></div>
<div style="left:808.5px;top:878px;width:23.8px;height:60px;background:#70ab70;"></div>
<div style="left:809.5px;top:878px;width:21.8px;height:12.5px;overflow:hidden;"><div style="left:0.5px;top:-1px;font-size:10.5px;line-height:12px;color:#e8f6e8;font-weight:700;white-space:pre;">V1-0005</div></div>
<div style="left:809.7px;top:890.7px;width:21px;height:43px;background:#4a5458;overflow:hidden;"><svg style="left:0;top:0" width="21.0" height="43" viewBox="0 0 25.79 52.8" preserveAspectRatio="none"><use href="#t4" filter="url(#bl3)" transform="translate(-1.6 -0.9) scale(1.034)"/></svg><div style="left:-164px;top:-16px;width:300px;height:170px;filter:url(#nz);opacity:0.28"></div><div style="left:-164px;top:-16px;width:300px;height:170px;filter:url(#nd);opacity:0.20"></div><div style="left:0;top:0;width:100%;height:100%;background:rgba(10,20,24,.09)"></div></div>
<div style="left:809px;top:933.7px;width:7.26667px;height:3.8px;background:#e03010;"></div>
<div style="left:816.267px;top:933.7px;width:7.26667px;height:3.8px;background:#30e010;"></div>
<div style="left:831.2px;top:878px;width:1.1px;height:60px;background:repeating-linear-gradient(180deg,#143414 0,#143414 3px,#70ab70 3px,#70ab70 5.5px);"></div>
<div style="left:832.3px;top:878px;width:1.2px;height:60px;background:#d4f4d4;"></div>
<div style="left:837.2px;top:878px;width:22.8px;height:60px;background:#70ab70;"></div>
<div style="left:838.2px;top:878px;width:20.8px;height:12.5px;overflow:hidden;"><div style="left:0.5px;top:-1px;font-size:10.5px;line-height:12px;color:#e8f6e8;font-weight:700;white-space:pre;">V1-0006</div></div>
<div style="left:838.4px;top:890.7px;width:20px;height:43px;background:#4a5458;overflow:hidden;"><svg style="left:0;top:0" width="20.0" height="43" viewBox="0 0 24.56 52.8" preserveAspectRatio="none"><use href="#t5" filter="url(#bl)" transform="translate(-1.6 -0.9) scale(1.034)"/></svg><div style="left:-25px;top:-45px;width:300px;height:170px;filter:url(#nz);opacity:0.28"></div><div style="left:-25px;top:-45px;width:300px;height:170px;filter:url(#nd);opacity:0.20"></div><div style="left:0;top:0;width:100%;height:100%;background:rgba(10,20,24,.09)"></div></div>
<div style="left:837.7px;top:933.7px;width:6.93333px;height:3.8px;background:#e03010;"></div>
<div style="left:844.633px;top:933.7px;width:6.93333px;height:3.8px;background:#30e010;"></div>
<div style="left:858.9px;top:878px;width:1.1px;height:60px;background:repeating-linear-gradient(180deg,#143414 0,#143414 3px,#70ab70 3px,#70ab70 5.5px);"></div>
<div style="left:860px;top:878px;width:1.2px;height:60px;background:#d4f4d4;"></div>
<div style="left:864.2px;top:878px;width:22.3px;height:60px;background:#70ab70;"></div>
<div style="left:865.2px;top:878px;width:20.3px;height:12.5px;overflow:hidden;"><div style="left:0.5px;top:-1px;font-size:10.5px;line-height:12px;color:#e8f6e8;font-weight:700;white-space:pre;">V1-0007</div></div>
<div style="left:865.4px;top:890.7px;width:19.5px;height:43px;background:#4a5458;overflow:hidden;"><svg style="left:0;top:0" width="19.5" height="43" viewBox="0 0 23.94 52.8" preserveAspectRatio="none"><use href="#t6" filter="url(#bl)" transform="translate(-1.6 -0.9) scale(1.034)"/></svg><div style="left:-66px;top:-74px;width:300px;height:170px;filter:url(#nz);opacity:0.28"></div><div style="left:-66px;top:-74px;width:300px;height:170px;filter:url(#nd);opacity:0.20"></div><div style="left:0;top:0;width:100%;height:100%;background:rgba(10,20,24,.09)"></div></div>
<div style="left:864.7px;top:933.7px;width:6.76667px;height:3.8px;background:#e03010;"></div>
<div style="left:871.467px;top:933.7px;width:6.76667px;height:3.8px;background:#30e010;"></div>
<div style="left:885.4px;top:878px;width:1.1px;height:60px;background:repeating-linear-gradient(180deg,#143414 0,#143414 3px,#70ab70 3px,#70ab70 5.5px);"></div>
<div style="left:886.5px;top:878px;width:1.2px;height:60px;background:#d4f4d4;"></div>
<div style="left:891px;top:878px;width:39.6px;height:60px;background:#70ab70;"></div>
<div style="left:892.0px;top:878px;width:37.6px;height:12.5px;overflow:hidden;"><div style="left:0.5px;top:-1px;font-size:10.5px;line-height:12px;color:#e8f6e8;font-weight:700;white-space:pre;">V1-0008</div></div>
<div style="left:892.2px;top:890.7px;width:36.8px;height:43px;background:#4a5458;overflow:hidden;"><svg style="left:0;top:0" width="36.8" height="43" viewBox="0 0 45.19 52.8" preserveAspectRatio="none"><use href="#t7" filter="url(#bl)" transform="translate(-1.6 -0.9) scale(1.034)"/></svg><div style="left:-107px;top:-3px;width:300px;height:170px;filter:url(#nz);opacity:0.06"></div><div style="left:-107px;top:-3px;width:300px;height:170px;filter:url(#nd);opacity:0.04"></div><div style="left:0;top:0;width:100%;height:100%;background:rgba(10,20,24,.09)"></div></div>
<div style="left:891.5px;top:933.7px;width:9.2px;height:3.8px;background:#e03010;"></div>
<div style="left:900.7px;top:933.7px;width:9.2px;height:3.8px;background:#30e010;"></div>
<div style="left:909.9px;top:933.7px;width:9.2px;height:3.8px;background:#3010d0;"></div>
<div style="left:929.5px;top:878px;width:1.1px;height:60px;background:repeating-linear-gradient(180deg,#143414 0,#143414 3px,#70ab70 3px,#70ab70 5.5px);"></div>
<div style="left:930.6px;top:878px;width:1.2px;height:60px;background:#d4f4d4;"></div>
<div style="left:935.6px;top:878px;width:39.6px;height:60px;background:#70ab70;"></div>
<div style="left:936.6px;top:878px;width:37.6px;height:12.5px;overflow:hidden;"><div style="left:0.5px;top:-1px;font-size:10.5px;line-height:12px;color:#e8f6e8;font-weight:700;white-space:pre;">V1-0009</div></div>
<div style="left:936.8px;top:890.7px;width:36.8px;height:43px;background:#4a5458;overflow:hidden;"><svg style="left:0;top:0" width="36.8" height="43" viewBox="0 0 45.19 52.8" preserveAspectRatio="none"><use href="#t8" filter="url(#bl)" transform="translate(-1.6 -0.9) scale(1.034)"/></svg><div style="left:-148px;top:-32px;width:300px;height:170px;filter:url(#nz);opacity:0.28"></div><div style="left:-148px;top:-32px;width:300px;height:170px;filter:url(#nd);opacity:0.20"></div><div style="left:0;top:0;width:100%;height:100%;background:rgba(10,20,24,.09)"></div></div>
<div style="left:936.1px;top:933.7px;width:9.2px;height:3.8px;background:#e03010;"></div>
<div style="left:945.3px;top:933.7px;width:9.2px;height:3.8px;background:#30e010;"></div>
<div style="left:954.5px;top:933.7px;width:9.2px;height:3.8px;background:#3010d0;"></div>
<div style="left:974.1px;top:878px;width:1.1px;height:60px;background:repeating-linear-gradient(180deg,#143414 0,#143414 3px,#70ab70 3px,#70ab70 5.5px);"></div>
<div style="left:975.2px;top:878px;width:1.2px;height:60px;background:#d4f4d4;"></div>
<div style="left:980.2px;top:878px;width:39.7px;height:60px;background:#70ab70;"></div>
<div style="left:981.2px;top:878px;width:37.7px;height:12.5px;overflow:hidden;"><div style="left:0.5px;top:-1px;font-size:10.5px;line-height:12px;color:#e8f6e8;font-weight:700;white-space:pre;">V1-0010</div></div>
<div style="left:981.4px;top:890.7px;width:36.9px;height:43px;background:#4a5458;overflow:hidden;"><svg style="left:0;top:0" width="36.9" height="43" viewBox="0 0 45.31 52.8" preserveAspectRatio="none"><use href="#t9" filter="url(#bl)" transform="translate(-1.6 -0.9) scale(1.034)"/></svg><div style="left:-9px;top:-61px;width:300px;height:170px;filter:url(#nz);opacity:0.28"></div><div style="left:-9px;top:-61px;width:300px;height:170px;filter:url(#nd);opacity:0.20"></div><div style="left:0;top:0;width:100%;height:100%;background:rgba(10,20,24,.09)"></div></div>
<div style="left:980.7px;top:933.7px;width:9.2px;height:3.8px;background:#e03010;"></div>
<div style="left:989.9px;top:933.7px;width:9.2px;height:3.8px;background:#30e010;"></div>
<div style="left:999.1px;top:933.7px;width:9.2px;height:3.8px;background:#3010d0;"></div>
<div style="left:1018.8px;top:878px;width:1.1px;height:60px;background:repeating-linear-gradient(180deg,#143414 0,#143414 3px,#70ab70 3px,#70ab70 5.5px);"></div>
<div style="left:1019.9px;top:878px;width:1.2px;height:60px;background:#d4f4d4;"></div>
<div style="left:1024.9px;top:878px;width:39.6px;height:60px;background:#70ab70;"></div>
<div style="left:1025.9px;top:878px;width:37.6px;height:12.5px;overflow:hidden;"><div style="left:0.5px;top:-1px;font-size:10.5px;line-height:12px;color:#e8f6e8;font-weight:700;white-space:pre;">V1-0011</div></div>
<div style="left:1026.1px;top:890.7px;width:36.8px;height:43px;background:#4a5458;overflow:hidden;"><svg style="left:0;top:0" width="36.8" height="43" viewBox="0 0 45.19 52.8" preserveAspectRatio="none"><use href="#t10" filter="url(#bl)" transform="translate(-1.6 -0.9) scale(1.034)"/></svg><div style="left:-50px;top:-90px;width:300px;height:170px;filter:url(#nz);opacity:0.28"></div><div style="left:-50px;top:-90px;width:300px;height:170px;filter:url(#nd);opacity:0.20"></div><div style="left:0;top:0;width:100%;height:100%;background:rgba(10,20,24,.09)"></div></div>
<div style="left:1025.4px;top:933.7px;width:9.2px;height:3.8px;background:#e03010;"></div>
<div style="left:1034.6px;top:933.7px;width:9.2px;height:3.8px;background:#30e010;"></div>
<div style="left:1043.8px;top:933.7px;width:9.2px;height:3.8px;background:#3010d0;"></div>
<div style="left:1063.4px;top:878px;width:1.1px;height:60px;background:repeating-linear-gradient(180deg,#143414 0,#143414 3px,#70ab70 3px,#70ab70 5.5px);"></div>
<div style="left:1064.5px;top:878px;width:1.2px;height:60px;background:#d4f4d4;"></div>
<div style="left:1069.5px;top:878px;width:28.1px;height:60px;background:#70ab70;"></div>
<div style="left:1070.5px;top:878px;width:26.1px;height:12.5px;overflow:hidden;"><div style="left:0.5px;top:-1px;font-size:10.5px;line-height:12px;color:#e8f6e8;font-weight:700;white-space:pre;">V1-0012</div></div>
<div style="left:1070.7px;top:890.7px;width:25.3px;height:43px;background:#4a5458;overflow:hidden;"><svg style="left:0;top:0" width="25.3" height="43" viewBox="0 0 31.07 52.8" preserveAspectRatio="none"><use href="#t11" filter="url(#bl)" transform="translate(-1.6 -0.9) scale(1.034)"/></svg><div style="left:-91px;top:-19px;width:300px;height:170px;filter:url(#nz);opacity:0.28"></div><div style="left:-91px;top:-19px;width:300px;height:170px;filter:url(#nd);opacity:0.20"></div><div style="left:0;top:0;width:100%;height:100%;background:rgba(10,20,24,.09)"></div></div>
<div style="left:1070px;top:933.7px;width:8.7px;height:3.8px;background:#e03010;"></div>
<div style="left:1078.7px;top:933.7px;width:8.7px;height:3.8px;background:#30e010;"></div>
<div style="left:1087.4px;top:933.7px;width:8.7px;height:3.8px;background:#3010d0;"></div>
<div style="left:1096.5px;top:878px;width:1.1px;height:60px;background:repeating-linear-gradient(180deg,#143414 0,#143414 3px,#70ab70 3px,#70ab70 5.5px);"></div>
<div style="left:1097.6px;top:878px;width:1.2px;height:60px;background:#d4f4d4;"></div>
<div style="left:1103.4px;top:878px;width:7.4px;height:60px;background:#70ab70;"></div>
<div style="left:1104.4px;top:878px;width:5.4px;height:12.5px;overflow:hidden;"><div style="left:0.5px;top:-1px;font-size:10.5px;line-height:12px;color:#e8f6e8;font-weight:700;white-space:pre;">V1-0013</div></div>
<div style="left:1104.6px;top:890.7px;width:4.6px;height:43px;background:#4a5458;overflow:hidden;"><svg style="left:0;top:0" width="4.6" height="43" viewBox="0 0 5.65 52.8" preserveAspectRatio="none"><use href="#t12" filter="url(#bl)" transform="translate(-1.6 -0.9) scale(1.034)"/></svg><div style="left:-132px;top:-48px;width:300px;height:170px;filter:url(#nz);opacity:0.06"></div><div style="left:-132px;top:-48px;width:300px;height:170px;filter:url(#nd);opacity:0.04"></div><div style="left:0;top:0;width:100%;height:100%;background:rgba(10,20,24,.09)"></div></div>
<div style="left:1103.9px;top:933.7px;width:1.8px;height:3.8px;background:#e03010;"></div>
<div style="left:1105.7px;top:933.7px;width:1.8px;height:3.8px;background:#30e010;"></div>
<div style="left:1109.7px;top:878px;width:1.1px;height:60px;background:repeating-linear-gradient(180deg,#143414 0,#143414 3px,#70ab70 3px,#70ab70 5.5px);"></div>
<div style="left:1110.8px;top:878px;width:1.2px;height:60px;background:#d4f4d4;"></div>
<div style="left:1115.8px;top:878px;width:26.5px;height:60px;background:#70ab70;"></div>
<div style="left:1116.8px;top:878px;width:24.5px;height:12.5px;overflow:hidden;"><div style="left:0.5px;top:-1px;font-size:10.5px;line-height:12px;color:#e8f6e8;font-weight:700;white-space:pre;">V1-0014</div></div>
<div style="left:1117px;top:890.7px;width:23.7px;height:43px;background:#4a5458;overflow:hidden;"><svg style="left:0;top:0" width="23.7" height="43" viewBox="0 0 29.10 52.8" preserveAspectRatio="none"><use href="#t13" filter="url(#bl)" transform="translate(-1.6 -0.9) scale(1.034)"/></svg><div style="left:-173px;top:-77px;width:300px;height:170px;filter:url(#nz);opacity:0.28"></div><div style="left:-173px;top:-77px;width:300px;height:170px;filter:url(#nd);opacity:0.20"></div><div style="left:0;top:0;width:100%;height:100%;background:rgba(10,20,24,.09)"></div></div>
<div style="left:1116.3px;top:933.7px;width:8.16667px;height:3.8px;background:#e03010;"></div>
<div style="left:1124.47px;top:933.7px;width:8.16667px;height:3.8px;background:#30e010;"></div>
<div style="left:1132.63px;top:933.7px;width:8.16667px;height:3.8px;background:#3010d0;"></div>
<div style="left:1141.2px;top:878px;width:1.1px;height:60px;background:repeating-linear-gradient(180deg,#143414 0,#143414 3px,#70ab70 3px,#70ab70 5.5px);"></div>
<div style="left:1142.3px;top:878px;width:1.2px;height:60px;background:#d4f4d4;"></div>
<div style="left:1147.2px;top:878px;width:38.1px;height:60px;background:#70ab70;"></div>
<div style="left:1148.2px;top:878px;width:36.1px;height:12.5px;overflow:hidden;"><div style="left:0.5px;top:-1px;font-size:10.5px;line-height:12px;color:#e8f6e8;font-weight:700;white-space:pre;">V1-0015</div></div>
<div style="left:1148.4px;top:890.7px;width:35.3px;height:43px;background:#4a5458;overflow:hidden;"><svg style="left:0;top:0" width="35.3" height="43" viewBox="0 0 43.35 52.8" preserveAspectRatio="none"><use href="#t14" filter="url(#bl)" transform="translate(-1.6 -0.9) scale(1.034)"/></svg><div style="left:-34px;top:-6px;width:300px;height:170px;filter:url(#nz);opacity:0.28"></div><div style="left:-34px;top:-6px;width:300px;height:170px;filter:url(#nd);opacity:0.20"></div><div style="left:0;top:0;width:100%;height:100%;background:rgba(10,20,24,.09)"></div></div>
<div style="left:1147.7px;top:933.7px;width:9.2px;height:3.8px;background:#e03010;"></div>
<div style="left:1156.9px;top:933.7px;width:9.2px;height:3.8px;background:#30e010;"></div>
<div style="left:1166.1px;top:933.7px;width:9.2px;height:3.8px;background:#3010d0;"></div>
<div style="left:1184.2px;top:878px;width:1.1px;height:60px;background:repeating-linear-gradient(180deg,#143414 0,#143414 3px,#70ab70 3px,#70ab70 5.5px);"></div>
<div style="left:1185.3px;top:878px;width:1.2px;height:60px;background:#d4f4d4;"></div>
<div style="left:1190.7px;top:878px;width:38.9px;height:60px;background:#70ab70;"></div>
<div style="left:1191.7px;top:878px;width:36.9px;height:12.5px;overflow:hidden;"><div style="left:0.5px;top:-1px;font-size:10.5px;line-height:12px;color:#e8f6e8;font-weight:700;white-space:pre;">V1-0016</div></div>
<div style="left:1191.9px;top:890.7px;width:36.1px;height:43px;background:#4a5458;overflow:hidden;"><svg style="left:0;top:0" width="36.1" height="43" viewBox="0 0 44.33 52.8" preserveAspectRatio="none"><use href="#t15" filter="url(#bl)" transform="translate(-1.6 -0.9) scale(1.034)"/></svg><div style="left:-75px;top:-35px;width:300px;height:170px;filter:url(#nz);opacity:0.28"></div><div style="left:-75px;top:-35px;width:300px;height:170px;filter:url(#nd);opacity:0.20"></div><div style="left:0;top:0;width:100%;height:100%;background:rgba(10,20,24,.09)"></div></div>
<div style="left:1191.2px;top:933.7px;width:9.2px;height:3.8px;background:#e03010;"></div>
<div style="left:1200.4px;top:933.7px;width:9.2px;height:3.8px;background:#30e010;"></div>
<div style="left:1209.6px;top:933.7px;width:9.2px;height:3.8px;background:#3010d0;"></div>
<div style="left:1228.5px;top:878px;width:1.1px;height:60px;background:repeating-linear-gradient(180deg,#143414 0,#143414 3px,#70ab70 3px,#70ab70 5.5px);"></div>
<div style="left:1229.6px;top:878px;width:1.2px;height:60px;background:#d4f4d4;"></div>
<div style="left:1235.4px;top:878px;width:38.9px;height:60px;background:#70ab70;"></div>
<div style="left:1236.4px;top:878px;width:36.9px;height:12.5px;overflow:hidden;"><div style="left:0.5px;top:-1px;font-size:10.5px;line-height:12px;color:#e8f6e8;font-weight:700;white-space:pre;">V1-0017</div></div>
<div style="left:1236.6px;top:890.7px;width:36.1px;height:43px;background:#4a5458;overflow:hidden;"><svg style="left:0;top:0" width="36.1" height="43" viewBox="0 0 44.33 52.8" preserveAspectRatio="none"><use href="#t16" filter="url(#bl)" transform="translate(-1.6 -0.9) scale(1.034)"/></svg><div style="left:-116px;top:-64px;width:300px;height:170px;filter:url(#nz);opacity:0.28"></div><div style="left:-116px;top:-64px;width:300px;height:170px;filter:url(#nd);opacity:0.20"></div><div style="left:0;top:0;width:100%;height:100%;background:rgba(10,20,24,.09)"></div></div>
<div style="left:1235.9px;top:933.7px;width:9.2px;height:3.8px;background:#e03010;"></div>
<div style="left:1245.1px;top:933.7px;width:9.2px;height:3.8px;background:#30e010;"></div>
<div style="left:1254.3px;top:933.7px;width:9.2px;height:3.8px;background:#3010d0;"></div>
<div style="left:1273.2px;top:878px;width:1.1px;height:60px;background:repeating-linear-gradient(180deg,#143414 0,#143414 3px,#70ab70 3px,#70ab70 5.5px);"></div>
<div style="left:1274.3px;top:878px;width:1.2px;height:60px;background:#d4f4d4;"></div>
<div style="left:1280px;top:878px;width:19.9px;height:60px;background:#70ab70;"></div>
<div style="left:1281.0px;top:878px;width:17.9px;height:12.5px;overflow:hidden;"><div style="left:0.5px;top:-1px;font-size:10.5px;line-height:12px;color:#e8f6e8;font-weight:700;white-space:pre;">V1-0018</div></div>
<div style="left:1281.2px;top:890.7px;width:17.1px;height:43px;background:#4a5458;overflow:hidden;"><svg style="left:0;top:0" width="17.1" height="43" viewBox="0 0 21.00 52.8" preserveAspectRatio="none"><use href="#t17" filter="url(#bl)" transform="translate(-1.6 -0.9) scale(1.034)"/></svg><div style="left:-157px;top:-93px;width:300px;height:170px;filter:url(#nz);opacity:0.28"></div><div style="left:-157px;top:-93px;width:300px;height:170px;filter:url(#nd);opacity:0.20"></div><div style="left:0;top:0;width:100%;height:100%;background:rgba(10,20,24,.09)"></div></div>
<div style="left:1280.5px;top:933.7px;width:5.96667px;height:3.8px;background:#e03010;"></div>
<div style="left:1286.47px;top:933.7px;width:5.96667px;height:3.8px;background:#30e010;"></div>
<div style="left:1298.8px;top:878px;width:1.1px;height:60px;background:repeating-linear-gradient(180deg,#143414 0,#143414 3px,#70ab70 3px,#70ab70 5.5px);"></div>
<div style="left:1299.9px;top:878px;width:1.2px;height:60px;background:#d4f4d4;"></div>
<div style="left:1305.7px;top:878px;width:20.7px;height:60px;background:#70ab70;"></div>
<div style="left:1306.7px;top:878px;width:18.7px;height:12.5px;overflow:hidden;"><div style="left:0.5px;top:-1px;font-size:10.5px;line-height:12px;color:#e8f6e8;font-weight:700;white-space:pre;">V1-0019</div></div>
<div style="left:1306.9px;top:890.7px;width:17.9px;height:43px;background:#4a5458;overflow:hidden;"><svg style="left:0;top:0" width="17.9" height="43" viewBox="0 0 21.98 52.8" preserveAspectRatio="none"><use href="#t18" filter="url(#bl)" transform="translate(-1.6 -0.9) scale(1.034)"/></svg><div style="left:-18px;top:-22px;width:300px;height:170px;filter:url(#nz);opacity:0.28"></div><div style="left:-18px;top:-22px;width:300px;height:170px;filter:url(#nd);opacity:0.20"></div><div style="left:0;top:0;width:100%;height:100%;background:rgba(10,20,24,.09)"></div></div>
<div style="left:1306.2px;top:933.7px;width:6.23333px;height:3.8px;background:#e03010;"></div>
<div style="left:1312.43px;top:933.7px;width:6.23333px;height:3.8px;background:#30e010;"></div>
<div style="left:1325.3px;top:878px;width:1.1px;height:60px;background:repeating-linear-gradient(180deg,#143414 0,#143414 3px,#70ab70 3px,#70ab70 5.5px);"></div>
<div style="left:1326.4px;top:878px;width:1.2px;height:60px;background:#d4f4d4;"></div>
<div style="left:1332px;top:878px;width:38px;height:60px;background:#70ab70;"></div>
<div style="left:1333.0px;top:878px;width:36.0px;height:12.5px;overflow:hidden;"><div style="left:0.5px;top:-1px;font-size:10.5px;line-height:12px;color:#e8f6e8;font-weight:700;white-space:pre;">V1-0020</div></div>
<div style="left:1333.2px;top:890.7px;width:35.2px;height:43px;background:#4a5458;overflow:hidden;"><svg style="left:0;top:0" width="35.2" height="43" viewBox="0 0 43.22 52.8" preserveAspectRatio="none"><use href="#t19" filter="url(#bl)" transform="translate(-1.6 -0.9) scale(1.034)"/></svg><div style="left:-59px;top:-51px;width:300px;height:170px;filter:url(#nz);opacity:0.28"></div><div style="left:-59px;top:-51px;width:300px;height:170px;filter:url(#nd);opacity:0.20"></div><div style="left:0;top:0;width:100%;height:100%;background:rgba(10,20,24,.09)"></div></div>
<div style="left:1332.5px;top:933.7px;width:9.2px;height:3.8px;background:#e03010;"></div>
<div style="left:1341.7px;top:933.7px;width:9.2px;height:3.8px;background:#30e010;"></div>
<div style="left:1350.9px;top:933.7px;width:9.2px;height:3.8px;background:#3010d0;"></div>
<div style="left:1368.9px;top:878px;width:1.1px;height:60px;background:repeating-linear-gradient(180deg,#143414 0,#143414 3px,#70ab70 3px,#70ab70 5.5px);"></div>
<div style="left:1370px;top:878px;width:1.2px;height:60px;background:#d4f4d4;"></div>
<div style="left:1376px;top:878px;width:39.7px;height:60px;background:#70ab70;"></div>
<div style="left:1377.0px;top:878px;width:37.7px;height:12.5px;overflow:hidden;"><div style="left:0.5px;top:-1px;font-size:10.5px;line-height:12px;color:#e8f6e8;font-weight:700;white-space:pre;">V1-0021</div></div>
<div style="left:1377.2px;top:890.7px;width:36.9px;height:43px;background:#4a5458;overflow:hidden;"><svg style="left:0;top:0" width="36.9" height="43" viewBox="0 0 45.31 52.8" preserveAspectRatio="none"><use href="#t20" filter="url(#bl)" transform="translate(-1.6 -0.9) scale(1.034)"/></svg><div style="left:-100px;top:-80px;width:300px;height:170px;filter:url(#nz);opacity:0.28"></div><div style="left:-100px;top:-80px;width:300px;height:170px;filter:url(#nd);opacity:0.20"></div><div style="left:0;top:0;width:100%;height:100%;background:rgba(10,20,24,.09)"></div></div>
<div style="left:1376.5px;top:933.7px;width:9.2px;height:3.8px;background:#e03010;"></div>
<div style="left:1385.7px;top:933.7px;width:9.2px;height:3.8px;background:#30e010;"></div>
<div style="left:1394.9px;top:933.7px;width:9.2px;height:3.8px;background:#3010d0;"></div>
<div style="left:1414.6px;top:878px;width:1.1px;height:60px;background:repeating-linear-gradient(180deg,#143414 0,#143414 3px,#70ab70 3px,#70ab70 5.5px);"></div>
<div style="left:1415.7px;top:878px;width:1.2px;height:60px;background:#d4f4d4;"></div>
<div style="left:1421.4px;top:878px;width:23.2px;height:60px;background:#70ab70;"></div>
<div style="left:1422.4px;top:878px;width:21.2px;height:12.5px;overflow:hidden;"><div style="left:0.5px;top:-1px;font-size:10.5px;line-height:12px;color:#e8f6e8;font-weight:700;white-space:pre;">V1-0022</div></div>
<div style="left:1422.6px;top:890.7px;width:20.4px;height:43px;background:#4a5458;overflow:hidden;"><svg style="left:0;top:0" width="20.4" height="43" viewBox="0 0 25.05 52.8" preserveAspectRatio="none"><use href="#t21" filter="url(#bl)" transform="translate(-1.6 -0.9) scale(1.034)"/></svg><div style="left:-141px;top:-9px;width:300px;height:170px;filter:url(#nz);opacity:0.28"></div><div style="left:-141px;top:-9px;width:300px;height:170px;filter:url(#nd);opacity:0.20"></div><div style="left:0;top:0;width:100%;height:100%;background:rgba(10,20,24,.09)"></div></div>
<div style="left:1421.9px;top:933.7px;width:7.06667px;height:3.8px;background:#e03010;"></div>
<div style="left:1428.97px;top:933.7px;width:7.06667px;height:3.8px;background:#30e010;"></div>
<div style="left:1443.5px;top:878px;width:1.1px;height:60px;background:repeating-linear-gradient(180deg,#143414 0,#143414 3px,#70ab70 3px,#70ab70 5.5px);"></div>
<div style="left:1444.6px;top:878px;width:1.2px;height:60px;background:#d4f4d4;"></div>
<div style="left:1450.9px;top:878px;width:33.8px;height:60px;background:#70ab70;"></div>
<div style="left:1451.9px;top:878px;width:31.8px;height:12.5px;overflow:hidden;"><div style="left:0.5px;top:-1px;font-size:10.5px;line-height:12px;color:#e8f6e8;font-weight:700;white-space:pre;">V1-0023</div></div>
<div style="left:1452.1px;top:890.7px;width:31px;height:43px;background:#4a5458;overflow:hidden;"><svg style="left:0;top:0" width="31.0" height="43" viewBox="0 0 38.07 52.8" preserveAspectRatio="none"><use href="#t22" filter="url(#bl)" transform="translate(-1.6 -0.9) scale(1.034)"/></svg><div style="left:-2px;top:-38px;width:300px;height:170px;filter:url(#nz);opacity:0.28"></div><div style="left:-2px;top:-38px;width:300px;height:170px;filter:url(#nd);opacity:0.20"></div><div style="left:0;top:0;width:100%;height:100%;background:rgba(10,20,24,.09)"></div></div>
<div style="left:1451.4px;top:933.7px;width:9.2px;height:3.8px;background:#e03010;"></div>
<div style="left:1460.6px;top:933.7px;width:9.2px;height:3.8px;background:#30e010;"></div>
<div style="left:1469.8px;top:933.7px;width:9.2px;height:3.8px;background:#3010d0;"></div>
<div style="left:1483.6px;top:878px;width:1.1px;height:60px;background:repeating-linear-gradient(180deg,#143414 0,#143414 3px,#70ab70 3px,#70ab70 5.5px);"></div>
<div style="left:1484.7px;top:878px;width:1.2px;height:60px;background:#d4f4d4;"></div>
<div style="left:1491.6px;top:878px;width:28.8px;height:60px;background:#70ab70;"></div>
<div style="left:1492.6px;top:878px;width:26.8px;height:12.5px;overflow:hidden;"><div style="left:0.5px;top:-1px;font-size:10.5px;line-height:12px;color:#e8f6e8;font-weight:700;white-space:pre;">V1-0024</div></div>
<div style="left:1492.8px;top:890.7px;width:26px;height:43px;background:#4a5458;overflow:hidden;"><svg style="left:0;top:0" width="26.0" height="43" viewBox="0 0 31.93 52.8" preserveAspectRatio="none"><use href="#t23" filter="url(#bl)" transform="translate(-1.6 -0.9) scale(1.034)"/></svg><div style="left:-43px;top:-67px;width:300px;height:170px;filter:url(#nz);opacity:0.28"></div><div style="left:-43px;top:-67px;width:300px;height:170px;filter:url(#nd);opacity:0.20"></div><div style="left:0;top:0;width:100%;height:100%;background:rgba(10,20,24,.09)"></div></div>
<div style="left:1492.1px;top:933.7px;width:8.93333px;height:3.8px;background:#e03010;"></div>
<div style="left:1501.03px;top:933.7px;width:8.93333px;height:3.8px;background:#30e010;"></div>
<div style="left:1509.97px;top:933.7px;width:8.93333px;height:3.8px;background:#3010d0;"></div>
<div style="left:1519.3px;top:878px;width:1.1px;height:60px;background:repeating-linear-gradient(180deg,#143414 0,#143414 3px,#70ab70 3px,#70ab70 5.5px);"></div>
<div style="left:1520.4px;top:878px;width:1.2px;height:60px;background:#d4f4d4;"></div>
<div style="left:1527.3px;top:878px;width:16.9px;height:60px;background:#70ab70;"></div>
<div style="left:1528.3px;top:878px;width:14.9px;height:12.5px;overflow:hidden;"><div style="left:0.5px;top:-1px;font-size:10.5px;line-height:12px;color:#e8f6e8;font-weight:700;white-space:pre;">V1-0025</div></div>
<div style="left:1528.5px;top:890.7px;width:14.1px;height:43px;background:#4a5458;overflow:hidden;"><svg style="left:0;top:0" width="14.1" height="43" viewBox="0 0 17.31 52.8" preserveAspectRatio="none"><use href="#t24" filter="url(#bl)" transform="translate(-1.6 -0.9) scale(1.034)"/></svg><div style="left:-84px;top:-96px;width:300px;height:170px;filter:url(#nz);opacity:0.28"></div><div style="left:-84px;top:-96px;width:300px;height:170px;filter:url(#nd);opacity:0.20"></div><div style="left:0;top:0;width:100%;height:100%;background:rgba(10,20,24,.09)"></div></div>
<div style="left:1527.8px;top:933.7px;width:4.96667px;height:3.8px;background:#e03010;"></div>
<div style="left:1532.77px;top:933.7px;width:4.96667px;height:3.8px;background:#30e010;"></div>
<div style="left:1543.1px;top:878px;width:1.1px;height:60px;background:repeating-linear-gradient(180deg,#143414 0,#143414 3px,#70ab70 3px,#70ab70 5.5px);"></div>
<div style="left:1544.2px;top:878px;width:1.2px;height:60px;background:#d4f4d4;"></div>
<div style="left:1551.1px;top:878px;width:20.9px;height:60px;background:#70ab70;"></div>
<div style="left:1552.1px;top:878px;width:18.9px;height:12.5px;overflow:hidden;"><div style="left:0.5px;top:-1px;font-size:10.5px;line-height:12px;color:#e8f6e8;font-weight:700;white-space:pre;">V1-0026</div></div>
<div style="left:1552.3px;top:890.7px;width:18.1px;height:43px;background:#4a5458;overflow:hidden;"><svg style="left:0;top:0" width="18.1" height="43" viewBox="0 0 22.23 52.8" preserveAspectRatio="none"><use href="#t25" filter="url(#bl)" transform="translate(-1.6 -0.9) scale(1.034)"/></svg><div style="left:-125px;top:-25px;width:300px;height:170px;filter:url(#nz);opacity:0.28"></div><div style="left:-125px;top:-25px;width:300px;height:170px;filter:url(#nd);opacity:0.20"></div><div style="left:0;top:0;width:100%;height:100%;background:rgba(10,20,24,.09)"></div></div>
<div style="left:1551.6px;top:933.7px;width:6.3px;height:3.8px;background:#e03010;"></div>
<div style="left:1557.9px;top:933.7px;width:6.3px;height:3.8px;background:#30e010;"></div>
<div style="left:1570.9px;top:878px;width:1.1px;height:60px;background:repeating-linear-gradient(180deg,#143414 0,#143414 3px,#70ab70 3px,#70ab70 5.5px);"></div>
<div style="left:1572px;top:878px;width:1.2px;height:60px;background:#d4f4d4;"></div>
<div style="left:1578.9px;top:878px;width:18.9px;height:60px;background:#70ab70;"></div>
<div style="left:1579.9px;top:878px;width:16.9px;height:12.5px;overflow:hidden;"><div style="left:0.5px;top:-1px;font-size:10.5px;line-height:12px;color:#e8f6e8;font-weight:700;white-space:pre;">V1-0027</div></div>
<div style="left:1580.1px;top:890.7px;width:16.1px;height:43px;background:#4a5458;overflow:hidden;"><svg style="left:0;top:0" width="16.1" height="43" viewBox="0 0 19.77 52.8" preserveAspectRatio="none"><use href="#t26" filter="url(#bl)" transform="translate(-1.6 -0.9) scale(1.034)"/></svg><div style="left:-166px;top:-54px;width:300px;height:170px;filter:url(#nz);opacity:0.28"></div><div style="left:-166px;top:-54px;width:300px;height:170px;filter:url(#nd);opacity:0.20"></div><div style="left:0;top:0;width:100%;height:100%;background:rgba(10,20,24,.09)"></div></div>
<div style="left:1579.4px;top:933.7px;width:5.63333px;height:3.8px;background:#e03010;"></div>
<div style="left:1585.03px;top:933.7px;width:5.63333px;height:3.8px;background:#30e010;"></div>
<div style="left:1596.7px;top:878px;width:1.1px;height:60px;background:repeating-linear-gradient(180deg,#143414 0,#143414 3px,#70ab70 3px,#70ab70 5.5px);"></div>
<div style="left:1597.8px;top:878px;width:1.2px;height:60px;background:#d4f4d4;"></div>
<div style="left:1604.7px;top:878px;width:17.9px;height:60px;background:#70ab70;"></div>
<div style="left:1605.7px;top:878px;width:15.9px;height:12.5px;overflow:hidden;"><div style="left:0.5px;top:-1px;font-size:10.5px;line-height:12px;color:#e8f6e8;font-weight:700;white-space:pre;">V1-0028</div></div>
<div style="left:1605.9px;top:890.7px;width:15.1px;height:43px;background:#4a5458;overflow:hidden;"><svg style="left:0;top:0" width="15.1" height="43" viewBox="0 0 18.54 52.8" preserveAspectRatio="none"><use href="#t27" filter="url(#bl)" transform="translate(-1.6 -0.9) scale(1.034)"/></svg><div style="left:-27px;top:-83px;width:300px;height:170px;filter:url(#nz);opacity:0.28"></div><div style="left:-27px;top:-83px;width:300px;height:170px;filter:url(#nd);opacity:0.20"></div><div style="left:0;top:0;width:100%;height:100%;background:rgba(10,20,24,.09)"></div></div>
<div style="left:1605.2px;top:933.7px;width:5.3px;height:3.8px;background:#e03010;"></div>
<div style="left:1610.5px;top:933.7px;width:5.3px;height:3.8px;background:#30e010;"></div>
<div style="left:1621.5px;top:878px;width:1.1px;height:60px;background:repeating-linear-gradient(180deg,#143414 0,#143414 3px,#70ab70 3px,#70ab70 5.5px);"></div>
<div style="left:1622.6px;top:878px;width:1.2px;height:60px;background:#d4f4d4;"></div>
<div style="left:1629.5px;top:878px;width:38.7px;height:60px;background:#70ab70;"></div>
<div style="left:1630.5px;top:878px;width:36.7px;height:12.5px;overflow:hidden;"><div style="left:0.5px;top:-1px;font-size:10.5px;line-height:12px;color:#e8f6e8;font-weight:700;white-space:pre;">V1-0029</div></div>
<div style="left:1630.7px;top:890.7px;width:35.9px;height:43px;background:#4a5458;overflow:hidden;"><svg style="left:0;top:0" width="35.9" height="43" viewBox="0 0 44.08 52.8" preserveAspectRatio="none"><use href="#t28" filter="url(#bl)" transform="translate(-1.6 -0.9) scale(1.034)"/></svg><div style="left:-68px;top:-12px;width:300px;height:170px;filter:url(#nz);opacity:0.28"></div><div style="left:-68px;top:-12px;width:300px;height:170px;filter:url(#nd);opacity:0.20"></div><div style="left:0;top:0;width:100%;height:100%;background:rgba(10,20,24,.09)"></div></div>
<div style="left:1630px;top:933.7px;width:9.2px;height:3.8px;background:#e03010;"></div>
<div style="left:1639.2px;top:933.7px;width:9.2px;height:3.8px;background:#30e010;"></div>
<div style="left:1648.4px;top:933.7px;width:9.2px;height:3.8px;background:#3010d0;"></div>
<div style="left:1667.1px;top:878px;width:1.1px;height:60px;background:repeating-linear-gradient(180deg,#143414 0,#143414 3px,#70ab70 3px,#70ab70 5.5px);"></div>
<div style="left:1668.2px;top:878px;width:1.2px;height:60px;background:#d4f4d4;"></div>
<div style="left:1674.2px;top:878px;width:39.3px;height:60px;background:#70ab70;"></div>
<div style="left:1675.2px;top:878px;width:37.3px;height:12.5px;overflow:hidden;"><div style="left:0.5px;top:-1px;font-size:10.5px;line-height:12px;color:#e8f6e8;font-weight:700;white-space:pre;">V1-0030</div></div>
<div style="left:1675.4px;top:890.7px;width:36.5px;height:43px;background:#4a5458;overflow:hidden;"><svg style="left:0;top:0" width="36.5" height="43" viewBox="0 0 44.82 52.8" preserveAspectRatio="none"><use href="#t29" filter="url(#bl)" transform="translate(-1.6 -0.9) scale(1.034)"/></svg><div style="left:-109px;top:-41px;width:300px;height:170px;filter:url(#nz);opacity:0.28"></div><div style="left:-109px;top:-41px;width:300px;height:170px;filter:url(#nd);opacity:0.20"></div><div style="left:0;top:0;width:100%;height:100%;background:rgba(10,20,24,.09)"></div></div>
<div style="left:1674.7px;top:933.7px;width:9.2px;height:3.8px;background:#e03010;"></div>
<div style="left:1683.9px;top:933.7px;width:9.2px;height:3.8px;background:#30e010;"></div>
<div style="left:1693.1px;top:933.7px;width:9.2px;height:3.8px;background:#3010d0;"></div>
<div style="left:1712.4px;top:878px;width:1.1px;height:60px;background:repeating-linear-gradient(180deg,#143414 0,#143414 3px,#70ab70 3px,#70ab70 5.5px);"></div>
<div style="left:1713.5px;top:878px;width:1.2px;height:60px;background:#d4f4d4;"></div>
<div style="left:1714.7px;top:878px;width:28px;height:60px;background:#9eb0ba;"></div>
<div style="left:1719px;top:890.7px;width:17px;height:43px;background:radial-gradient(ellipse 45% 30% at 60% 75%,#e4e6e8 0,transparent 100%),linear-gradient(180deg,#a8b4bc,#c4ccd2 50%,#b8c0c6);"></div>
<div style="left:1720.00px;top:878.00px;font-size:10.5px;line-height:13px;color:#1c262c;white-space:pre;">V1-</div>
<div style="left:1746.6px;top:878px;width:44.8px;height:61.5px;background:#9eb0ba;"></div>
<div style="left:1745.6px;top:878px;width:1px;height:61.5px;background:#56646c;"></div>
<div style="left:1752.50px;top:878.00px;font-size:10.5px;line-height:13px;color:#1c262c;white-space:pre;letter-spacing:-0.200px;">V1-0032</div>
<div style="left:1751.8px;top:890px;width:38.5px;height:43.5px;background:linear-gradient(90deg,rgba(30,40,50,.6) 0,rgba(30,40,50,.6) 5%,transparent 9%,transparent 22%,rgba(30,42,54,.7) 26%,rgba(30,42,54,.7) 31%,transparent 35%,transparent 46%,rgba(34,46,60,.75) 50%,rgba(34,46,60,.75) 58%,transparent 63%,transparent 76%,rgba(40,50,60,.6) 80%,rgba(40,50,60,.6) 84%,transparent 88%),linear-gradient(180deg,#a4b4be,#8696a2 45%,#8e9aa4 80%,#a8b0b8);overflow:hidden;"><div style="left:-60px;top:-40px;width:300px;height:170px;filter:url(#nz);opacity:.45"></div><div style="left:-90px;top:-70px;width:300px;height:170px;filter:url(#nd);opacity:.5"></div></div>
<div style="left:625px;top:877.6px;width:1116.6px;height:66.5px;background:transparent;border:5.8px solid #f5b224;border-radius:3px;box-sizing:border-box;"></div>
<div style="left:630px;top:877px;width:1106px;height:1.2px;background:repeating-linear-gradient(90deg,#f5b224 0,#f5b224 6px,rgba(245,178,36,.35) 6px,rgba(245,178,36,.35) 9px);"></div>
<div style="left:32px;top:692.6px;width:799.8px;height:140.2px;background:#f2f2f2;border:6px solid #f5b224;border-radius:3px;box-sizing:border-box;"></div>
<div style="left:54.50px;top:702.80px;font-size:33.2px;line-height:40px;color:#404040;white-space:pre;font-weight:700;">Contact Sheet Output Resolution 5760 x 10800</div>
<div style="left:54.50px;top:743.00px;font-size:33.2px;line-height:40px;color:#404040;white-space:pre;font-weight:700;">Max Row Count = 10</div>
<div style="left:54.50px;top:783.20px;font-size:33.2px;line-height:40px;color:#404040;white-space:pre;font-weight:700;">Max Column Count = 3</div>
<svg style="left:1440px;top:735px" width="245" height="140" viewBox="1440 735 245 140"><path d="M1461.3 744.3 H1662 A7 7 0 0 1 1669 751.3 V797.8 A7 7 0 0 1 1662 804.8 H1543.3 L1500.2 861.500 L1489.3 804.8 H1461.3 A7 7 0 0 1 1454.3 797.8 V751.3 A7 7 0 0 1 1461.3 744.3Z" fill="#fff" stroke="#f5b224" stroke-width="6" stroke-linejoin="round"/></svg>
<div style="left:1484.60px;top:753.00px;font-size:38.4px;line-height:46px;color:#000;white-space:pre;">30 Shots</div>
</body></html>
